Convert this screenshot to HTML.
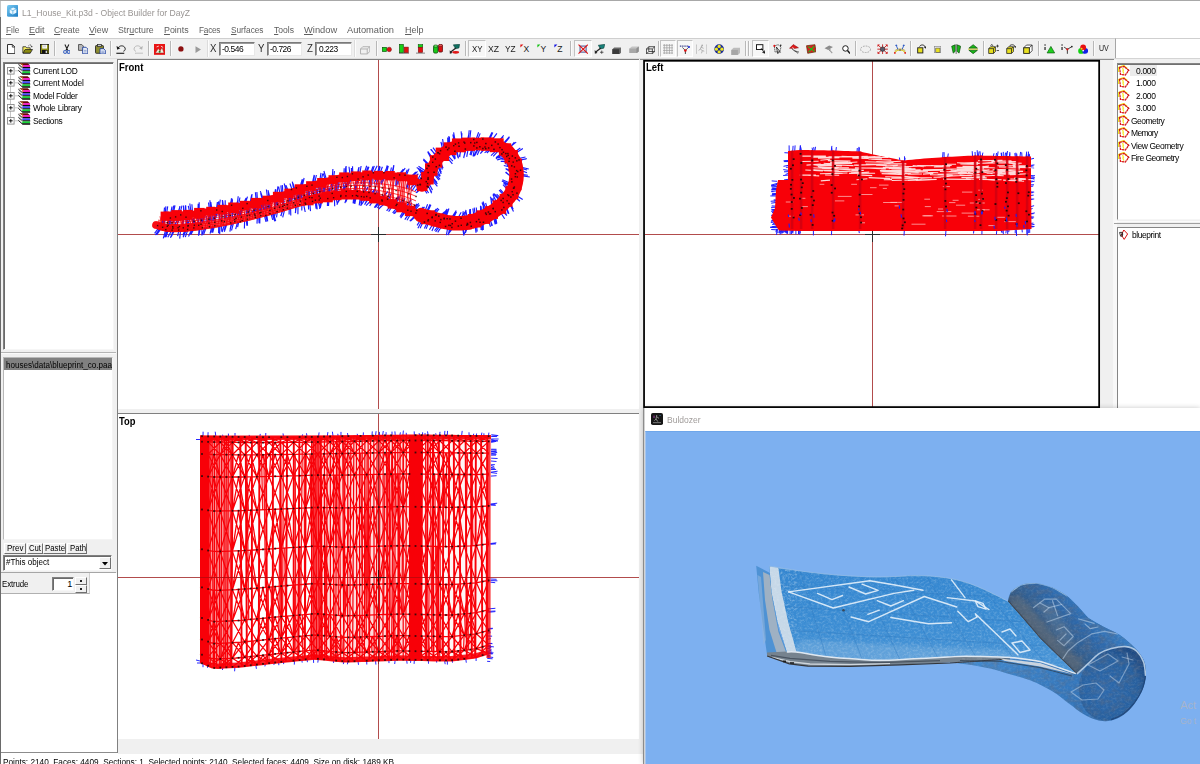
<!DOCTYPE html>
<html><head><meta charset="utf-8"><title>Object Builder</title>
<style>

*{box-sizing:border-box;margin:0;padding:0}
html,body{width:1200px;height:764px;overflow:hidden;background:#fff}
body{font-family:"Liberation Sans",sans-serif;font-size:9px;color:#000;position:relative}
.abs{position:absolute}
.tx{position:absolute;white-space:pre}
.tx u{text-decoration:underline;text-underline-offset:1px;text-decoration-thickness:1px}
#title{left:0;top:0;width:1200px;height:22px;background:#fff;border-top:1px solid #a8a8a8}
#lb{left:0;top:17px;width:1px;height:747px;background:#6a6a6a}
#tb{left:1px;top:38px;width:1115px;height:21px;background:#f0f0f0;border-top:1px solid #cfcfcf;border-bottom:1px solid #dedede;border-right:1px solid #a6a6a6}
#main{left:1px;top:59px;width:1199px;height:695px;background:#f0f0f0}
.vp{background:#fff;overflow:hidden}
.sunk{background:#fff;border:1px solid #808080;border-right-color:#f6f6f6;border-bottom-color:#f6f6f6}
.sunk2{background:#fff;border:1px solid #808080;border-right-color:#f6f6f6;border-bottom-color:#f6f6f6;box-shadow:inset 1px 1px 0 #6a6a6a}
.sunk3{background:#fff;border:1px solid #858585;border-right-color:#f6f6f6;border-bottom-color:#f6f6f6;box-shadow:inset 0 1px 0 #707070}
.rb{position:absolute;background:#f0f0f0;border:1px solid #fff;border-right-color:#707070;border-bottom-color:#707070}
.ax{position:absolute;background:#b24c4c}
.cr{position:absolute;background:#2a2a2a}

</style></head>
<body>

<div id="title" class="abs">
<svg class="abs" style="left:6.8px;top:4.4px" width="11.7" height="11.7" viewBox="0 0 12 12"><defs><linearGradient id="ti" x1="0" y1="0" x2="1" y2="1"><stop offset="0" stop-color="#7accf4"/><stop offset="1" stop-color="#1878c0"/></linearGradient></defs><rect width="12" height="12" rx="1.6" fill="url(#ti)"/><path d="M2.8 4.4 L6.4 2.6 L9.6 4 L9.6 8 L6 9.8 L2.8 8.2Z" fill="#eaf7ff"/><path d="M2.8 4.4 L6 5.8 L9.6 4 M6 5.8 V9.8" stroke="#58aee0" stroke-width="0.8" fill="none"/></svg>
<div class="tx" style="left:22.00px;top:5.67px;font-size:9.6px;line-height:12px;letter-spacing:0.000px;color:#999593;transform:scaleX(0.8976);transform-origin:0 0;">L1_House_Kit.p3d - Object Builder for DayZ</div></div>
<div class="tx" style="left:5.50px;top:24.47px;font-size:9.6px;line-height:12px;letter-spacing:0.000px;color:#5e5e5e;transform:scaleX(0.8663);transform-origin:0 0;"><u>F</u>ile</div><div class="tx" style="left:28.80px;top:24.47px;font-size:9.6px;line-height:12px;letter-spacing:0.000px;color:#5e5e5e;transform:scaleX(0.9428);transform-origin:0 0;"><u>E</u>dit</div><div class="tx" style="left:54.10px;top:24.47px;font-size:9.6px;line-height:12px;letter-spacing:0.000px;color:#5e5e5e;transform:scaleX(0.8925);transform-origin:0 0;"><u>C</u>reate</div><div class="tx" style="left:89.30px;top:24.47px;font-size:9.6px;line-height:12px;letter-spacing:0.000px;color:#5e5e5e;transform:scaleX(0.9309);transform-origin:0 0;"><u>V</u>iew</div><div class="tx" style="left:118.30px;top:24.47px;font-size:9.6px;line-height:12px;letter-spacing:0.000px;color:#5e5e5e;transform:scaleX(0.9169);transform-origin:0 0;">Str<u>u</u>cture</div><div class="tx" style="left:164.20px;top:24.47px;font-size:9.6px;line-height:12px;letter-spacing:0.000px;color:#5e5e5e;transform:scaleX(0.9261);transform-origin:0 0;"><u>P</u>oints</div><div class="tx" style="left:199.30px;top:24.47px;font-size:9.6px;line-height:12px;letter-spacing:-0.285px;color:#5e5e5e;transform:scaleX(0.8600);transform-origin:0 0;">F<u>a</u>ces</div><div class="tx" style="left:230.80px;top:24.47px;font-size:9.6px;line-height:12px;letter-spacing:-0.012px;color:#5e5e5e;transform:scaleX(0.8600);transform-origin:0 0;"><u>S</u>urfaces</div><div class="tx" style="left:273.50px;top:24.47px;font-size:9.6px;line-height:12px;letter-spacing:0.000px;color:#5e5e5e;transform:scaleX(0.8926);transform-origin:0 0;"><u>T</u>ools</div><div class="tx" style="left:303.70px;top:24.47px;font-size:9.6px;line-height:12px;letter-spacing:0.000px;color:#5e5e5e;transform:scaleX(0.9729);transform-origin:0 0;"><u>W</u>indow</div><div class="tx" style="left:346.80px;top:24.47px;font-size:9.6px;line-height:12px;letter-spacing:0.000px;color:#5e5e5e;transform:scaleX(0.9684);transform-origin:0 0;">Automation</div><div class="tx" style="left:404.50px;top:24.47px;font-size:9.6px;line-height:12px;letter-spacing:0.000px;color:#5e5e5e;transform:scaleX(0.9324);transform-origin:0 0;"><u>H</u>elp</div>
<div id="tb" class="abs"></div>
<svg class="abs" style="left:6.70px;top:43.84px" width="8.60" height="10.32" viewBox="0 0 10 12"><path d="M0.6 0.6H6.2L9.2 3.6V11.2H0.6Z" fill="#fff" stroke="#222" stroke-width="1.1"/><path d="M6.2 0.6V3.6H9.2" fill="none" stroke="#222" stroke-width="0.9"/></svg>
<svg class="abs" style="left:21.91px;top:43.84px" width="11.18" height="10.32" viewBox="0 0 13 12"><path d="M1 3.2H4.5L5.5 4.4H9.5V10.6H1Z" fill="#f8f060" stroke="#222" stroke-width="0.9"/><path d="M1.2 10.6L3.6 6.4H12.2L9.6 10.6Z" fill="#8a8a10" stroke="#222" stroke-width="0.9"/><path d="M7.5 2.2C8.6 0.6 10.6 0.8 11.2 2.2" fill="none" stroke="#222" stroke-width="0.9" stroke-dasharray="1.2 0.8"/><path d="M10.2 2.6L12.2 2.2L11.6 4.2Z" fill="#111"/></svg>
<svg class="abs" style="left:39.77px;top:43.84px" width="9.46" height="10.32" viewBox="0 0 11 12"><rect x="0.5" y="0.5" width="10" height="10.6" fill="#8c8c14" stroke="#111" stroke-width="1"/><rect x="2.6" y="0.9" width="5.6" height="4.4" fill="#fff"/><rect x="3.6" y="1.6" width="3.6" height="2.4" fill="#d8d8d8"/><rect x="2.2" y="7" width="6.6" height="4" fill="#111"/><rect x="6.6" y="7.8" width="1.4" height="2.8" fill="#f0f0f0"/></svg>
<div class="abs" style="left:54px;top:41px;width:1px;height:15px;background:#b8b8b8"></div><div class="abs" style="left:55px;top:41px;width:1px;height:15px;background:#fbfbfb"></div>
<svg class="abs" style="left:62.63px;top:43.84px" width="7.74" height="10.32" viewBox="0 0 9 12"><path d="M2.2 0.6L5.6 7.6M6.8 0.6L3.4 7.6" stroke="#1a1a1a" stroke-width="1.2" fill="none"/><circle cx="2.4" cy="9.2" r="1.7" fill="none" stroke="#3a62c0" stroke-width="1.2"/><circle cx="6.6" cy="9.2" r="1.7" fill="none" stroke="#3a62c0" stroke-width="1.2"/></svg>
<svg class="abs" style="left:77.84px;top:43.84px" width="10.32" height="10.32" viewBox="0 0 12 12"><path d="M0.6 0.6H4.4L6.2 2.4V7.4H0.6Z" fill="#b8b8b8" stroke="#3a3a3a" stroke-width="0.9"/><path d="M5.4 3.8H9.4L11.4 5.8V11.4H5.4Z" fill="#e8eef8" stroke="#1c3c9c" stroke-width="1"/><path d="M7 7.4H10M7 9.2H10" stroke="#7088c0" stroke-width="0.8"/></svg>
<svg class="abs" style="left:94.91px;top:43.84px" width="11.18" height="10.32" viewBox="0 0 13 12"><rect x="0.6" y="1.8" width="9.2" height="9" rx="0.8" fill="#8c8c30" stroke="#222" stroke-width="1"/><rect x="3" y="0.4" width="4.4" height="2.6" fill="#c8c8c8" stroke="#222" stroke-width="0.8"/><path d="M5.8 5.4H10L12 7.4V11.6H5.8Z" fill="#e0e8f8" stroke="#1c3c9c" stroke-width="1"/><path d="M7.4 8.4H10.4M7.4 10H10.4" stroke="#7088c0" stroke-width="0.8"/></svg>
<div class="abs" style="left:110px;top:41px;width:1px;height:15px;background:#b8b8b8"></div><div class="abs" style="left:111px;top:41px;width:1px;height:15px;background:#fbfbfb"></div>
<svg class="abs" style="left:115.84px;top:43.84px" width="10.32" height="10.32" viewBox="0 0 12 12"><path d="M2.4 4.6C4 1.4 9.4 1.2 10.6 4.8C11.2 7 9.8 8.2 8.6 8.4" fill="none" stroke="#1a1a1a" stroke-width="1.1"/><path d="M0.6 2.4L1.4 6.6L5 5Z" fill="#1a1a1a"/><path d="M0.4 10.8H9.6" stroke="#1a1a1a" stroke-width="1.3"/></svg>
<svg class="abs" style="left:132.84px;top:43.84px" width="10.32" height="10.32" viewBox="0 0 12 12"><path d="M9.6 4.6C8 1.4 2.6 1.2 1.4 4.8C0.8 7 2.2 8.2 3.4 8.4" fill="none" stroke="#b4b4b4" stroke-width="1.1"/><path d="M11.4 2.4L10.6 6.6L7 5Z" fill="#b4b4b4"/><path d="M2.4 10.8H11.6" stroke="#b8b8b8" stroke-width="1.3"/><path d="M3 11.8H12" stroke="#fff" stroke-width="0.8"/></svg>
<div class="abs" style="left:148px;top:41px;width:1px;height:15px;background:#b8b8b8"></div><div class="abs" style="left:149px;top:41px;width:1px;height:15px;background:#fbfbfb"></div>
<svg class="abs" style="left:153.91px;top:43.91px" width="11.18" height="11.18" viewBox="0 0 13 13"><rect x="0" y="0" width="13" height="12.6" fill="#e81414"/><path d="M1.6 10.4L5 5.2L7 8L9.4 4.2L11.6 10.4Z" fill="#f4f0e0" stroke="#902020" stroke-width="0.5"/><path d="M3 3.4L5.6 2.4M8 2.4L10.6 4" stroke="#fff" stroke-width="0.9"/><circle cx="6.6" cy="9" r="1.2" fill="#208020"/></svg>
<div class="abs" style="left:170px;top:41px;width:1px;height:15px;background:#b8b8b8"></div><div class="abs" style="left:171px;top:41px;width:1px;height:15px;background:#fbfbfb"></div>
<svg class="abs" style="left:178.49px;top:46.49px" width="6.02" height="6.02" viewBox="0 0 7 7"><circle cx="3.4" cy="3.4" r="3.1" fill="#8c1010"/></svg>
<svg class="abs" style="left:194.56px;top:45.63px" width="6.88" height="7.74" viewBox="0 0 8 9"><path d="M0.6 0.4L7 4.2L0.6 8Z" fill="#9a9a9a"/></svg>
<div class="abs" style="left:207px;top:40px;width:1px;height:17px;background:#dcdcdc"></div><div class="abs" style="left:208px;top:40px;width:1px;height:17px;background:#fdfdfd"></div>
<div class="tx" style="left:209.60px;top:40.62px;font-size:11.2px;line-height:15px;letter-spacing:-0.259px;color:#2a2a2a;transform:scaleX(0.8600);transform-origin:0 0;">X</div>
<div class="abs" style="left:219px;top:42px;width:36px;height:14px;background:#fff;border:1px solid #7a7a7a;border-right-color:#e8e8e8;border-bottom-color:#e8e8e8;box-shadow:inset 1px 1px 0 #9a9a9a"></div>
<div class="tx" style="left:222.00px;top:41.90px;font-size:9.8px;line-height:13px;letter-spacing:-0.510px;color:#000;transform:scaleX(0.8600);transform-origin:0 0;">-0.546</div>
<div class="tx" style="left:257.80px;top:40.62px;font-size:11.2px;line-height:15px;letter-spacing:-0.259px;color:#2a2a2a;transform:scaleX(0.8600);transform-origin:0 0;">Y</div>
<div class="abs" style="left:267px;top:42px;width:35px;height:14px;background:#fff;border:1px solid #7a7a7a;border-right-color:#e8e8e8;border-bottom-color:#e8e8e8;box-shadow:inset 1px 1px 0 #9a9a9a"></div>
<div class="tx" style="left:269.60px;top:41.90px;font-size:9.8px;line-height:13px;letter-spacing:-0.556px;color:#000;transform:scaleX(0.8600);transform-origin:0 0;">-0.726</div>
<div class="tx" style="left:307.00px;top:40.62px;font-size:11.2px;line-height:15px;letter-spacing:-0.332px;color:#2a2a2a;transform:scaleX(0.8600);transform-origin:0 0;">Z</div>
<div class="abs" style="left:315px;top:42px;width:37px;height:14px;background:#fff;border:1px solid #7a7a7a;border-right-color:#e8e8e8;border-bottom-color:#e8e8e8;box-shadow:inset 1px 1px 0 #9a9a9a"></div>
<div class="tx" style="left:318.80px;top:41.90px;font-size:9.8px;line-height:13px;letter-spacing:-0.551px;color:#000;transform:scaleX(0.8600);transform-origin:0 0;">0.223</div>
<div class="abs" style="left:354px;top:40px;width:1px;height:17px;background:#dcdcdc"></div><div class="abs" style="left:355px;top:40px;width:1px;height:17px;background:#fdfdfd"></div>
<svg class="abs" style="left:359.84px;top:44.84px" width="10.32" height="10.32" viewBox="0 0 12 12"><path d="M0.6 4.6H8.4V10.4H0.6Z M0.6 4.6L3.2 2H11.4V7.6L8.4 10.4 M8.4 4.6L11.4 2" fill="none" stroke="#b0b0b0" stroke-width="1.1"/></svg>
<div class="abs" style="left:376px;top:41px;width:1px;height:15px;background:#b8b8b8"></div><div class="abs" style="left:377px;top:41px;width:1px;height:15px;background:#fbfbfb"></div>
<svg class="abs" style="left:381.84px;top:45.63px" width="10.32" height="7.74" viewBox="0 0 12 9"><rect x="0.4" y="1.6" width="4.8" height="4.8" fill="#18d018" stroke="#0a5a0a" stroke-width="0.8"/><circle cx="8.4" cy="4" r="2.6" fill="#e01010" stroke="#701010" stroke-width="0.6"/></svg>
<svg class="abs" style="left:398.84px;top:43.84px" width="10.32" height="10.32" viewBox="0 0 12 12"><rect x="0.6" y="0.6" width="4.4" height="9.6" fill="#18d018" stroke="#0a5a0a" stroke-width="0.8"/><rect x="6" y="3.6" width="4.8" height="6.6" fill="#e01010" stroke="#701010" stroke-width="0.6"/><path d="M0 10.8H12" stroke="#444" stroke-width="0.7"/></svg>
<svg class="abs" style="left:415.77px;top:43.84px" width="9.46" height="10.32" viewBox="0 0 11 12"><rect x="2.6" y="0.8" width="5.2" height="3" fill="#18d018" stroke="#0a5a0a" stroke-width="0.7"/><rect x="2.6" y="3.8" width="5.2" height="6.2" fill="#e01010" stroke="#701010" stroke-width="0.6"/><path d="M0 10.6H11" stroke="#555" stroke-width="0.8"/></svg>
<svg class="abs" style="left:432.84px;top:43.84px" width="10.32" height="10.32" viewBox="0 0 12 12"><rect x="0.6" y="2" width="5" height="8.6" rx="1.6" fill="#18c818" stroke="#0a4a0a" stroke-width="0.9"/><ellipse cx="3.1" cy="2.4" rx="2.5" ry="1.3" fill="#70f070" stroke="#0a4a0a" stroke-width="0.7"/><rect x="6.4" y="1" width="4.8" height="8.4" rx="1.6" fill="#d81010" stroke="#501010" stroke-width="0.9"/><ellipse cx="8.8" cy="1.6" rx="2.4" ry="1.2" fill="#f06060" stroke="#501010" stroke-width="0.7"/></svg>
<svg class="abs" style="left:448.91px;top:43.84px" width="11.18" height="10.32" viewBox="0 0 13 12"><path d="M5 1L12.4 0.4L11.6 4.6L7.6 5.6Z" fill="#107060" stroke="#083830" stroke-width="0.6"/><path d="M8 4.6L1.6 9.6" stroke="#222" stroke-width="1.4"/><path d="M0.8 7.2L4 10.6L1 11.4Z" fill="#222"/><ellipse cx="7.8" cy="9.6" rx="4" ry="1.6" fill="#e01818"/></svg>
<div class="abs" style="left:465px;top:41px;width:1px;height:15px;background:#b8b8b8"></div><div class="abs" style="left:466px;top:41px;width:1px;height:15px;background:#fbfbfb"></div>
<div class="abs" style="left:468px;top:40px;width:18px;height:17px;background:#f7f7f7;border:1px solid #c2c2c2;border-right-color:#fff;border-bottom-color:#fff"></div>
<div class="tx" style="left:472.00px;top:44.12px;font-size:8.6px;line-height:11px;letter-spacing:0.000px;color:#222;transform:scaleX(0.9243);transform-origin:0 0;">XY</div>
<div class="tx" style="left:488.00px;top:44.12px;font-size:8.6px;line-height:11px;letter-spacing:0.000px;color:#222;transform:scaleX(1.0014);transform-origin:0 0;">XZ</div>
<div class="tx" style="left:504.60px;top:44.12px;font-size:8.6px;line-height:11px;letter-spacing:0.000px;color:#222;transform:scaleX(0.9650);transform-origin:0 0;">YZ</div>
<div class="tx" style="left:523.60px;top:44.12px;font-size:8.6px;line-height:11px;letter-spacing:0.000px;color:#222;transform:scaleX(1.0000);transform-origin:0 0;">X</div>
<svg class="abs" style="left:520.4px;top:44px" width="4" height="4"><path d="M0.4 0.4H3.4L0.4 3.4Z" fill="#e01010"/></svg>
<div class="tx" style="left:540.60px;top:44.12px;font-size:8.6px;line-height:11px;letter-spacing:0.000px;color:#222;transform:scaleX(1.0000);transform-origin:0 0;">Y</div>
<svg class="abs" style="left:537.4px;top:44px" width="4" height="4"><path d="M0.4 0.4H3.4L0.4 3.4Z" fill="#10c010"/></svg>
<div class="tx" style="left:557.20px;top:44.12px;font-size:8.6px;line-height:11px;letter-spacing:0.000px;color:#222;transform:scaleX(1.0000);transform-origin:0 0;">Z</div>
<svg class="abs" style="left:554.0px;top:44px" width="4" height="4"><path d="M0.4 0.4H3.4L0.4 3.4Z" fill="#1010e0"/></svg>
<div class="abs" style="left:570px;top:41px;width:1px;height:15px;background:#b8b8b8"></div><div class="abs" style="left:571px;top:41px;width:1px;height:15px;background:#fbfbfb"></div>
<div class="abs" style="left:574px;top:40px;width:18px;height:17px;background:#f7f7f7;border:1px solid #c2c2c2;border-right-color:#fff;border-bottom-color:#fff"></div>
<svg class="abs" style="left:577.84px;top:43.84px" width="10.32" height="10.32" viewBox="0 0 12 12"><rect x="2.4" y="2.4" width="7" height="7" fill="none" stroke="#203080" stroke-width="1"/><path d="M0.6 0.8L11.4 11.2M11.4 0.8L0.6 11.2" stroke="#e01010" stroke-width="1.2"/></svg>
<svg class="abs" style="left:593.91px;top:43.84px" width="11.18" height="10.32" viewBox="0 0 13 12"><path d="M5 1.4L12.6 0.4L11.4 4.8L7.4 5.8Z" fill="#18807a" stroke="#083830" stroke-width="0.6"/><path d="M8 4.6L2 9.4" stroke="#222" stroke-width="1.4"/><path d="M0.8 7L4 10.6L1 11.4Z" fill="#222"/><path d="M7 9.6H11M9 7.6V11.4" stroke="#333" stroke-width="0.9"/></svg>
<svg class="abs" style="left:611.77px;top:46.63px" width="9.46" height="7.74" viewBox="0 0 11 9"><path d="M0.4 2.6L2.6 0.6H10.6V6.6L8.4 8.6H0.4Z" fill="#6a6a6a"/><rect x="0.4" y="2.6" width="8" height="6" fill="#3a3a3a"/></svg>
<svg class="abs" style="left:628.84px;top:45.63px" width="10.32" height="7.74" viewBox="0 0 12 9"><path d="M0.4 3L3.4 0.6H11.4V6.4L8.4 8.8H0.4Z" fill="#c4c4c4"/><rect x="0.4" y="3" width="8" height="5.8" fill="#a8a8a8"/><path d="M8.4 3V8.8L11.4 6.4V0.6Z" fill="#8e8e8e"/></svg>
<svg class="abs" style="left:645.77px;top:45.70px" width="9.46" height="8.60" viewBox="0 0 11 10"><path d="M0.6 3.4H7.4V9H0.6Z M0.6 3.4L3.2 0.8H10.2V6.4L7.4 9 M7.4 3.4L10.2 0.8 M3.2 0.8V6.4H10.2 M3.2 6.4L0.6 9" fill="none" stroke="#2a2a2a" stroke-width="0.9"/></svg>
<div class="abs" style="left:658px;top:41px;width:1px;height:15px;background:#b8b8b8"></div><div class="abs" style="left:659px;top:41px;width:1px;height:15px;background:#fbfbfb"></div>
<div class="abs" style="left:660px;top:40px;width:16px;height:17px;background:#f7f7f7;border:1px solid #c2c2c2;border-right-color:#fff;border-bottom-color:#fff"></div>
<svg class="abs" style="left:662.84px;top:43.84px" width="10.32" height="10.32" viewBox="0 0 12 12"><path d="M0 1.5H12M0 4.5H12M0 7.5H12M0 10.5H12M1.5 0V12M4.5 0V12M7.5 0V12M10.5 0V12" stroke="#9a9a9a" stroke-width="0.8"/></svg>
<div class="abs" style="left:677px;top:40px;width:16px;height:17px;background:#f7f7f7;border:1px solid #c2c2c2;border-right-color:#fff;border-bottom-color:#fff"></div>
<svg class="abs" style="left:678.91px;top:43.84px" width="11.18" height="10.32" viewBox="0 0 13 12"><path d="M1 2.4H11" stroke="#404890" stroke-width="1.6" stroke-dasharray="1.4 0.7"/><path d="M4 4L7.4 7.6L12 3" fill="none" stroke="#303030" stroke-width="0.9"/><path d="M7.4 7.6V11.6" stroke="#222" stroke-width="1"/><circle cx="7.4" cy="7.6" r="1.5" fill="#e01010"/><circle cx="11.6" cy="3.4" r="1.2" fill="#2030e0"/></svg>
<svg class="abs" style="left:695.91px;top:43.84px" width="11.18" height="10.32" viewBox="0 0 13 12"><path d="M1 1H0.4V11H1M12 1H12.6V11H12" fill="none" stroke="#aaa" stroke-width="0.8"/><path d="M6.6 2.4L5 6L7.4 7.6L6.4 10.8M5 6L3 7.4M5.6 3.6L8.8 5M7.4 7.6L9.6 8.4" fill="none" stroke="#a8a8a8" stroke-width="1"/><circle cx="7.2" cy="1.6" r="1" fill="#a8a8a8"/></svg>
<svg class="abs" style="left:713.84px;top:43.84px" width="10.32" height="10.32" viewBox="0 0 12 12"><circle cx="6" cy="6" r="5.6" fill="#1a2a9a"/><circle cx="6" cy="2.8" r="1.9" fill="#f0e820"/><circle cx="6" cy="9.2" r="1.9" fill="#f0e820"/><circle cx="2.8" cy="6" r="1.9" fill="#f0e820"/><circle cx="9.2" cy="6" r="1.9" fill="#f0e820"/><circle cx="6" cy="6" r="1.2" fill="#1a2a9a"/></svg>
<svg class="abs" style="left:730.77px;top:46.70px" width="9.46" height="8.60" viewBox="0 0 11 10"><path d="M0.4 3.4L3 1H10.6V6.8L8 9.2H0.4Z" fill="#bcbcbc"/><rect x="0.4" y="3.4" width="7.6" height="5.8" fill="#a6a6a6"/></svg>
<div class="abs" style="left:745px;top:41px;width:1px;height:15px;background:#b8b8b8"></div><div class="abs" style="left:746px;top:41px;width:1px;height:15px;background:#fbfbfb"></div>
<div class="abs" style="left:748px;top:41px;width:1px;height:15px;background:#b8b8b8"></div><div class="abs" style="left:749px;top:41px;width:1px;height:15px;background:#fbfbfb"></div>
<div class="abs" style="left:752px;top:40px;width:17px;height:17px;background:#f7f7f7;border:1px solid #c2c2c2;border-right-color:#fff;border-bottom-color:#fff"></div>
<svg class="abs" style="left:755.77px;top:43.84px" width="9.46" height="10.32" viewBox="0 0 11 12"><rect x="0.6" y="0.8" width="7.4" height="5.6" fill="#fff" stroke="#111" stroke-width="1.1"/><path d="M6 5L10.2 10.4M7.4 9.6L10.4 10.6L10 7.6" fill="none" stroke="#111" stroke-width="1.1"/></svg>
<svg class="abs" style="left:772.77px;top:43.84px" width="9.46" height="10.32" viewBox="0 0 11 12"><path d="M1.6 2.2L6 0.8L9.4 3.4L8 8.4L2.4 9.4Z" fill="none" stroke="#222" stroke-width="0.9" stroke-dasharray="1.6 0.8"/><circle cx="1.6" cy="2.2" r="1.2" fill="#e01010"/><path d="M4 3.6L8.6 9.6L6.4 9L5.6 11.2Z" fill="#fff" stroke="#111" stroke-width="0.9"/><circle cx="9" cy="1.4" r="0.9" fill="#111"/></svg>
<svg class="abs" style="left:788.84px;top:43.84px" width="10.32" height="10.32" viewBox="0 0 12 12"><path d="M0.6 5L5 0.6L11 4.4L6.4 5.2Z" fill="#e01818" stroke="#801010" stroke-width="0.6"/><path d="M3.6 5.6C5 8 8 8.4 10.6 11M5.6 6.4C6.6 8.6 9 8.6 11.6 9.4" fill="none" stroke="#444" stroke-width="1"/><path d="M4 3.6L6.4 6.6" stroke="#fff" stroke-width="0.8"/></svg>
<svg class="abs" style="left:805.84px;top:43.84px" width="10.32" height="10.32" viewBox="0 0 12 12"><path d="M0.6 2L10.4 0.8L11.6 9L2 10.8Z" fill="#d82020" stroke="#6a3010" stroke-width="0.9"/><path d="M2.4 3L10 8.8M9.6 2.4L3 9.4" stroke="#18c018" stroke-width="1.3"/></svg>
<svg class="abs" style="left:823.77px;top:43.84px" width="9.46" height="10.32" viewBox="0 0 11 12"><path d="M0.6 5L6 1.6L10.4 3.4L5 7Z" fill="#8c8c8c"/><path d="M5 5.4L9.6 10.6" stroke="#9a9a9a" stroke-width="1.2"/><path d="M6 7.6L7.6 6.4" stroke="#777" stroke-width="0.8"/></svg>
<svg class="abs" style="left:841.70px;top:44.84px" width="8.60" height="10.32" viewBox="0 0 10 12"><circle cx="4" cy="4" r="3.2" fill="#fff" stroke="#111" stroke-width="1.1"/><path d="M6.4 6.4L9.4 9.8" stroke="#111" stroke-width="1.6"/></svg>
<div class="abs" style="left:855px;top:41px;width:1px;height:15px;background:#b8b8b8"></div><div class="abs" style="left:856px;top:41px;width:1px;height:15px;background:#fbfbfb"></div>
<svg class="abs" style="left:859.91px;top:44.70px" width="11.18" height="8.60" viewBox="0 0 13 10"><ellipse cx="6.5" cy="5" rx="5.8" ry="3.8" fill="none" stroke="#9c9c9c" stroke-width="1" stroke-dasharray="2 1.2"/></svg>
<svg class="abs" style="left:876.91px;top:43.84px" width="11.18" height="10.32" viewBox="0 0 13 12"><path d="M1.4 1.4L11.6 10.6M11.6 1.4L1.4 10.6M6.5 0.4V11.6M0.4 6H12.6" stroke="#c01010" stroke-width="1"/><circle cx="6.5" cy="6" r="2.6" fill="#5a5a6a" stroke="#222" stroke-width="0.6"/><path d="M0.6 0.6H3.4L0.6 3.4ZM12.4 0.6V3.4L9.6 0.6ZM0.6 11.4V8.6L3.4 11.4ZM12.4 11.4H9.6L12.4 8.6Z" fill="#d01010"/></svg>
<svg class="abs" style="left:893.98px;top:43.84px" width="12.04" height="10.32" viewBox="0 0 14 12"><path d="M0.8 10C3.6 6 10.4 6 13.2 10" fill="none" stroke="#d8c820" stroke-width="1.3"/><path d="M0.8 8C4 5 10 5 13.2 8" fill="none" stroke="#b09010" stroke-width="0.8"/><path d="M4.6 6.4L2.6 1.6M9.4 6.4L11.4 1.6" stroke="#2050c0" stroke-width="1"/><path d="M1.4 2.4L2.4 0.2L4.2 2Z M9.8 2L11.6 0.2L12.6 2.4Z" fill="#2050c0"/><circle cx="1" cy="10.4" r="1" fill="#e01010"/><circle cx="13" cy="10.4" r="1" fill="#e01010"/><circle cx="7" cy="7" r="0.8" fill="#222"/></svg>
<div class="abs" style="left:910px;top:41px;width:1px;height:15px;background:#b8b8b8"></div><div class="abs" style="left:911px;top:41px;width:1px;height:15px;background:#fbfbfb"></div>
<svg class="abs" style="left:916.77px;top:43.84px" width="9.46" height="10.32" viewBox="0 0 11 12"><rect x="0.8" y="4.4" width="6" height="6" fill="#e8e020" stroke="#222" stroke-width="1.1"/><path d="M3 3C4 0.4 8.6 0.4 9.6 3.6" fill="none" stroke="#222" stroke-width="1.1"/><path d="M8 3.4L10 5.6L10.8 2.8Z" fill="#222"/></svg>
<svg class="abs" style="left:933.63px;top:45.63px" width="7.74" height="7.74" viewBox="0 0 9 9"><rect x="0.6" y="0.6" width="7.4" height="7.4" fill="#fff" stroke="#888" stroke-width="0.8"/><rect x="2" y="2.4" width="5" height="5" fill="#e8e020" stroke="#555" stroke-width="0.8"/></svg>
<svg class="abs" style="left:950.84px;top:43.84px" width="10.32" height="10.32" viewBox="0 0 12 12"><path d="M4.8 1L0.8 2.6L2.6 10.6L4.8 8.6Z" fill="#18b818" stroke="#0a4a0a" stroke-width="0.8"/><path d="M7.2 1L11.2 2.6L9.4 10.6L7.2 8.6Z" fill="#18b818" stroke="#0a4a0a" stroke-width="0.8"/><path d="M6 0V12" stroke="#222" stroke-width="0.7"/></svg>
<svg class="abs" style="left:967.84px;top:43.84px" width="10.32" height="10.32" viewBox="0 0 12 12"><path d="M1 4.8L6 0.8L11 4.8Z" fill="#18b818" stroke="#0a4a0a" stroke-width="0.8"/><path d="M1 7.2L6 11.2L11 7.2Z" fill="#18b818" stroke="#0a4a0a" stroke-width="0.8"/><path d="M0 6H12" stroke="#e0d020" stroke-width="0.9"/></svg>
<div class="abs" style="left:983px;top:41px;width:1px;height:15px;background:#b8b8b8"></div><div class="abs" style="left:984px;top:41px;width:1px;height:15px;background:#fbfbfb"></div>
<svg class="abs" style="left:987.91px;top:43.84px" width="11.18" height="10.32" viewBox="0 0 13 12"><path d="M0.8 5.4h5.6v5.6h-5.6ZM0.8 5.4l2.2 -2.2h5.6v5.6l-2.2 2.2M6.4 5.4l2.2 -2.2" fill="#e8e020" stroke="#222" stroke-width="0.9"/><path d="M9.6 2.4H12.6M11 0.8V4M10 7.6H12.8" stroke="#222" stroke-width="0.9"/><path d="M3 2.2L4.4 0.4L5.8 2.2" fill="none" stroke="#222" stroke-width="0.9"/></svg>
<svg class="abs" style="left:1005.84px;top:43.84px" width="10.32" height="10.32" viewBox="0 0 12 12"><path d="M0.8 5.4h5.6v5.6h-5.6ZM0.8 5.4l2.2 -2.2h5.6v5.6l-2.2 2.2M6.4 5.4l2.2 -2.2" fill="#e8e020" stroke="#222" stroke-width="0.9"/><path d="M4 2.4C5.6 0.2 9.6 0.4 10.6 3" fill="none" stroke="#222" stroke-width="1"/><path d="M9.2 2.8L11 4.8L11.6 2.2Z" fill="#222"/></svg>
<svg class="abs" style="left:1022.84px;top:43.84px" width="10.32" height="10.32" viewBox="0 0 12 12"><path d="M0.8 4.4h6.6v6.6h-6.6ZM0.8 4.4l3.2 -3.2h6.6v6.6l-3.2 3.2M7.4 4.4l3.2 -3.2" fill="#fff" stroke="#222" stroke-width="0.9"/><path d="M0.8 4.4h6.6v6.6h-6.6Z" fill="#e8e020" stroke="#222" stroke-width="0.9"/></svg>
<div class="abs" style="left:1038px;top:41px;width:1px;height:15px;background:#b8b8b8"></div><div class="abs" style="left:1039px;top:41px;width:1px;height:15px;background:#fbfbfb"></div>
<svg class="abs" style="left:1043.91px;top:43.84px" width="11.18" height="10.32" viewBox="0 0 13 12"><path d="M3.6 10.4L8 2.8L12.4 10.4Z" fill="#20d020" stroke="#0a5a0a" stroke-width="0.8"/><path d="M1.2 3.4V7" stroke="#111" stroke-width="1.3"/><circle cx="1.2" cy="1.2" r="0.8" fill="#111"/></svg>
<svg class="abs" style="left:1060.98px;top:43.84px" width="12.04" height="10.32" viewBox="0 0 14 12"><path d="M1.2 3.4V7" stroke="#111" stroke-width="1.3"/><circle cx="1.2" cy="1.2" r="0.8" fill="#111"/><path d="M3.6 3.6L7.4 6.2L12.4 3.2M7.4 6.2V11.4" fill="none" stroke="#222" stroke-width="1"/><circle cx="7.4" cy="6.2" r="1.3" fill="#e01010"/><circle cx="12.6" cy="3" r="1" fill="#222"/></svg>
<svg class="abs" style="left:1077.84px;top:43.84px" width="10.32" height="10.32" viewBox="0 0 12 12"><circle cx="3.6" cy="8" r="3.4" fill="#10d010"/><circle cx="8.4" cy="8" r="3.4" fill="#1020e8"/><circle cx="6" cy="4" r="3.4" fill="#e81010"/><circle cx="4.2" cy="5.4" r="1.1" fill="#e8e020"/><circle cx="6" cy="7.6" r="1" fill="#fff"/></svg>
<div class="abs" style="left:1093px;top:41px;width:1px;height:15px;background:#b8b8b8"></div><div class="abs" style="left:1094px;top:41px;width:1px;height:15px;background:#fbfbfb"></div>
<div class="tx" style="left:1099.00px;top:43.06px;font-size:8.2px;line-height:11px;letter-spacing:-0.212px;color:#222;transform:scaleX(0.8600);transform-origin:0 0;">UV</div>
<div id="main" class="abs"></div>
<div id="lb" class="abs"></div><div class="abs" style="left:0;top:1px;width:1px;height:16px;background:#c6c6c6"></div>

<!-- left tree panel -->
<div class="abs sunk2" style="left:3px;top:62px;width:111px;height:288px"></div>
<div class="abs" style="left:10px;top:74px;width:1px;height:43px;background:#c4c4c4"></div>
<svg class="abs" style="left:7px;top:67px" width="13" height="8" viewBox="0 0 13 8">
<rect x="0.5" y="0.5" width="6.6" height="6.6" fill="#fff" stroke="#8c8c8c" stroke-width="0.9"/><path d="M1.9 3.8H5.7M3.8 1.9V5.7" stroke="#000" stroke-width="0.9"/>
<path d="M7.6 3.8H12" stroke="#b8b8b8" stroke-width="0.8"/></svg><svg class="abs" style="left:17.8px;top:63px" width="13" height="12" viewBox="0 0 13 12">
<path d="M1.2 0.2 L9.6 0.2 L12 2.2 L4.2 2.2Z" fill="#6e0808"/>
<rect x="4.2" y="2.1" width="7.8" height="2.1" fill="#f214c4"/><path d="M4.2 4.1H12.2V5.5H4.8Z" fill="#080808"/>
<rect x="4.2" y="5.4" width="7.8" height="1.9" fill="#4848ff"/><path d="M4.2 7.2H12.2V8.5H4.8Z" fill="#080808"/>
<rect x="4.2" y="8.4" width="7.8" height="2" fill="#14d434"/><path d="M3.6 10.3H12.2V11.7H4.4Z" fill="#080808"/>
<path d="M0.4 1.2 L4 4.4 M0.4 4.3 L4 7.4 M0.4 7.4 L4 10.6" stroke="#151515" stroke-width="1"/>
<path d="M0.6 2.8 L3.6 5.6 M0.6 5.9 L3.6 8.8" stroke="#bbb" stroke-width="0.6"/>
<path d="M3.2 0.5 L4.8 2.2 L4.8 4" stroke="#d8a020" stroke-width="0.9" fill="none"/>
</svg><div class="tx" style="left:33.00px;top:63.64px;font-size:9.7px;line-height:13px;letter-spacing:-0.295px;color:#000;transform:scaleX(0.8600);transform-origin:0 0;">Current LOD</div><svg class="abs" style="left:7px;top:79px" width="13" height="8" viewBox="0 0 13 8">
<rect x="0.5" y="0.5" width="6.6" height="6.6" fill="#fff" stroke="#8c8c8c" stroke-width="0.9"/><path d="M1.9 3.8H5.7M3.8 1.9V5.7" stroke="#000" stroke-width="0.9"/>
<path d="M7.6 3.8H12" stroke="#b8b8b8" stroke-width="0.8"/></svg><svg class="abs" style="left:17.8px;top:76px" width="13" height="12" viewBox="0 0 13 12">
<path d="M1.2 0.2 L9.6 0.2 L12 2.2 L4.2 2.2Z" fill="#6e0808"/>
<rect x="4.2" y="2.1" width="7.8" height="2.1" fill="#f214c4"/><path d="M4.2 4.1H12.2V5.5H4.8Z" fill="#080808"/>
<rect x="4.2" y="5.4" width="7.8" height="1.9" fill="#4848ff"/><path d="M4.2 7.2H12.2V8.5H4.8Z" fill="#080808"/>
<rect x="4.2" y="8.4" width="7.8" height="2" fill="#14d434"/><path d="M3.6 10.3H12.2V11.7H4.4Z" fill="#080808"/>
<path d="M0.4 1.2 L4 4.4 M0.4 4.3 L4 7.4 M0.4 7.4 L4 10.6" stroke="#151515" stroke-width="1"/>
<path d="M0.6 2.8 L3.6 5.6 M0.6 5.9 L3.6 8.8" stroke="#bbb" stroke-width="0.6"/>
<path d="M3.2 0.5 L4.8 2.2 L4.8 4" stroke="#d8a020" stroke-width="0.9" fill="none"/>
</svg><div class="tx" style="left:33.00px;top:76.14px;font-size:9.7px;line-height:13px;letter-spacing:-0.193px;color:#000;transform:scaleX(0.8600);transform-origin:0 0;">Current Model</div><svg class="abs" style="left:7px;top:92px" width="13" height="8" viewBox="0 0 13 8">
<rect x="0.5" y="0.5" width="6.6" height="6.6" fill="#fff" stroke="#8c8c8c" stroke-width="0.9"/><path d="M1.9 3.8H5.7M3.8 1.9V5.7" stroke="#000" stroke-width="0.9"/>
<path d="M7.6 3.8H12" stroke="#b8b8b8" stroke-width="0.8"/></svg><svg class="abs" style="left:17.8px;top:88px" width="13" height="12" viewBox="0 0 13 12">
<path d="M1.2 0.2 L9.6 0.2 L12 2.2 L4.2 2.2Z" fill="#6e0808"/>
<rect x="4.2" y="2.1" width="7.8" height="2.1" fill="#f214c4"/><path d="M4.2 4.1H12.2V5.5H4.8Z" fill="#080808"/>
<rect x="4.2" y="5.4" width="7.8" height="1.9" fill="#4848ff"/><path d="M4.2 7.2H12.2V8.5H4.8Z" fill="#080808"/>
<rect x="4.2" y="8.4" width="7.8" height="2" fill="#14d434"/><path d="M3.6 10.3H12.2V11.7H4.4Z" fill="#080808"/>
<path d="M0.4 1.2 L4 4.4 M0.4 4.3 L4 7.4 M0.4 7.4 L4 10.6" stroke="#151515" stroke-width="1"/>
<path d="M0.6 2.8 L3.6 5.6 M0.6 5.9 L3.6 8.8" stroke="#bbb" stroke-width="0.6"/>
<path d="M3.2 0.5 L4.8 2.2 L4.8 4" stroke="#d8a020" stroke-width="0.9" fill="none"/>
</svg><div class="tx" style="left:33.00px;top:88.64px;font-size:9.7px;line-height:13px;letter-spacing:-0.394px;color:#000;transform:scaleX(0.8600);transform-origin:0 0;">Model Folder</div><svg class="abs" style="left:7px;top:104px" width="13" height="8" viewBox="0 0 13 8">
<rect x="0.5" y="0.5" width="6.6" height="6.6" fill="#fff" stroke="#8c8c8c" stroke-width="0.9"/><path d="M1.9 3.8H5.7M3.8 1.9V5.7" stroke="#000" stroke-width="0.9"/>
<path d="M7.6 3.8H12" stroke="#b8b8b8" stroke-width="0.8"/></svg><svg class="abs" style="left:17.8px;top:101px" width="13" height="12" viewBox="0 0 13 12">
<path d="M1.2 0.2 L9.6 0.2 L12 2.2 L4.2 2.2Z" fill="#6e0808"/>
<rect x="4.2" y="2.1" width="7.8" height="2.1" fill="#f214c4"/><path d="M4.2 4.1H12.2V5.5H4.8Z" fill="#080808"/>
<rect x="4.2" y="5.4" width="7.8" height="1.9" fill="#4848ff"/><path d="M4.2 7.2H12.2V8.5H4.8Z" fill="#080808"/>
<rect x="4.2" y="8.4" width="7.8" height="2" fill="#14d434"/><path d="M3.6 10.3H12.2V11.7H4.4Z" fill="#080808"/>
<path d="M0.4 1.2 L4 4.4 M0.4 4.3 L4 7.4 M0.4 7.4 L4 10.6" stroke="#151515" stroke-width="1"/>
<path d="M0.6 2.8 L3.6 5.6 M0.6 5.9 L3.6 8.8" stroke="#bbb" stroke-width="0.6"/>
<path d="M3.2 0.5 L4.8 2.2 L4.8 4" stroke="#d8a020" stroke-width="0.9" fill="none"/>
</svg><div class="tx" style="left:33.00px;top:101.14px;font-size:9.7px;line-height:13px;letter-spacing:-0.252px;color:#000;transform:scaleX(0.8600);transform-origin:0 0;">Whole Library</div><svg class="abs" style="left:7px;top:117px" width="13" height="8" viewBox="0 0 13 8">
<rect x="0.5" y="0.5" width="6.6" height="6.6" fill="#fff" stroke="#8c8c8c" stroke-width="0.9"/><path d="M1.9 3.8H5.7M3.8 1.9V5.7" stroke="#000" stroke-width="0.9"/>
<path d="M7.6 3.8H12" stroke="#b8b8b8" stroke-width="0.8"/></svg><svg class="abs" style="left:17.8px;top:113px" width="13" height="12" viewBox="0 0 13 12">
<path d="M1.2 0.2 L9.6 0.2 L12 2.2 L4.2 2.2Z" fill="#6e0808"/>
<rect x="4.2" y="2.1" width="7.8" height="2.1" fill="#f214c4"/><path d="M4.2 4.1H12.2V5.5H4.8Z" fill="#080808"/>
<rect x="4.2" y="5.4" width="7.8" height="1.9" fill="#4848ff"/><path d="M4.2 7.2H12.2V8.5H4.8Z" fill="#080808"/>
<rect x="4.2" y="8.4" width="7.8" height="2" fill="#14d434"/><path d="M3.6 10.3H12.2V11.7H4.4Z" fill="#080808"/>
<path d="M0.4 1.2 L4 4.4 M0.4 4.3 L4 7.4 M0.4 7.4 L4 10.6" stroke="#151515" stroke-width="1"/>
<path d="M0.6 2.8 L3.6 5.6 M0.6 5.9 L3.6 8.8" stroke="#bbb" stroke-width="0.6"/>
<path d="M3.2 0.5 L4.8 2.2 L4.8 4" stroke="#d8a020" stroke-width="0.9" fill="none"/>
</svg><div class="tx" style="left:33.00px;top:113.64px;font-size:9.7px;line-height:13px;letter-spacing:-0.391px;color:#000;transform:scaleX(0.8600);transform-origin:0 0;">Sections</div>
<!-- divider -->
<div class="abs" style="left:1px;top:352px;width:115px;height:1px;background:#b4b4b4"></div>
<div class="abs" style="left:1px;top:353px;width:115px;height:1px;background:#fafafa"></div>
<!-- texture list -->
<div class="abs" style="left:3px;top:357px;width:110px;height:183px;background:#fff;border:1px solid #b8b8b8;border-right-color:#f4f4f4;border-bottom-color:#f4f4f4"></div>
<div class="abs" style="left:4px;top:358px;width:108px;height:12px;background:#808080"></div>
<div class="tx" style="left:5.50px;top:358.61px;font-size:9.2px;line-height:12px;letter-spacing:0.000px;color:#000;transform:scaleX(0.8792);transform-origin:0 0;">houses\data\blueprint_co.paa</div>
<div class="rb" style="left:4px;top:543px;width:22px;height:11px"></div><div class="tx" style="left:6.70px;top:541.88px;font-size:9px;line-height:12px;letter-spacing:0.000px;color:#000;transform:scaleX(0.8911);transform-origin:0 0;">Prev</div>
<div class="rb" style="left:27px;top:543px;width:16px;height:11px"></div><div class="tx" style="left:28.80px;top:541.88px;font-size:9px;line-height:12px;letter-spacing:-0.031px;color:#000;transform:scaleX(0.8600);transform-origin:0 0;">Cut</div>
<div class="rb" style="left:43px;top:543px;width:23px;height:11px"></div><div class="tx" style="left:44.50px;top:541.88px;font-size:9px;line-height:12px;letter-spacing:0.000px;color:#000;transform:scaleX(0.8690);transform-origin:0 0;">Paste</div>
<div class="rb" style="left:67px;top:543px;width:20px;height:11px"></div><div class="tx" style="left:69.50px;top:541.88px;font-size:9px;line-height:12px;letter-spacing:0.000px;color:#000;transform:scaleX(0.8641);transform-origin:0 0;">Path</div>
<!-- combo -->
<div class="abs sunk2" style="left:3px;top:555px;width:109px;height:16px"></div>
<div class="tx" style="left:5.70px;top:556.31px;font-size:9.2px;line-height:12px;letter-spacing:0.000px;color:#000;transform:scaleX(0.8739);transform-origin:0 0;">#This object</div>
<div class="rb" style="left:99px;top:557px;width:12px;height:12px"></div>
<svg class="abs" style="left:102px;top:562px" width="6" height="4"><path d="M0 0H6L3 3.5Z" fill="#000"/></svg>
<div class="abs" style="left:1px;top:572px;width:115px;height:1px;background:#a6a6a6"></div>
<!-- extrude -->
<div class="abs" style="left:1px;top:573px;width:89px;height:21px;background:#f0f0f0;border-bottom:1px solid #b0b0b0;border-right:1px solid #d0d0d0"></div>
<div class="tx" style="left:1.80px;top:577.81px;font-size:9.2px;line-height:12px;letter-spacing:-0.162px;color:#000;transform:scaleX(0.8600);transform-origin:0 0;">Extrude</div>
<div class="abs sunk2" style="left:52px;top:577px;width:22px;height:14px"></div>
<div class="tx" style="left:67.30px;top:577.81px;font-size:9.2px;line-height:12px;letter-spacing:0.000px;color:#000;transform:scaleX(1.0000);transform-origin:0 0;">1</div>
<div class="rb" style="left:75px;top:577px;width:12px;height:8px"></div>
<div class="rb" style="left:75px;top:585px;width:12px;height:8px"></div>
<div class="abs" style="left:80px;top:580px;width:2px;height:2px;background:#222"></div>
<div class="abs" style="left:80px;top:588px;width:2px;height:2px;background:#222"></div>
<div class="abs" style="left:90px;top:573px;width:27px;height:22px;background:#fff"></div>
<div class="abs" style="left:1px;top:594px;width:116px;height:158px;background:#fff"></div>
<div class="abs" style="left:1px;top:752px;width:116px;height:1px;background:#8c8c8c"></div>
<div class="abs" style="left:117px;top:59px;width:1px;height:694px;background:#808080"></div>

<!-- Front viewport -->
<div class="abs vp" style="left:118px;top:59px;width:521px;height:350px;border-top:1px solid #808080"><div class="ax" style="left:260px;top:0;width:1px;height:350px"></div><div class="ax" style="left:0;top:174px;width:522px;height:1px"></div><div class="cr" style="left:253px;top:174px;width:15px;height:1px"></div><div class="cr" style="left:260px;top:167px;width:1px;height:15px"></div><svg class="abs" style="left:-118px;top:-60px" width="760" height="480" viewBox="0 0 760 480"><path d="M165.5 218.8L163.4 226.5M164.1 218.9L162.1 225.5M162.9 219.0L160.8 226.6M166.7 213.0L167.7 206.4M165.3 213.0L165.9 206.4M164.0 213.1L164.5 207.5M171.9 218.4L170.2 223.4M170.5 218.5L168.4 223.7M169.3 218.6L167.6 223.6M173.5 212.7L175.0 205.4M172.2 212.7L173.8 205.5M170.8 212.8L172.0 206.5M178.3 218.0L176.0 223.0M176.4 217.8L173.1 222.5M175.4 218.0L172.0 223.6M180.2 212.3L182.0 205.6M178.7 212.4L179.9 206.0M177.9 212.6L180.0 206.7M186.0 217.8L185.9 225.0M184.2 217.9L182.6 225.5M183.1 218.0L182.3 225.9M186.0 211.8L185.7 205.8M185.0 211.9L185.6 205.3M183.5 212.0L183.6 205.4M191.2 216.9L188.4 222.2M190.4 217.2L188.0 224.6M192.4 211.2L191.9 204.3M190.9 211.4L189.8 203.5M189.5 211.6L188.3 205.8M199.7 216.2L200.5 221.4M198.1 216.4L198.5 222.8M197.2 216.6L198.4 222.1M199.2 210.2L199.2 202.3M198.0 210.4L198.2 203.8M204.8 214.9L203.1 220.2M204.0 215.2L202.9 222.8M202.4 215.4L200.7 222.3M212.5 214.0L213.3 220.8M210.8 214.2L210.7 220.7M209.5 214.4L209.4 219.7M211.7 208.1L210.8 202.0M210.6 208.3L209.9 200.3M209.3 208.5L208.5 202.5M217.6 212.9L214.8 220.4M216.1 213.0L213.3 218.9M219.2 207.1L220.3 199.7M217.8 207.3L218.7 201.4M216.6 207.5L217.4 202.0M225.2 206.1L225.2 200.2M223.5 206.3L222.6 200.5M222.6 206.5L222.4 200.0M231.9 211.0L232.2 218.2M230.1 211.2L229.0 218.8M228.9 211.4L228.5 216.9M232.0 205.0L232.5 199.2M230.8 205.2L231.4 198.5M229.9 205.5L231.9 198.2M238.2 209.8L238.2 215.3M237.1 210.1L237.3 217.0M235.5 210.3L235.0 217.1M238.8 203.9L239.9 197.5M237.3 204.1L238.2 196.2M236.6 204.5L238.1 199.5M243.3 208.2L239.9 214.2M242.6 208.7L240.6 215.8M240.9 208.8L238.0 214.7M245.6 202.7L247.5 196.7M244.6 203.0L246.7 198.0M243.5 203.4L246.1 197.9M250.4 207.0L248.8 213.5M249.0 207.3L246.6 214.7M247.7 207.5L246.0 212.6M251.4 201.1L252.0 194.0M250.4 201.4L251.6 195.1M257.6 205.6L257.8 213.7M256.7 205.9L257.8 213.4M255.4 206.2L256.1 212.0M257.4 199.6L256.9 192.0M256.1 199.9L255.4 192.3M263.8 204.0L263.4 209.3M262.3 204.3L261.5 210.2M261.1 204.6L260.3 211.0M262.9 198.2L260.3 191.1M262.0 198.4L260.6 193.2M270.0 202.2L269.3 208.9M268.7 202.6L268.0 208.7M267.3 202.9L266.1 209.9M269.6 196.3L268.0 190.1M268.8 196.6L268.3 191.4M267.4 197.0L266.4 189.5M276.8 200.4L277.2 207.9M275.4 200.8L275.3 208.4M274.3 201.1L274.7 207.6M277.0 194.4L277.9 186.4M275.6 194.8L275.9 189.5M274.6 195.2L275.5 189.2M283.2 198.3L283.8 206.2M282.0 198.7L282.6 205.0M282.8 192.4L282.4 185.1M281.5 192.8L280.9 185.4M279.9 193.2L278.6 186.6M289.6 196.2L290.2 201.6M288.6 196.5L289.8 201.6M287.5 197.0L289.4 204.2M288.1 190.4L285.9 185.1M286.9 190.8L284.1 183.6M286.0 191.1L284.3 183.6M295.0 194.0L294.2 200.0M293.4 194.3L291.4 202.3M292.4 194.8L291.3 201.5M294.5 188.2L292.8 183.0M293.6 188.5L292.3 181.7M291.9 189.0L289.9 183.5M301.5 191.9L301.0 197.8M300.2 192.3L299.7 200.3M299.1 192.7L299.0 200.8M302.3 186.0L304.1 178.0M301.2 186.4L302.9 179.7M300.0 186.8L302.3 179.2M308.2 189.9L308.5 195.6M306.8 190.3L306.9 196.9M313.8 188.0L312.9 193.9M312.5 188.3L311.3 195.2M314.9 182.1L316.4 175.0M313.5 182.4L314.5 175.5M312.4 182.8L314.2 174.8M320.9 186.1L321.5 191.9M319.7 186.5L320.5 192.3M318.5 186.8L319.6 194.5M321.3 180.2L322.7 173.7M319.8 180.5L321.0 172.9M326.2 184.2L324.3 191.5M324.9 184.6L323.6 189.7M323.9 185.0L322.3 192.7M326.1 178.4L323.9 171.0M324.9 178.8L323.2 173.3M333.0 182.6L332.1 190.5M331.7 182.9L330.7 190.7M333.7 176.6L334.5 171.1M332.3 177.0L332.9 169.0M339.2 181.1L338.2 186.2M337.8 181.3L336.3 187.7M336.5 181.6L335.0 187.2M346.0 180.0L345.3 187.9M344.5 180.2L343.3 186.6M346.2 174.1L346.1 166.0M345.2 174.2L345.8 166.7M343.9 174.4L344.2 168.3M351.4 179.1L348.7 184.0M350.4 179.4L347.9 185.1M349.0 179.5L346.1 185.6M352.8 173.5L352.5 166.3M351.5 173.6L351.4 167.9M349.9 173.8L349.0 166.7M358.5 178.8L356.7 184.1M357.1 178.9L354.4 186.4M359.9 173.0L361.1 166.0M358.4 173.1L359.0 167.0M357.5 173.3L358.7 168.0M365.5 178.4L364.4 184.7M364.2 178.5L363.3 184.5M362.6 178.5L361.2 184.0M366.9 172.6L368.9 166.7M365.8 172.8L368.1 166.8M364.4 172.8L366.7 165.7M372.3 178.3L371.7 185.2M370.9 178.3L369.8 185.1M369.7 178.3L369.2 183.8M373.9 172.6L377.2 165.7M372.2 172.4L374.3 165.8M370.9 172.5L372.9 166.4M378.3 178.2L375.8 185.6M376.6 178.1L374.1 183.6M380.3 172.5L382.4 166.8M378.7 172.4L380.2 166.5M377.5 172.5L379.6 166.0M384.4 178.2L381.1 184.4M383.1 178.1L380.6 182.7M386.6 172.6L388.3 165.8M385.3 172.6L387.2 165.3M384.5 172.7L387.6 165.8M392.8 172.9L393.9 165.1M391.9 172.8L393.8 165.5M390.4 172.7L391.4 167.5M398.6 179.4L397.9 184.6M397.3 179.2L396.5 185.4M396.2 179.1L395.7 186.4M400.8 174.0L405.2 168.1M399.5 173.9L403.3 169.0M406.6 174.8L409.1 168.6M405.3 174.5L407.3 169.6M410.8 182.4L408.5 188.6M409.4 181.9L406.6 189.1M408.3 181.5L406.2 187.8M414.0 177.6L418.4 173.8M412.6 176.9L417.5 171.4M411.4 176.5L415.8 172.0M416.0 184.9L411.7 191.2M414.5 184.0L410.3 188.7M419.3 180.0L422.5 175.2M418.0 179.2L420.7 174.2M420.9 188.5L416.7 192.5M420.1 188.0L416.1 193.0M418.8 187.0L415.1 190.8M425.0 184.2L428.6 180.3M423.5 183.0L426.5 178.0M422.5 182.3L426.0 176.7M424.6 187.4L428.7 193.0M423.7 188.5L427.0 193.5M428.2 182.3L432.5 190.1M427.3 183.5L431.6 193.2M426.9 184.5L431.8 192.3M425.2 177.1L420.0 168.5M424.4 178.2L419.0 169.6M424.1 179.2L419.8 170.5M431.3 175.9L437.0 182.5M430.8 177.0L437.4 184.0M430.2 178.2L437.4 186.4M426.8 171.9L418.5 166.2M426.2 173.2L416.7 167.5M425.8 174.2L418.1 168.7M434.2 170.0L439.8 176.7M433.5 171.2L440.1 179.3M432.9 172.4L438.9 180.2M430.1 165.6L423.4 158.8M429.6 166.7L423.3 159.9M436.9 164.8L441.2 174.1M436.7 165.6L441.5 172.4M435.6 166.9L440.3 176.3M433.9 159.7L428.8 152.8M433.4 160.6L427.8 151.4M432.8 161.6L427.7 152.0M440.3 159.8L442.2 169.7M440.0 160.6L443.1 168.2M438.6 161.7L440.9 172.1M437.9 154.4L433.0 147.6M436.7 155.7L430.5 149.3M436.2 156.4L431.1 149.4M446.7 154.6L452.9 161.1M445.5 155.6L452.4 163.8M444.1 149.4L442.6 139.0M442.9 150.3L440.9 141.8M442.4 151.1L441.7 142.7M451.3 151.4L455.0 159.3M450.4 151.9L454.8 159.2M449.8 145.6L449.4 137.1M448.9 146.3L448.9 136.1M447.8 147.0L447.7 137.6M456.6 149.0L458.5 158.3M455.7 149.3L458.0 157.6M454.0 149.9L455.2 158.9M455.5 143.1L453.6 132.3M454.4 143.5L452.9 134.3M461.7 147.6L459.3 156.6M460.9 147.9L459.7 157.1M462.2 141.8L461.1 131.4M461.4 142.0L461.9 133.1M468.5 147.1L466.7 156.8M466.9 147.1L463.6 157.7M465.9 147.3L463.7 158.1M469.5 141.2L470.8 130.3M468.1 141.3L469.2 130.3M467.2 141.4L469.1 133.2M475.0 146.9L473.0 156.3M473.5 146.9L471.0 155.4M472.3 146.9L469.9 154.9M476.9 141.2L480.2 133.4M475.4 141.2L478.6 132.3M481.0 146.7L477.2 154.9M479.6 146.6L474.5 156.0M478.4 146.7L473.6 156.6M486.9 146.4L480.6 153.3M485.8 146.5L480.3 153.7M490.7 141.8L496.9 133.4M488.8 141.4L492.8 132.5M487.6 141.3L492.0 132.3M493.3 147.0L486.8 153.0M491.9 146.7L484.6 152.9M497.4 142.7L503.7 135.3M496.4 142.8L503.3 136.9M499.6 149.3L493.2 156.3M498.3 148.6L491.0 155.7M503.5 144.7L509.5 137.3M502.5 144.3L509.4 136.7M504.4 152.8L495.9 158.8M503.5 152.0L495.9 157.6M508.8 148.8L514.4 142.1M508.3 148.4L516.2 142.1M508.1 157.0L498.0 159.8M507.4 156.2L496.9 160.0M506.6 155.1L497.8 158.0M513.5 154.6L522.9 148.6M512.7 153.5L520.3 148.0M511.2 161.9L502.2 161.4M510.7 161.0L500.7 161.4M510.1 159.5L501.8 159.2M517.1 161.2L526.8 158.5M516.6 160.4L526.4 158.9M516.0 159.0L525.5 157.0M513.1 167.7L503.8 165.5M512.9 166.1L505.0 163.5M518.8 169.5L527.0 172.7M518.6 167.8L527.1 170.0M518.4 166.5L528.8 169.0M513.9 173.5L505.9 169.0M513.8 172.3L505.6 168.4M514.1 170.5L507.0 165.1M519.5 175.4L529.8 177.0M519.4 174.1L527.9 175.2M513.8 179.4L505.7 171.9M513.7 178.5L505.4 172.4M511.5 186.6L503.9 183.1M511.9 185.4L501.8 181.0M512.3 184.2L502.4 179.7M509.3 191.5L503.0 184.6M510.0 190.4L503.5 182.7M513.6 195.7L519.9 201.2M514.5 194.3L522.7 199.6M505.2 196.8L499.1 190.1M506.0 195.8L500.2 189.4M508.6 201.7L513.5 211.5M509.3 200.7L513.2 209.2M500.7 201.6L493.1 193.6M501.5 200.8L494.1 193.6M502.5 199.9L496.6 194.1M503.7 206.7L506.6 215.6M504.9 205.6L508.5 214.0M505.6 204.8L508.9 213.8M496.2 205.7L490.2 196.8M497.6 204.7L492.9 194.6M498.2 204.0L493.5 196.7M499.5 210.7L504.6 218.7M500.9 209.5L506.9 215.6M492.1 209.1L491.0 198.9M492.9 208.4L490.7 198.1M494.2 207.6L493.0 197.9M493.1 215.0L495.2 224.3M494.2 214.2L496.3 224.1M495.1 213.5L496.8 223.7M485.7 212.5L482.0 202.5M486.9 211.9L483.0 201.5M488.1 211.2L485.6 203.0M487.7 218.2L490.5 226.7M489.0 217.5L492.5 225.8M489.7 217.0L491.9 226.0M480.7 215.3L480.5 205.7M481.8 214.7L481.1 206.3M483.2 214.2L483.3 203.4M480.9 221.3L481.1 230.1M482.1 220.7L482.3 230.4M483.2 220.2L483.3 229.9M474.2 217.7L472.8 208.5M475.5 217.3L474.2 207.6M476.9 216.8L476.3 207.5M475.0 223.7L476.0 232.8M476.3 223.2L477.2 231.6M467.7 219.5L465.8 210.6M469.6 219.1L469.7 209.3M470.8 218.8L470.4 209.1M467.4 225.3L464.3 234.3M468.5 224.9L465.4 232.9M462.1 220.3L463.2 211.3M463.7 220.2L466.0 209.8M464.6 220.0L465.3 211.6M462.3 226.2L463.9 235.7M463.2 226.1L463.7 234.9M456.6 220.6L461.2 212.3M458.3 220.9L465.0 212.0M459.4 220.9L464.1 213.8M453.5 225.8L447.6 234.7M454.7 225.7L448.0 234.3M450.2 220.0L455.2 212.0M451.3 220.0L456.2 210.4M452.5 220.2L456.5 211.7M448.1 225.5L446.4 235.1M449.6 225.7L448.8 234.1M450.5 225.8L448.1 235.1M443.3 218.4L447.3 209.0M444.5 218.6L447.4 210.3M445.6 218.9L448.9 208.5M440.3 223.5L434.5 230.6M441.6 223.8L435.6 231.8M443.1 224.2L437.7 232.4M438.1 217.5L444.7 211.8M439.3 217.8L445.9 212.0M440.2 217.8L447.1 209.2M434.2 222.0L429.4 229.8M435.8 222.5L431.9 230.9M431.3 215.4L436.4 208.8M432.4 215.6L437.8 208.0M433.7 216.0L439.0 208.8M428.2 220.4L424.4 228.4M429.5 220.8L426.1 228.9M424.2 213.0L427.6 204.3M425.7 213.5L430.1 204.2M426.8 213.8L430.9 204.7M421.5 218.3L417.1 225.4M423.0 218.8L417.9 228.3M424.3 219.3L420.1 228.3M419.0 211.4L423.3 206.8M420.1 211.8L424.6 206.9M414.8 215.8L409.7 221.1M415.9 216.1L410.5 221.1M412.7 208.9L417.0 203.9M413.9 209.3L418.8 203.3M415.1 209.9L419.5 204.9M409.0 213.6L404.8 219.6M410.5 214.3L407.0 220.3M406.4 206.2L411.3 199.7M407.3 206.5L410.9 200.0M408.8 207.2L411.7 202.8M403.2 211.3L400.0 216.7M404.4 211.7L401.3 217.0M405.3 212.0L400.6 218.2M399.9 203.6L403.0 197.7M401.3 204.2L404.9 198.6M402.2 204.5L405.1 198.3M396.5 208.5L392.6 212.8M397.9 209.1L394.5 213.7M398.7 209.2L393.6 213.8M394.2 201.5L397.9 196.8M395.3 201.9L399.4 195.9M396.5 202.3L399.8 197.4M390.4 206.2L386.6 210.8M391.9 206.8L388.6 211.6M387.3 198.9L389.5 193.4M388.6 199.4L391.1 193.7M384.0 203.8L378.7 209.1M384.9 203.8L379.5 207.6M381.9 197.5L385.6 193.6M382.9 197.7L388.0 191.3M378.1 202.1L374.3 207.6M379.3 202.5L375.4 207.7M380.7 203.0L377.4 208.0M374.9 195.2L377.3 190.5M376.4 195.6L379.1 191.3M371.4 200.0L366.1 205.7M373.1 200.7L369.6 205.9M368.7 193.9L371.8 189.0M370.3 194.4L375.6 188.2M371.6 194.6L375.9 189.6M365.4 198.9L361.1 205.2M367.1 199.4L364.6 204.8M368.0 199.4L365.0 204.0M362.1 192.7L366.0 186.2M363.7 193.1L367.9 188.1M364.6 193.0L368.0 186.9M360.2 198.2L359.2 205.4M361.5 198.4L360.9 203.6M362.4 198.6L360.7 205.8M354.5 191.6L355.7 185.3M355.7 191.7L356.7 185.2M353.7 197.5L353.1 203.4M354.9 197.6L354.1 203.4M356.0 197.7L354.8 204.0M346.6 197.2L344.9 203.1M347.7 197.2L345.8 202.1M341.9 192.1L344.4 185.4M343.1 191.9L345.2 186.0M344.2 191.7L345.7 186.1M339.7 197.7L336.9 204.7M340.7 197.4L338.2 202.3M334.8 192.9L336.1 186.2M336.1 192.7L337.2 186.0M337.4 192.5L338.6 185.8M334.4 198.8L334.7 206.2M336.2 198.6L337.3 203.7M327.7 193.8L327.5 186.0M328.8 193.6L328.4 188.3M330.0 193.5L329.2 187.4M327.6 199.8L327.4 206.0M328.9 199.6L328.5 206.0M322.1 195.1L323.7 189.8M323.4 194.8L325.4 188.4M320.8 200.9L319.5 208.9M321.9 200.6L320.3 208.2M314.8 196.1L314.9 188.2M316.2 195.9L316.5 188.6M317.4 195.6L317.5 189.3M315.2 202.1L316.1 208.7M316.4 201.9L317.2 209.4M318.1 201.5L319.7 207.1M308.3 197.5L308.3 190.8M309.5 197.2L309.3 191.0M311.1 196.9L311.7 191.0M308.4 203.5L308.6 209.6M309.8 203.2L310.5 211.1M301.9 199.0L301.8 192.8M303.3 198.7L303.7 193.4M304.3 198.4L304.1 190.9M301.9 205.0L301.8 210.6M303.7 204.6L305.2 212.0M296.2 200.9L297.9 193.6M297.5 200.5L298.9 194.3M298.5 200.1L299.5 193.7M295.5 206.8L295.6 212.5M296.3 206.4L295.3 213.2M298.0 206.1L297.9 214.2M288.8 202.7L287.6 194.9M290.6 202.3L291.0 195.3M291.8 201.9L292.0 195.9M289.2 208.7L289.1 214.4M290.6 208.3L290.8 215.4M282.6 204.6L282.0 198.7M284.1 204.2L283.8 196.2M282.2 210.5L281.0 216.2M283.0 210.0L280.7 216.0M284.6 209.8L282.7 217.3M275.7 206.6L273.9 200.8M277.2 206.2L275.8 199.5M278.4 205.9L277.0 199.6M275.7 212.4L273.5 219.5M277.3 212.1L276.5 217.4M270.0 208.3L269.4 200.4M270.7 208.0L268.9 201.4M271.1 214.1L272.7 219.9M272.4 213.8L274.8 221.4M273.5 213.5L275.7 221.1M263.5 210.0L262.6 202.7M264.3 209.7L262.4 202.4M265.8 209.3L264.6 202.0M264.5 215.9L266.0 221.9M265.8 215.5L267.3 221.5M266.8 215.3L267.7 221.3M257.3 211.6L256.9 206.4M258.9 211.3L259.4 204.0M259.5 211.0L258.5 205.4M257.3 217.6L257.0 223.6M258.8 217.3L259.1 223.1M259.9 217.0L259.8 223.6M252.0 213.4L254.1 207.1M253.2 213.0L255.2 206.8M254.3 212.7L256.1 205.5M245.8 215.0L248.7 208.2M246.7 214.6L248.2 208.6M244.6 220.8L244.4 228.6M246.3 220.4L246.9 225.7M247.3 220.2L247.5 225.7M239.0 216.3L241.2 208.4M240.2 216.0L242.0 208.4M237.5 222.1L235.7 229.1M238.8 221.8L237.6 227.2M232.2 217.6L233.4 210.4M234.1 217.5L236.6 211.3M231.2 223.6L229.9 231.6M232.1 223.2L230.1 229.0M233.5 222.9L231.5 230.5M224.8 219.0L223.9 212.5M226.0 218.7L224.8 212.6M227.2 218.5L226.0 212.2M224.4 224.8L222.1 232.2M225.8 224.6L224.2 230.3M226.8 224.2L224.3 231.7M219.0 220.2L219.5 213.4M220.6 220.0L221.8 213.9M221.6 219.7L222.2 214.0M218.7 226.2L218.6 233.2M220.0 225.9L219.7 234.0M221.5 225.7L221.8 231.5M212.6 221.3L213.1 214.8M214.2 221.2L215.6 214.2M215.3 220.9L216.3 213.3M211.6 227.2L210.1 233.7M212.9 227.0L211.6 232.7M214.2 226.8L212.7 232.7M206.0 222.3L206.4 216.0M207.6 222.2L209.2 214.6M209.1 222.0L211.0 214.2M204.6 228.1L202.0 234.7M206.0 228.0L203.5 234.7M198.8 223.2L197.9 216.1M200.5 223.0L200.4 216.5M202.0 222.9L202.3 217.6M199.0 229.2L198.6 235.8M200.0 229.0L199.0 235.0M201.9 228.9L201.9 235.5M192.6 224.0L192.6 218.6M193.7 223.8L193.1 218.1M194.8 223.7L193.7 217.6M191.5 229.7L188.5 236.4M192.7 229.5L190.4 234.4M193.8 229.3L191.0 234.5M186.6 224.7L187.5 218.5M187.6 224.5L187.9 218.3M184.9 230.4L182.8 235.3M186.2 230.3L183.1 237.3M187.7 230.2L185.3 237.1M178.8 231.0L177.6 236.1M180.5 231.0L179.7 238.6M174.3 225.6L177.7 218.9M175.2 225.4L177.5 218.1M176.7 225.5L179.0 220.0M171.5 230.9L167.8 237.3M173.1 231.1L170.4 237.8M174.2 231.0L171.1 237.0M167.2 224.8L168.8 219.0M168.9 225.1L171.4 219.4M169.8 225.2L171.4 219.5M165.5 230.6L163.3 238.4M166.8 230.8L164.8 237.3M168.0 230.9L166.0 237.1M161.4 223.6L165.5 216.5M162.3 223.7L164.7 217.8M163.6 224.0L166.3 217.4M158.1 228.6L154.6 233.4M159.5 229.0L155.4 235.0M160.7 229.2L156.6 235.0" stroke="#1c1cff" stroke-width="1.15" fill="none"/><path d="M160.0 216.3L162.6 230.4M162.6 216.1L160.0 229.6M162.7 216.1L165.0 230.9M165.0 216.0L162.7 230.4M166.3 215.9L169.6 231.6M169.6 215.8L166.3 231.2M169.3 215.8L174.5 231.8M174.5 215.5L169.3 231.6M172.5 215.6L175.3 231.8M175.3 215.5L172.5 231.8M175.7 215.4L179.3 231.6M179.3 215.3L175.7 231.8M179.0 215.3L183.6 231.3M183.6 215.0L179.0 231.6M181.5 215.1L184.5 231.3M184.5 214.9L181.5 231.5M185.0 214.9L188.0 231.0M188.0 214.7L185.0 231.2M187.5 214.7L193.1 230.4M193.1 214.2L187.5 231.0M189.9 214.5L194.9 230.2M194.9 213.9L189.9 230.8M192.8 214.2L198.6 229.8M198.6 213.3L192.8 230.5M195.0 213.9L200.5 229.5M200.5 212.9L195.0 230.2M197.8 213.4L203.2 229.2M203.2 212.5L197.8 229.9M201.3 212.8L206.6 228.7M206.6 211.9L201.3 229.4M204.3 212.3L210.1 228.2M210.1 211.4L204.3 229.0M206.9 211.9L210.4 228.1M210.4 211.3L206.9 228.7M210.2 211.4L212.7 227.8M212.7 211.0L210.2 228.2M213.7 210.8L216.3 227.1M216.3 210.4L213.7 227.6M217.2 210.3L222.3 226.0M222.3 209.5L217.2 227.0M220.4 209.8L223.4 225.8M223.4 209.4L220.4 226.4M222.9 209.4L227.6 224.9M227.6 208.7L222.9 225.9M225.9 209.0L231.1 224.2M231.1 208.1L225.9 225.3M228.8 208.5L231.6 224.1M231.6 208.0L228.8 224.7M231.5 208.1L237.5 222.9M237.5 207.0L231.5 224.1M234.7 207.5L240.1 222.3M240.1 206.5L234.7 223.5M237.6 207.0L241.4 222.0M241.4 206.2L237.6 222.8M240.0 206.5L243.6 221.5M243.6 205.8L240.0 222.3M242.8 205.9L246.0 220.9M246.0 205.3L242.8 221.7M245.9 205.3L250.2 219.9M250.2 204.3L245.9 221.0M249.3 204.5L253.1 219.2M253.1 203.7L249.3 220.2M251.7 204.0L256.5 218.4M256.5 202.9L251.7 219.5M254.5 203.3L259.5 217.6M259.5 202.1L254.5 218.8M257.1 202.7L259.4 217.6M259.4 202.1L257.1 218.2M259.6 202.1L263.8 216.5M263.8 201.0L259.6 217.5M262.2 201.4L266.8 215.7M266.8 200.2L262.2 216.9M264.8 200.8L269.5 214.9M269.5 199.5L264.8 216.2M268.3 199.8L273.7 213.8M273.7 198.3L268.3 215.3M270.5 199.2L272.8 214.0M272.8 198.5L270.5 214.7M273.5 198.3L276.1 213.1M276.1 197.6L273.5 213.9M276.6 197.4L281.2 211.6M281.2 195.9L276.6 213.0M279.0 196.7L282.4 211.3M282.4 195.5L279.0 212.3M281.9 195.7L284.2 210.7M284.2 194.9L281.9 211.4M284.7 194.8L288.7 209.4M288.7 193.4L284.7 210.6M286.9 194.0L289.3 209.2M289.3 193.2L286.9 209.9M289.5 193.1L293.1 208.0M293.1 191.8L289.5 209.1M293.0 191.9L298.1 206.6M298.1 190.1L293.0 208.0M295.4 191.0L297.7 206.7M297.7 190.2L295.4 207.4M297.6 190.2L302.5 205.4M302.5 188.6L297.6 206.7M300.8 189.2L306.2 204.5M306.2 187.4L300.8 205.8M303.2 188.4L306.0 204.5M306.0 187.5L303.2 205.2M306.4 187.4L308.7 203.9M308.7 186.7L306.4 204.4M309.3 186.5L313.9 202.8M313.9 185.1L309.3 203.8M311.7 185.8L314.6 202.7M314.6 184.9L311.7 203.3M314.6 184.9L318.2 202.0M318.2 183.8L314.6 202.7M317.7 184.0L323.2 201.1M323.2 182.4L317.7 202.1M320.2 183.2L323.4 201.1M323.4 182.3L320.2 201.6M323.4 182.3L328.9 200.2M328.9 180.8L323.4 201.1M326.5 181.5L329.1 200.1M329.1 180.7L326.5 200.5M329.5 180.6L333.3 199.5M333.3 179.6L329.5 200.1M332.8 179.8L335.8 199.1M335.8 179.0L332.8 199.5M335.2 179.2L337.9 198.8M337.9 178.5L335.2 199.2M337.6 178.6L343.4 198.1M343.4 177.5L337.6 198.9M340.2 178.0L343.1 198.2M343.1 177.5L340.2 198.5M343.5 177.5L349.2 197.9M349.2 176.8L343.5 198.1M346.1 177.1L349.9 197.9M349.9 176.7L346.1 197.9M349.0 176.8L352.0 197.9M352.0 176.6L349.0 197.8M351.8 176.6L357.2 198.3M357.2 176.2L351.8 197.9M354.8 176.4L359.3 198.6M359.3 176.0L354.8 198.1M357.3 176.2L361.9 199.0M361.9 175.8L357.3 198.4M360.7 175.9L364.8 199.5M364.8 175.6L360.7 198.8M363.0 175.7L366.9 199.9M366.9 175.4L363.0 199.2M366.5 175.5L372.0 201.0M372.0 175.3L366.5 199.8M370.0 175.3L372.1 201.0M372.1 175.3L370.0 200.5M372.8 175.3L378.1 202.6M378.1 175.3L372.8 201.2M375.7 175.3L381.2 203.6M381.2 175.4L375.7 202.0M378.2 175.3L380.5 203.4M380.5 175.4L378.2 202.7M381.0 175.4L386.3 205.3M386.3 175.5L381.0 203.5M383.5 175.4L386.8 205.4M386.8 175.5L383.5 204.3M386.5 175.5L392.2 207.3M392.2 175.8L386.5 205.3M389.2 175.7L394.8 208.3M394.8 176.0L389.2 206.3M392.0 175.8L394.3 208.1M394.3 176.0L392.0 207.3M395.5 176.1L400.7 210.6M400.7 176.7L395.5 208.6M398.2 176.3L402.5 211.3M402.5 177.0L398.2 209.6M400.4 176.6L403.9 211.8M403.9 177.2L400.4 210.5M402.7 177.0L405.4 212.5M405.4 177.6L402.7 211.4M405.0 177.5L410.5 214.6M410.5 179.1L405.0 212.3M408.2 178.3L412.7 215.5M412.7 179.9L408.2 213.6M158.0 220.2 L164.0 220.5 L170.0 220.5 L176.0 220.3 L182.0 220.0 L188.0 219.6 L194.0 218.9 L200.0 218.0 L206.0 217.0 L212.0 216.1 L218.0 215.2 L224.0 214.2 L230.0 213.2 L236.0 212.0 L242.0 210.8 L248.0 209.5 L254.0 208.1 L260.0 206.6 L266.0 205.1 L272.0 203.4 L278.0 201.7 L284.0 199.7 L290.0 197.7 L296.0 195.7 L302.0 193.8 L308.0 192.0 L314.0 190.4 L320.0 188.8 L326.0 187.3 L332.0 185.9 L338.0 184.6 L344.0 183.6 L350.0 183.1 L356.0 182.9 L362.0 182.7 L368.0 182.8 L374.0 183.2 L380.0 183.7 L386.0 184.4 L392.0 185.2 L398.0 186.3 L404.0 187.7 L410.0 189.5 L416.0 192.1M158.0 221.7 L164.0 222.2 L170.0 222.4 L176.0 222.3 L182.0 222.0 L188.0 221.5 L194.0 220.9 L200.0 220.0 L206.0 219.1 L212.0 218.1 L218.0 217.2 L224.0 216.2 L230.0 215.1 L236.0 213.9 L242.0 212.7 L248.0 211.4 L254.0 210.0 L260.0 208.5 L266.0 206.9 L272.0 205.3 L278.0 203.5 L284.0 201.6 L290.0 199.6 L296.0 197.7 L302.0 195.8 L308.0 194.1 L314.0 192.5 L320.0 191.0 L326.0 189.6 L332.0 188.2 L338.0 187.0 L344.0 186.1 L350.0 185.6 L356.0 185.5 L362.0 185.5 L368.0 185.8 L374.0 186.3 L380.0 187.1 L386.0 188.0 L392.0 189.0 L398.0 190.3 L404.0 191.8 L410.0 193.8 L416.0 196.3M158.0 223.3 L164.0 224.1 L170.0 224.5 L176.0 224.4 L182.0 224.1 L188.0 223.6 L194.0 223.0 L200.0 222.1 L206.0 221.2 L212.0 220.3 L218.0 219.3 L224.0 218.3 L230.0 217.2 L236.0 216.0 L242.0 214.8 L248.0 213.4 L254.0 212.0 L260.0 210.5 L266.0 208.9 L272.0 207.3 L278.0 205.6 L284.0 203.7 L290.0 201.7 L296.0 199.8 L302.0 198.0 L308.0 196.3 L314.0 194.8 L320.0 193.4 L326.0 192.1 L332.0 190.8 L338.0 189.7 L344.0 188.8 L350.0 188.4 L356.0 188.4 L362.0 188.5 L368.0 189.0 L374.0 189.7 L380.0 190.7 L386.0 191.8 L392.0 193.1 L398.0 194.6 L404.0 196.3 L410.0 198.4 L416.0 200.9M158.0 225.0 L164.0 226.0 L170.0 226.6 L176.0 226.5 L182.0 226.2 L188.0 225.7 L194.0 225.1 L200.0 224.3 L206.0 223.4 L212.0 222.5 L218.0 221.5 L224.0 220.4 L230.0 219.3 L236.0 218.1 L242.0 216.8 L248.0 215.4 L254.0 214.0 L260.0 212.5 L266.0 210.9 L272.0 209.3 L278.0 207.6 L284.0 205.7 L290.0 203.8 L296.0 201.9 L302.0 200.1 L308.0 198.6 L314.0 197.1 L320.0 195.8 L326.0 194.5 L332.0 193.4 L338.0 192.3 L344.0 191.4 L350.0 191.1 L356.0 191.2 L362.0 191.6 L368.0 192.2 L374.0 193.1 L380.0 194.3 L386.0 195.7 L392.0 197.2 L398.0 198.9 L404.0 200.8 L410.0 203.0 L416.0 205.5M158.0 226.5 L164.0 227.8 L170.0 228.5 L176.0 228.5 L182.0 228.2 L188.0 227.7 L194.0 227.1 L200.0 226.3 L206.0 225.4 L212.0 224.5 L218.0 223.5 L224.0 222.4 L230.0 221.2 L236.0 220.0 L242.0 218.7 L248.0 217.3 L254.0 215.9 L260.0 214.4 L266.0 212.8 L272.0 211.2 L278.0 209.5 L284.0 207.6 L290.0 205.7 L296.0 203.9 L302.0 202.2 L308.0 200.6 L314.0 199.2 L320.0 198.0 L326.0 196.8 L332.0 195.7 L338.0 194.7 L344.0 193.9 L350.0 193.6 L356.0 193.8 L362.0 194.3 L368.0 195.1 L374.0 196.2 L380.0 197.7 L386.0 199.2 L392.0 201.0 L398.0 202.9 L404.0 205.0 L410.0 207.3 L416.0 209.7M158.0 228.0 L164.0 229.5 L170.0 230.4 L176.0 230.5 L182.0 230.1 L188.0 229.6 L194.0 229.0 L200.0 228.3 L206.0 227.5 L212.0 226.5 L218.0 225.5 L224.0 224.4 L230.0 223.2 L236.0 221.9 L242.0 220.6 L248.0 219.2 L254.0 217.7 L260.0 216.2 L266.0 214.6 L272.0 213.0 L278.0 211.3 L284.0 209.5 L290.0 207.7 L296.0 205.9 L302.0 204.2 L308.0 202.7 L314.0 201.4 L320.0 200.2 L326.0 199.1 L332.0 198.1 L338.0 197.2 L344.0 196.4 L350.0 196.2 L356.0 196.5 L362.0 197.1 L368.0 198.1 L374.0 199.4 L380.0 201.0 L386.0 202.8 L392.0 204.7 L398.0 206.9 L404.0 209.1 L410.0 211.5 L416.0 213.9M158.0 229.0 L164.0 230.7 L170.0 231.7 L176.0 231.8 L182.0 231.4 L188.0 231.0 L194.0 230.3 L200.0 229.6 L206.0 228.8 L212.0 227.9 L218.0 226.8 L224.0 225.7 L230.0 224.5 L236.0 223.2 L242.0 221.8 L248.0 220.5 L254.0 219.0 L260.0 217.5 L266.0 215.9 L272.0 214.3 L278.0 212.6 L284.0 210.8 L290.0 209.0 L296.0 207.2 L302.0 205.5 L308.0 204.1 L314.0 202.8 L320.0 201.7 L326.0 200.6 L332.0 199.7 L338.0 198.8 L344.0 198.1 L350.0 197.9 L356.0 198.2 L362.0 199.0 L368.0 200.1 L374.0 201.5 L380.0 203.2 L386.0 205.2 L392.0 207.3 L398.0 209.5 L404.0 211.9 L410.0 214.4 L416.0 216.8" stroke="#f80008" stroke-width="0.85" fill="none" opacity="0.9"/><path d="M165.0 216.0 L166.5 215.9 L168.5 215.8 L170.9 215.7 L173.6 215.6 L176.5 215.4 L179.4 215.2 L182.4 215.1 L185.2 214.9 L187.8 214.7 L190.0 214.5 L191.9 214.3 L193.5 214.1 L194.9 213.9 L196.2 213.7 L197.4 213.5 L198.7 213.3 L200.2 213.0 L201.8 212.7 L203.7 212.4 L206.0 212.0 L208.7 211.6 L211.7 211.1 L214.9 210.6 L218.4 210.1 L221.9 209.6 L225.6 209.0 L229.3 208.4 L233.0 207.8 L236.6 207.2 L240.0 206.5 L243.3 205.8 L246.7 205.1 L250.0 204.4 L253.3 203.6 L256.6 202.8 L259.8 202.0 L263.1 201.2 L266.4 200.3 L269.7 199.4 L273.0 198.5 L276.3 197.5 L279.6 196.5 L282.9 195.4 L286.2 194.2 L289.6 193.1 L292.9 191.9 L296.2 190.7 L299.5 189.6 L302.7 188.5 L306.0 187.5 L309.3 186.5 L312.7 185.5 L316.1 184.4 L319.5 183.4 L322.9 182.5 L326.3 181.5 L329.5 180.6 L332.5 179.8 L335.4 179.1 L338.0 178.5 L340.4 178.0 L342.5 177.6 L344.5 177.3 L346.3 177.1 L347.9 176.9 L349.5 176.8 L351.1 176.7 L352.7 176.6 L354.3 176.4 L356.0 176.3 L357.7 176.1 L359.3 176.0 L360.9 175.8 L362.5 175.7 L364.1 175.6 L365.7 175.5 L367.3 175.4 L369.1 175.4 L371.0 175.3 L373.0 175.3 L375.2 175.3 L377.6 175.3 L380.2 175.4 L382.9 175.4 L385.6 175.5 L388.3 175.6 L391.0 175.7 L393.5 175.9 L395.9 176.1 L398.0 176.3 L399.9 176.6 L401.7 176.8 L403.4 177.1 L405.0 177.5 L406.5 177.8 L407.9 178.2 L409.2 178.6 L410.5 179.1 L411.8 179.5 L413.0 180.0 L414.2 180.5 L415.4 181.1 L416.6 181.8 L417.7 182.5 L418.7 183.2 L419.6 183.9 L420.5 184.6 L421.3 185.1 L422.0 185.6 L422.5 186.0" stroke="#f80008" stroke-width="7" fill="none" stroke-linecap="butt" stroke-linejoin="round"/><path d="M422.0 186.0 L422.3 185.7 L422.6 185.2 L423.0 184.8 L423.5 184.2 L424.0 183.6 L424.5 183.0 L425.0 182.3 L425.5 181.6 L426.0 180.8 L426.5 180.0 L426.9 179.2 L427.3 178.3 L427.7 177.4 L428.1 176.5 L428.5 175.5 L428.9 174.4 L429.3 173.4 L429.8 172.3 L430.4 171.2 L431.0 170.0 L431.7 168.8 L432.4 167.5 L433.2 166.1 L434.0 164.7 L434.8 163.3 L435.8 161.9 L436.7 160.5 L437.7 159.1 L438.8 157.8 L440.0 156.6 L441.2 155.4 L442.5 154.2 L443.8 153.1 L445.2 151.9 L446.6 150.8 L448.2 149.8 L449.7 148.8 L451.4 147.9 L453.2 147.1 L455.0 146.4 L457.0 145.8 L459.0 145.3 L461.2 145.0 L463.5 144.6 L465.9 144.4 L468.3 144.2 L470.7 144.1 L473.0 144.0 L475.4 144.0 L477.7 144.0 L480.0 144.0 L482.4 144.0 L484.8 144.0 L487.2 144.1 L489.6 144.2 L492.0 144.4 L494.3 144.7 L496.4 145.2 L498.4 145.7 L500.3 146.4 L502.0 147.3 L503.6 148.3 L505.1 149.5 L506.5 150.8 L507.8 152.2 L509.1 153.7 L510.2 155.2 L511.2 156.7 L512.1 158.2 L513.0 159.6 L513.8 161.0 L514.4 162.5 L514.9 164.0 L515.4 165.5 L515.7 167.0 L516.0 168.6 L516.2 170.1 L516.4 171.7 L516.5 173.2 L516.5 174.7 L516.5 176.2 L516.4 177.8 L516.3 179.3 L516.0 180.9 L515.8 182.4 L515.4 183.9 L515.0 185.4 L514.6 186.9 L514.1 188.3 L513.5 189.7 L512.9 191.0 L512.2 192.3 L511.4 193.6 L510.5 194.9 L509.6 196.1 L508.7 197.3 L507.7 198.4 L506.7 199.5 L505.8 200.6 L504.8 201.7 L503.8 202.7 L502.9 203.7 L501.9 204.7 L500.9 205.6 L499.9 206.5 L498.8 207.4 L497.7 208.3 L496.6 209.1 L495.5 210.0 L494.3 210.8 L493.1 211.6 L491.8 212.5 L490.4 213.3 L489.1 214.1 L487.7 214.9 L486.3 215.6 L484.9 216.3 L483.5 217.0 L482.1 217.7 L480.7 218.3 L479.4 218.9 L478.0 219.4 L476.7 219.9 L475.4 220.4 L474.0 220.9 L472.7 221.3 L471.4 221.7 L470.0 222.0 L468.6 222.3 L467.2 222.6 L465.8 222.8 L464.3 223.0 L462.9 223.1 L461.4 223.3 L459.9 223.3 L458.4 223.3 L456.8 223.3 L455.2 223.3 L453.6 223.2 L452.0 223.0 L450.3 222.8 L448.5 222.5 L446.7 222.2 L444.9 221.8 L443.1 221.3 L441.2 220.9 L439.3 220.4 L437.5 219.9 L435.7 219.5 L434.0 219.0 L432.3 218.5 L430.7 218.1 L429.0 217.6 L427.4 217.1 L425.8 216.6 L424.2 216.1 L422.7 215.6 L421.1 215.1 L419.6 214.5 L418.0 214.0 L416.5 213.4 L415.0 212.9 L413.5 212.3 L412.0 211.7 L410.5 211.1 L409.0 210.4 L407.5 209.8 L406.0 209.2 L404.5 208.6 L403.0 208.0 L401.4 207.4 L399.9 206.8 L398.3 206.2 L396.7 205.6 L395.1 204.9 L393.5 204.3 L391.9 203.7 L390.3 203.1 L388.6 202.6 L387.0 202.0 L385.3 201.4 L383.7 200.9 L382.0 200.3 L380.3 199.8 L378.6 199.3 L376.8 198.8 L375.1 198.3 L373.4 197.8 L371.7 197.4 L370.0 197.0 L368.3 196.6 L366.6 196.3 L364.8 196.0 L363.1 195.7 L361.4 195.4 L359.7 195.1 L358.0 194.9 L356.3 194.7 L354.6 194.6 L353.0 194.5 L351.5 194.4 L350.1 194.4 L348.9 194.3 L347.7 194.3 L346.4 194.4 L345.1 194.5 L343.7 194.6 L342.1 194.8 L340.2 195.0 L338.0 195.3 L335.5 195.7 L332.7 196.1 L329.7 196.5 L326.5 197.0 L323.1 197.6 L319.7 198.2 L316.2 198.9 L312.7 199.5 L309.3 200.3 L306.0 201.0 L302.7 201.8" stroke="#f80008" stroke-width="8.2" fill="none" stroke-linecap="butt" stroke-linejoin="round"/><path d="M422.0 186.0 L422.3 185.7 L422.6 185.2 L423.0 184.8 L423.5 184.2 L424.0 183.6 L424.5 183.0 L425.0 182.3 L425.5 181.6 L426.0 180.8 L426.5 180.0 L426.9 179.2 L427.3 178.3 L427.7 177.4 L428.1 176.5 L428.5 175.5 L428.9 174.4 L429.3 173.4 L429.8 172.3 L430.4 171.2 L431.0 170.0 L431.7 168.8 L432.4 167.5 L433.2 166.1 L434.0 164.7 L434.8 163.3 L435.8 161.9 L436.7 160.5 L437.7 159.1 L438.8 157.8 L440.0 156.6 L441.2 155.4 L442.5 154.2 L443.8 153.1 L445.2 151.9 L446.6 150.8 L448.2 149.8 L449.7 148.8 L451.4 147.9 L453.2 147.1 L455.0 146.4 L457.0 145.8 L459.0 145.3 L461.2 145.0 L463.5 144.6 L465.9 144.4 L468.3 144.2 L470.7 144.1 L473.0 144.0 L475.4 144.0 L477.7 144.0 L480.0 144.0 L482.4 144.0 L484.8 144.0 L487.2 144.1 L489.6 144.2 L492.0 144.4 L494.3 144.7 L496.4 145.2 L498.4 145.7 L500.3 146.4 L502.0 147.3 L503.6 148.3 L505.1 149.5 L506.5 150.8 L507.8 152.2 L509.1 153.7 L510.2 155.2 L511.2 156.7 L512.1 158.2 L513.0 159.6 L513.8 161.0 L514.4 162.5 L514.9 164.0 L515.4 165.5 L515.7 167.0 L516.0 168.6 L516.2 170.1 L516.4 171.7 L516.5 173.2 L516.5 174.7 L516.5 176.2 L516.4 177.8 L516.3 179.3 L516.0 180.9 L515.8 182.4 L515.4 183.9 L515.0 185.4 L514.6 186.9 L514.1 188.3 L513.5 189.7 L512.9 191.0 L512.2 192.3 L511.4 193.6 L510.5 194.9 L509.6 196.1 L508.7 197.3 L507.7 198.4 L506.7 199.5 L505.8 200.6 L504.8 201.7 L503.8 202.7 L502.9 203.7 L501.9 204.7 L500.9 205.6 L499.9 206.5 L498.8 207.4 L497.7 208.3 L496.6 209.1 L495.5 210.0 L494.3 210.8 L493.1 211.6 L491.8 212.5 L490.4 213.3 L489.1 214.1 L487.7 214.9 L486.3 215.6 L484.9 216.3 L483.5 217.0 L482.1 217.7 L480.7 218.3 L479.4 218.9 L478.0 219.4 L476.7 219.9 L475.4 220.4 L474.0 220.9 L472.7 221.3 L471.4 221.7 L470.0 222.0 L468.6 222.3 L467.2 222.6 L465.8 222.8 L464.3 223.0 L462.9 223.1 L461.4 223.3 L459.9 223.3 L458.4 223.3 L456.8 223.3 L455.2 223.3 L453.6 223.2 L452.0 223.0 L450.3 222.8 L448.5 222.5 L446.7 222.2 L444.9 221.8 L443.1 221.3 L441.2 220.9 L439.3 220.4 L437.5 219.9 L435.7 219.5 L434.0 219.0 L432.3 218.5 L430.7 218.1 L429.0 217.6 L427.4 217.1 L425.8 216.6 L424.2 216.1 L422.7 215.6 L421.1 215.1" stroke="#f80008" stroke-width="11.6" fill="none" stroke-linecap="round" stroke-linejoin="round"/><path d="M506.5 150.8 L507.8 152.2 L509.1 153.7 L510.2 155.2 L511.2 156.7 L512.1 158.2 L513.0 159.6 L513.8 161.0 L514.4 162.5 L514.9 164.0 L515.4 165.5 L515.7 167.0 L516.0 168.6 L516.2 170.1 L516.4 171.7 L516.5 173.2 L516.5 174.7 L516.5 176.2 L516.4 177.8 L516.3 179.3 L516.0 180.9 L515.8 182.4 L515.4 183.9 L515.0 185.4 L514.6 186.9 L514.1 188.3 L513.5 189.7 L512.9 191.0 L512.2 192.3 L511.4 193.6 L510.5 194.9 L509.6 196.1 L508.7 197.3 L507.7 198.4 L506.7 199.5 L505.8 200.6 L504.8 201.7 L503.8 202.7 L502.9 203.7 L501.9 204.7 L500.9 205.6 L499.9 206.5 L498.8 207.4 L497.7 208.3 L496.6 209.1 L495.5 210.0 L494.3 210.8 L493.1 211.6 L491.8 212.5 L490.4 213.3 L489.1 214.1 L487.7 214.9 L486.3 215.6 L484.9 216.3 L483.5 217.0 L482.1 217.7 L480.7 218.3 L479.4 218.9 L478.0 219.4 L476.7 219.9 L475.4 220.4 L474.0 220.9 L472.7 221.3 L471.4 221.7 L470.0 222.0 L468.6 222.3 L467.2 222.6 L465.8 222.8 L464.3 223.0 L462.9 223.1 L461.4 223.3 L459.9 223.3 L458.4 223.3 L456.8 223.3 L455.2 223.3 L453.6 223.2 L452.0 223.0 L450.3 222.8 L448.5 222.5 L446.7 222.2 L444.9 221.8 L443.1 221.3 L441.2 220.9 L439.3 220.4 L437.5 219.9 L435.7 219.5 L434.0 219.0 L432.3 218.5 L430.7 218.1 L429.0 217.6 L427.4 217.1 L425.8 216.6 L424.2 216.1 L422.7 215.6 L421.1 215.1" stroke="#f80008" stroke-width="14.5" fill="none" stroke-linecap="round" stroke-linejoin="round"/><path d="M302.7 201.8 L299.5 202.7 L296.2 203.6 L292.9 204.6 L289.6 205.6 L286.2 206.6 L282.9 207.6 L279.6 208.6 L276.3 209.6 L273.0 210.5 L269.7 211.4 L266.4 212.3 L263.1 213.1 L259.8 214.0 L256.6 214.8 L253.3 215.7 L250.0 216.5 L246.7 217.3 L243.3 218.0 L240.0 218.8 L236.6 219.5 L233.2 220.3 L229.8 221.0 L226.4 221.7 L223.0 222.4 L219.6 223.0 L216.2 223.7 L212.8 224.3 L209.4 224.8 L206.0 225.3 L202.6 225.8 L199.1 226.2 L195.5 226.7 L192.0 227.1 L188.4 227.4 L185.0 227.7 L181.7 228.0 L178.6 228.2 L175.6 228.3 L173.0 228.3 L170.6 228.2 L168.3 228.0 L166.2 227.7 L164.2 227.3 L162.4 226.8 L160.8 226.4 L159.3 225.9 L158.1 225.5 L156.9 225.2 L156.0 225.0" stroke="#f80008" stroke-width="7.5" fill="none" stroke-linecap="round" opacity="0.72"/><path d="M199.1 226.2 L195.5 226.7 L192.0 227.1 L188.4 227.4 L185.0 227.7 L181.7 228.0 L178.6 228.2 L175.6 228.3 L173.0 228.3 L170.6 228.2 L168.3 228.0 L166.2 227.7 L164.2 227.3 L162.4 226.8 L160.8 226.4 L159.3 225.9 L158.1 225.5 L156.9 225.2 L156.0 225.0" stroke="#f80008" stroke-width="7.5" fill="none" stroke-linecap="round" opacity="0.8"/><g fill="#f80008"><rect x="160.6" y="211.6" width="8.8" height="8.8"/><rect x="171.2" y="210.1" width="10.7" height="10.7"/><rect x="183.1" y="209.9" width="9.6" height="9.6"/><rect x="194.1" y="207.9" width="10.6" height="10.6"/><rect x="206.2" y="206.8" width="8.9" height="8.9"/><rect x="217.3" y="204.8" width="9.5" height="9.5"/><rect x="228.2" y="202.5" width="10.5" height="10.5"/><rect x="240.0" y="200.8" width="9.5" height="9.5"/><rect x="250.9" y="197.9" width="10.1" height="10.1"/><rect x="262.6" y="195.7" width="8.9" height="8.9"/><rect x="272.9" y="191.8" width="10.4" height="10.4"/><rect x="284.3" y="188.6" width="9.4" height="9.4"/><rect x="294.7" y="184.3" width="10.3" height="10.3"/><rect x="306.1" y="181.2" width="9.6" height="9.6"/><rect x="317.1" y="178.0" width="9.6" height="9.6"/><rect x="328.5" y="175.2" width="9.0" height="9.0"/><rect x="339.2" y="172.4" width="10.0" height="10.0"/><rect x="350.8" y="171.4" width="9.8" height="9.8"/><rect x="362.2" y="170.5" width="9.8" height="9.8"/><rect x="374.1" y="170.9" width="9.0" height="9.0"/><rect x="385.4" y="171.0" width="9.4" height="9.4"/><rect x="397.1" y="172.3" width="8.9" height="8.9"/><rect x="407.3" y="174.6" width="10.5" height="10.5"/><rect x="417.2" y="180.8" width="10.3" height="10.3"/><rect x="417.1" y="181.1" width="9.9" height="9.9"/><rect x="421.1" y="171.9" width="12.6" height="12.6"/><rect x="425.0" y="163.3" width="12.5" height="12.5"/><rect x="429.9" y="155.2" width="12.4" height="12.4"/><rect x="435.7" y="147.6" width="13.4" height="13.4"/><rect x="443.6" y="142.3" width="12.8" height="12.8"/><rect x="451.9" y="138.4" width="13.9" height="13.9"/><rect x="461.7" y="137.6" width="13.3" height="13.3"/><rect x="471.5" y="137.7" width="12.6" height="12.6"/><rect x="480.6" y="137.4" width="13.4" height="13.4"/><rect x="489.8" y="138.3" width="13.9" height="13.9"/><rect x="498.9" y="143.3" width="12.3" height="12.3"/><rect x="504.5" y="150.0" width="13.4" height="13.4"/><rect x="508.6" y="158.6" width="13.3" height="13.3"/><rect x="509.9" y="168.1" width="13.1" height="13.1"/><rect x="509.1" y="177.8" width="12.5" height="12.5"/><rect x="505.3" y="186.3" width="13.0" height="13.0"/><rect x="499.6" y="193.9" width="12.9" height="12.9"/><rect x="492.6" y="200.3" width="13.5" height="13.5"/><rect x="485.2" y="206.1" width="12.8" height="12.8"/><rect x="476.5" y="210.3" width="13.6" height="13.6"/><rect x="467.8" y="214.0" width="13.5" height="13.5"/><rect x="458.8" y="216.4" width="13.0" height="13.0"/><rect x="449.5" y="217.0" width="12.6" height="12.6"/><rect x="440.0" y="215.7" width="12.8" height="12.8"/><rect x="430.8" y="213.5" width="12.8" height="12.8"/><rect x="421.0" y="210.3" width="13.9" height="13.9"/><rect x="414.5" y="209.9" width="9.0" height="9.0"/><rect x="404.9" y="205.7" width="10.4" height="10.4"/><rect x="396.3" y="202.3" width="10.0" height="10.0"/><rect x="387.7" y="199.2" width="9.4" height="9.4"/><rect x="379.0" y="196.3" width="9.0" height="9.0"/><rect x="369.1" y="192.8" width="10.6" height="10.6"/><rect x="360.3" y="191.2" width="9.6" height="9.6"/><rect x="350.9" y="189.9" width="9.6" height="9.6"/><rect x="341.1" y="189.3" width="10.2" height="10.2"/><rect x="332.1" y="190.8" width="9.4" height="9.4"/><rect x="322.0" y="191.5" width="10.8" height="10.8"/><rect x="313.2" y="193.7" width="9.7" height="9.7"/><rect x="303.7" y="195.4" width="9.9" height="9.9"/></g><rect x="164" y="211.6" width="26" height="8.6" fill="#f80008"/><g fill="#2a0808" opacity="0.9"><rect x="169.7" y="217.3" width="1.4" height="1.4"/><rect x="174.9" y="216.2" width="1.4" height="1.4"/><rect x="180.0" y="214.2" width="1.4" height="1.4"/><rect x="185.3" y="216.5" width="1.4" height="1.4"/><rect x="200.2" y="210.1" width="1.4" height="1.4"/><rect x="216.0" y="209.3" width="1.4" height="1.4"/><rect x="221.5" y="210.8" width="1.4" height="1.4"/><rect x="230.9" y="204.5" width="1.4" height="1.4"/><rect x="242.1" y="207.6" width="1.4" height="1.4"/><rect x="246.4" y="202.9" width="1.4" height="1.4"/><rect x="267.1" y="199.8" width="1.4" height="1.4"/><rect x="290.8" y="188.8" width="1.4" height="1.4"/><rect x="295.7" y="187.2" width="1.4" height="1.4"/><rect x="306.2" y="185.6" width="1.4" height="1.4"/><rect x="311.3" y="184.4" width="1.4" height="1.4"/><rect x="336.2" y="176.6" width="1.4" height="1.4"/><rect x="341.6" y="176.9" width="1.4" height="1.4"/><rect x="346.7" y="175.8" width="1.4" height="1.4"/><rect x="351.7" y="173.1" width="1.4" height="1.4"/><rect x="357.4" y="178.3" width="1.4" height="1.4"/><rect x="362.4" y="176.1" width="1.4" height="1.4"/><rect x="367.5" y="174.4" width="1.4" height="1.4"/><rect x="372.7" y="172.1" width="1.4" height="1.4"/><rect x="383.2" y="172.0" width="1.4" height="1.4"/><rect x="393.4" y="177.1" width="1.4" height="1.4"/><rect x="398.9" y="174.2" width="1.4" height="1.4"/><rect x="404.3" y="174.5" width="1.4" height="1.4"/><rect x="417.1" y="184.4" width="1.4" height="1.4"/><rect x="426.9" y="182.8" width="1.4" height="1.4"/><rect x="427.4" y="176.9" width="1.4" height="1.4"/><rect x="432.0" y="161.6" width="1.4" height="1.4"/><rect x="438.9" y="153.1" width="1.4" height="1.4"/><rect x="448.2" y="147.4" width="1.4" height="1.4"/><rect x="453.0" y="145.0" width="1.4" height="1.4"/><rect x="457.9" y="142.2" width="1.4" height="1.4"/><rect x="463.3" y="141.4" width="1.4" height="1.4"/><rect x="474.0" y="142.3" width="1.4" height="1.4"/><rect x="484.3" y="146.3" width="1.4" height="1.4"/><rect x="499.2" y="146.9" width="1.4" height="1.4"/><rect x="507.2" y="152.8" width="1.4" height="1.4"/><rect x="508.7" y="157.8" width="1.4" height="1.4"/><rect x="512.5" y="161.4" width="1.4" height="1.4"/><rect x="513.7" y="166.2" width="1.4" height="1.4"/><rect x="517.1" y="170.9" width="1.4" height="1.4"/><rect x="516.6" y="176.3" width="1.4" height="1.4"/><rect x="513.7" y="186.3" width="1.4" height="1.4"/><rect x="511.5" y="191.0" width="1.4" height="1.4"/><rect x="507.1" y="194.1" width="1.4" height="1.4"/><rect x="506.4" y="200.1" width="1.4" height="1.4"/><rect x="492.6" y="207.8" width="1.4" height="1.4"/><rect x="489.9" y="213.0" width="1.4" height="1.4"/><rect x="466.0" y="224.4" width="1.4" height="1.4"/><rect x="460.6" y="224.6" width="1.4" height="1.4"/><rect x="449.8" y="224.8" width="1.4" height="1.4"/><rect x="439.5" y="221.7" width="1.4" height="1.4"/><rect x="434.5" y="220.2" width="1.4" height="1.4"/><rect x="416.1" y="209.8" width="1.4" height="1.4"/><rect x="410.3" y="210.5" width="1.4" height="1.4"/><rect x="396.2" y="203.6" width="1.4" height="1.4"/><rect x="386.9" y="198.5" width="1.4" height="1.4"/><rect x="381.2" y="199.3" width="1.4" height="1.4"/><rect x="366.0" y="195.8" width="1.4" height="1.4"/><rect x="360.7" y="195.9" width="1.4" height="1.4"/><rect x="355.6" y="194.8" width="1.4" height="1.4"/><rect x="340.2" y="194.8" width="1.4" height="1.4"/><rect x="319.6" y="197.5" width="1.4" height="1.4"/><rect x="314.7" y="199.5" width="1.4" height="1.4"/><rect x="308.8" y="196.8" width="1.4" height="1.4"/><rect x="305.0" y="203.5" width="1.4" height="1.4"/><rect x="294.6" y="204.6" width="1.4" height="1.4"/><rect x="283.7" y="204.5" width="1.4" height="1.4"/><rect x="278.9" y="206.5" width="1.4" height="1.4"/><rect x="273.9" y="207.7" width="1.4" height="1.4"/><rect x="265.1" y="214.9" width="1.4" height="1.4"/><rect x="259.0" y="212.3" width="1.4" height="1.4"/><rect x="254.3" y="214.8" width="1.4" height="1.4"/><rect x="248.8" y="214.4" width="1.4" height="1.4"/><rect x="239.7" y="221.1" width="1.4" height="1.4"/><rect x="233.9" y="219.0" width="1.4" height="1.4"/><rect x="223.7" y="220.9" width="1.4" height="1.4"/><rect x="198.0" y="224.6" width="1.4" height="1.4"/><rect x="193.1" y="227.2" width="1.4" height="1.4"/><rect x="187.6" y="224.9" width="1.4" height="1.4"/><rect x="182.6" y="227.1" width="1.4" height="1.4"/><rect x="177.4" y="227.0" width="1.4" height="1.4"/><rect x="172.2" y="227.4" width="1.4" height="1.4"/><rect x="167.4" y="224.6" width="1.4" height="1.4"/><rect x="161.9" y="226.6" width="1.4" height="1.4"/><rect x="156.9" y="224.9" width="1.4" height="1.4"/><rect x="419.6" y="183.9" width="1.5" height="1.5"/><rect x="419.4" y="183.7" width="1.5" height="1.5"/><rect x="427.5" y="186.3" width="1.5" height="1.5"/><rect x="426.5" y="185.6" width="1.5" height="1.5"/><rect x="425.5" y="180.9" width="1.5" height="1.5"/><rect x="420.5" y="177.7" width="1.5" height="1.5"/><rect x="427.4" y="178.4" width="1.5" height="1.5"/><rect x="427.3" y="178.4" width="1.5" height="1.5"/><rect x="427.4" y="171.8" width="1.5" height="1.5"/><rect x="433.3" y="171.5" width="1.5" height="1.5"/><rect x="426.2" y="167.7" width="1.5" height="1.5"/><rect x="428.2" y="165.2" width="1.5" height="1.5"/><rect x="427.4" y="164.8" width="1.5" height="1.5"/><rect x="435.5" y="166.0" width="1.5" height="1.5"/><rect x="438.7" y="164.6" width="1.5" height="1.5"/><rect x="432.0" y="156.3" width="1.5" height="1.5"/><rect x="434.6" y="158.3" width="1.5" height="1.5"/><rect x="437.3" y="151.9" width="1.5" height="1.5"/><rect x="437.4" y="152.0" width="1.5" height="1.5"/><rect x="439.8" y="149.9" width="1.5" height="1.5"/><rect x="445.3" y="146.4" width="1.5" height="1.5"/><rect x="446.9" y="148.9" width="1.5" height="1.5"/><rect x="454.1" y="150.5" width="1.5" height="1.5"/><rect x="454.7" y="143.4" width="1.5" height="1.5"/><rect x="458.3" y="145.5" width="1.5" height="1.5"/><rect x="464.0" y="142.3" width="1.5" height="1.5"/><rect x="464.6" y="148.3" width="1.5" height="1.5"/><rect x="470.0" y="141.9" width="1.5" height="1.5"/><rect x="473.0" y="138.7" width="1.5" height="1.5"/><rect x="473.1" y="145.2" width="1.5" height="1.5"/><rect x="476.1" y="147.2" width="1.5" height="1.5"/><rect x="476.1" y="141.7" width="1.5" height="1.5"/><rect x="479.1" y="146.0" width="1.5" height="1.5"/><rect x="482.1" y="147.8" width="1.5" height="1.5"/><rect x="482.1" y="138.3" width="1.5" height="1.5"/><rect x="485.1" y="142.8" width="1.5" height="1.5"/><rect x="485.0" y="147.9" width="1.5" height="1.5"/><rect x="487.9" y="147.2" width="1.5" height="1.5"/><rect x="491.0" y="144.6" width="1.5" height="1.5"/><rect x="493.2" y="148.6" width="1.5" height="1.5"/><rect x="494.6" y="141.2" width="1.5" height="1.5"/><rect x="497.4" y="143.3" width="1.5" height="1.5"/><rect x="501.3" y="148.9" width="1.5" height="1.5"/><rect x="502.7" y="151.5" width="1.5" height="1.5"/><rect x="501.1" y="153.2" width="1.5" height="1.5"/><rect x="505.1" y="152.8" width="1.5" height="1.5"/><rect x="507.4" y="154.6" width="1.5" height="1.5"/><rect x="506.0" y="155.7" width="1.5" height="1.5"/><rect x="511.6" y="155.3" width="1.5" height="1.5"/><rect x="514.6" y="157.1" width="1.5" height="1.5"/><rect x="508.3" y="160.6" width="1.5" height="1.5"/><rect x="516.1" y="160.1" width="1.5" height="1.5"/><rect x="518.3" y="159.2" width="1.5" height="1.5"/><rect x="511.0" y="165.1" width="1.5" height="1.5"/><rect x="519.8" y="169.5" width="1.5" height="1.5"/><rect x="515.9" y="169.9" width="1.5" height="1.5"/><rect x="514.7" y="173.0" width="1.5" height="1.5"/><rect x="514.6" y="175.9" width="1.5" height="1.5"/><rect x="510.8" y="178.3" width="1.5" height="1.5"/><rect x="511.1" y="181.1" width="1.5" height="1.5"/><rect x="512.8" y="187.4" width="1.5" height="1.5"/><rect x="513.0" y="187.5" width="1.5" height="1.5"/><rect x="516.2" y="192.4" width="1.5" height="1.5"/><rect x="512.3" y="194.0" width="1.5" height="1.5"/><rect x="508.0" y="194.8" width="1.5" height="1.5"/><rect x="510.1" y="196.3" width="1.5" height="1.5"/><rect x="508.2" y="202.8" width="1.5" height="1.5"/><rect x="502.4" y="197.7" width="1.5" height="1.5"/><rect x="500.4" y="199.7" width="1.5" height="1.5"/><rect x="502.4" y="201.7" width="1.5" height="1.5"/><rect x="503.1" y="206.7" width="1.5" height="1.5"/><rect x="501.1" y="209.2" width="1.5" height="1.5"/><rect x="492.4" y="207.8" width="1.5" height="1.5"/><rect x="494.5" y="210.9" width="1.5" height="1.5"/><rect x="487.7" y="211.3" width="1.5" height="1.5"/><rect x="488.8" y="213.2" width="1.5" height="1.5"/><rect x="485.6" y="213.6" width="1.5" height="1.5"/><rect x="484.9" y="212.3" width="1.5" height="1.5"/><rect x="482.7" y="221.5" width="1.5" height="1.5"/><rect x="479.3" y="221.5" width="1.5" height="1.5"/><rect x="478.1" y="218.7" width="1.5" height="1.5"/><rect x="475.7" y="220.9" width="1.5" height="1.5"/><rect x="470.5" y="225.5" width="1.5" height="1.5"/><rect x="469.6" y="221.7" width="1.5" height="1.5"/><rect x="466.9" y="223.8" width="1.5" height="1.5"/><rect x="466.7" y="222.7" width="1.5" height="1.5"/><rect x="460.3" y="217.5" width="1.5" height="1.5"/><rect x="457.6" y="225.3" width="1.5" height="1.5"/><rect x="454.7" y="220.4" width="1.5" height="1.5"/><rect x="451.5" y="223.0" width="1.5" height="1.5"/><rect x="451.1" y="226.7" width="1.5" height="1.5"/><rect x="449.2" y="218.2" width="1.5" height="1.5"/><rect x="448.2" y="224.6" width="1.5" height="1.5"/><rect x="446.4" y="218.0" width="1.5" height="1.5"/><rect x="444.8" y="225.7" width="1.5" height="1.5"/><rect x="443.5" y="217.5" width="1.5" height="1.5"/><rect x="443.4" y="218.1" width="1.5" height="1.5"/><rect x="440.1" y="218.8" width="1.5" height="1.5"/><rect x="438.0" y="215.4" width="1.5" height="1.5"/><rect x="435.1" y="214.4" width="1.5" height="1.5"/><rect x="435.3" y="213.8" width="1.5" height="1.5"/><rect x="431.5" y="216.4" width="1.5" height="1.5"/><rect x="431.4" y="216.9" width="1.5" height="1.5"/><rect x="427.6" y="219.1" width="1.5" height="1.5"/><rect x="427.3" y="220.1" width="1.5" height="1.5"/><rect x="423.7" y="221.3" width="1.5" height="1.5"/><rect x="426.4" y="212.7" width="1.5" height="1.5"/><rect x="166.6" y="222.0" width="1.4" height="1.4"/><rect x="166.6" y="225.6" width="1.4" height="1.4"/><rect x="165.1" y="228.9" width="1.4" height="1.4"/><rect x="171.3" y="222.1" width="1.4" height="1.4"/><rect x="172.0" y="226.0" width="1.4" height="1.4"/><rect x="171.4" y="229.4" width="1.4" height="1.4"/><rect x="178.7" y="225.8" width="1.4" height="1.4"/><rect x="177.9" y="229.3" width="1.4" height="1.4"/><rect x="187.2" y="225.3" width="1.4" height="1.4"/><rect x="186.9" y="228.7" width="1.4" height="1.4"/><rect x="193.4" y="220.6" width="1.4" height="1.4"/><rect x="193.7" y="224.5" width="1.4" height="1.4"/><rect x="200.7" y="219.5" width="1.4" height="1.4"/><rect x="200.3" y="223.6" width="1.4" height="1.4"/><rect x="201.7" y="227.1" width="1.4" height="1.4"/><rect x="208.2" y="218.5" width="1.4" height="1.4"/><rect x="208.3" y="222.5" width="1.4" height="1.4"/><rect x="208.6" y="226.1" width="1.4" height="1.4"/><rect x="213.7" y="217.5" width="1.4" height="1.4"/><rect x="214.1" y="221.6" width="1.4" height="1.4"/><rect x="214.1" y="225.1" width="1.4" height="1.4"/><rect x="222.4" y="216.2" width="1.4" height="1.4"/><rect x="221.0" y="220.2" width="1.4" height="1.4"/><rect x="229.7" y="214.8" width="1.4" height="1.4"/><rect x="229.9" y="222.2" width="1.4" height="1.4"/><rect x="234.4" y="213.8" width="1.4" height="1.4"/><rect x="235.3" y="217.6" width="1.4" height="1.4"/><rect x="234.1" y="221.0" width="1.4" height="1.4"/><rect x="240.7" y="216.4" width="1.4" height="1.4"/><rect x="241.5" y="219.8" width="1.4" height="1.4"/><rect x="247.7" y="211.3" width="1.4" height="1.4"/><rect x="246.4" y="215.1" width="1.4" height="1.4"/><rect x="246.8" y="218.4" width="1.4" height="1.4"/><rect x="253.4" y="209.6" width="1.4" height="1.4"/><rect x="253.9" y="213.4" width="1.4" height="1.4"/><rect x="254.7" y="216.7" width="1.4" height="1.4"/><rect x="260.2" y="211.7" width="1.4" height="1.4"/><rect x="260.1" y="215.0" width="1.4" height="1.4"/><rect x="267.4" y="205.9" width="1.4" height="1.4"/><rect x="269.2" y="209.7" width="1.4" height="1.4"/><rect x="269.2" y="213.0" width="1.4" height="1.4"/><rect x="276.7" y="203.7" width="1.4" height="1.4"/><rect x="276.4" y="210.8" width="1.4" height="1.4"/><rect x="282.0" y="205.7" width="1.4" height="1.4"/><rect x="282.6" y="209.0" width="1.4" height="1.4"/><rect x="287.1" y="200.2" width="1.4" height="1.4"/><rect x="286.5" y="204.0" width="1.4" height="1.4"/><rect x="286.6" y="207.4" width="1.4" height="1.4"/><rect x="294.3" y="198.2" width="1.4" height="1.4"/><rect x="292.9" y="202.1" width="1.4" height="1.4"/><rect x="297.8" y="196.5" width="1.4" height="1.4"/><rect x="299.7" y="200.5" width="1.4" height="1.4"/><rect x="299.1" y="204.0" width="1.4" height="1.4"/><rect x="303.7" y="194.7" width="1.4" height="1.4"/><rect x="304.9" y="198.8" width="1.4" height="1.4"/><rect x="304.5" y="202.4" width="1.4" height="1.4"/><rect x="312.6" y="192.8" width="1.4" height="1.4"/><rect x="311.3" y="197.0" width="1.4" height="1.4"/><rect x="311.8" y="200.7" width="1.4" height="1.4"/><rect x="319.1" y="191.0" width="1.4" height="1.4"/><rect x="318.4" y="195.4" width="1.4" height="1.4"/><rect x="318.5" y="199.3" width="1.4" height="1.4"/><rect x="327.1" y="197.9" width="1.4" height="1.4"/><rect x="332.1" y="187.9" width="1.4" height="1.4"/><rect x="331.5" y="192.7" width="1.4" height="1.4"/><rect x="332.9" y="197.0" width="1.4" height="1.4"/><rect x="340.0" y="186.5" width="1.4" height="1.4"/><rect x="340.0" y="195.8" width="1.4" height="1.4"/><rect x="345.8" y="185.7" width="1.4" height="1.4"/><rect x="345.6" y="190.7" width="1.4" height="1.4"/><rect x="345.2" y="195.2" width="1.4" height="1.4"/><rect x="350.5" y="185.4" width="1.4" height="1.4"/><rect x="351.8" y="195.1" width="1.4" height="1.4"/><rect x="356.6" y="190.7" width="1.4" height="1.4"/><rect x="357.0" y="195.4" width="1.4" height="1.4"/><rect x="363.1" y="185.4" width="1.4" height="1.4"/><rect x="362.9" y="191.2" width="1.4" height="1.4"/><rect x="363.3" y="196.3" width="1.4" height="1.4"/><rect x="369.3" y="185.7" width="1.4" height="1.4"/><rect x="368.3" y="191.8" width="1.4" height="1.4"/><rect x="369.5" y="197.2" width="1.4" height="1.4"/><rect x="374.6" y="186.4" width="1.4" height="1.4"/><rect x="374.4" y="192.9" width="1.4" height="1.4"/><rect x="381.6" y="187.3" width="1.4" height="1.4"/><rect x="381.6" y="194.2" width="1.4" height="1.4"/><rect x="381.5" y="200.3" width="1.4" height="1.4"/><rect x="388.2" y="188.3" width="1.4" height="1.4"/><rect x="387.3" y="195.7" width="1.4" height="1.4"/><rect x="395.4" y="189.8" width="1.4" height="1.4"/><rect x="395.9" y="197.7" width="1.4" height="1.4"/><rect x="395.4" y="204.8" width="1.4" height="1.4"/><rect x="402.2" y="199.8" width="1.4" height="1.4"/><rect x="408.1" y="193.2" width="1.4" height="1.4"/><rect x="406.9" y="201.8" width="1.4" height="1.4"/><rect x="407.1" y="209.5" width="1.4" height="1.4"/><rect x="415.4" y="195.8" width="1.4" height="1.4"/><rect x="413.8" y="204.6" width="1.4" height="1.4"/><rect x="415.2" y="212.3" width="1.4" height="1.4"/></g></svg></div>
<div class="tx" style="left:119.00px;top:61.03px;font-size:10px;line-height:13px;letter-spacing:0.000px;color:#000;font-weight:bold;transform:scaleX(0.9512);transform-origin:0 0;">Front</div>
<!-- Top viewport -->
<div class="abs vp" style="left:118px;top:413px;width:521px;height:326px;border-top:1px solid #808080"><div class="ax" style="left:260px;top:0;width:1px;height:326px"></div><div class="ax" style="left:0;top:163px;width:522px;height:1px"></div><div class="cr" style="left:253px;top:163px;width:15px;height:1px"></div><div class="cr" style="left:260px;top:156px;width:1px;height:15px"></div><svg class="abs" style="left:-118px;top:-414px" width="760" height="760" viewBox="0 0 760 760"><path d="M203.0 437.3l0.1 -5.6M203.0 662.7l0.0 4.5M207.9 437.4l0.2 -5.2M207.9 664.6l-0.4 3.2M216.0 437.5l-0.8 -5.8M223.2 437.7l-0.6 -3.0M223.2 666.5l-0.8 3.5M228.5 437.8l-0.1 -4.2M235.0 437.9l-0.0 -4.9M235.0 665.8l-0.4 5.5M249.6 438.1l-0.4 -3.2M255.6 663.7l0.8 5.1M259.6 438.2l0.7 -4.3M265.6 438.2l0.2 -5.2M265.6 662.6l-0.7 3.8M274.4 661.6l-0.5 3.3M278.7 661.1l0.1 4.1M283.7 438.2l-0.7 -4.8M283.7 660.6l-0.1 3.5M294.5 659.5l-0.2 5.1M301.7 438.0l0.9 -3.6M301.7 658.8l0.5 3.8M307.2 437.9l-0.7 -4.6M307.2 658.3l0.2 3.9M313.5 657.7l0.1 5.2M318.4 437.7l0.7 -5.3M318.4 657.8l-0.6 4.8M327.1 437.6l0.8 -5.5M333.2 437.4l-0.8 -5.7M333.2 659.3l0.4 3.6M338.2 437.3l-0.4 -3.5M340.9 437.3l0.1 -5.4M344.2 660.4l-0.9 3.7M348.1 437.1l-0.6 -4.0M348.1 660.4l-0.7 3.9M357.8 436.9l-0.6 -3.1M357.8 660.0l0.7 4.8M363.2 436.8l0.2 -4.4M366.7 659.7l0.1 4.8M371.9 436.6l0.4 -5.2M375.4 436.6l0.7 -5.4M375.4 659.4l0.5 5.2M379.6 436.5l-0.2 -4.6M382.4 436.5l0.9 -5.5M386.0 436.4l0.1 -4.2M388.8 658.9l0.2 4.2M392.0 436.3l-0.0 -4.7M395.3 436.3l-0.4 -4.9M395.3 658.7l-0.6 5.3M399.7 436.3l0.7 -3.9M402.8 436.2l0.6 -5.6M406.5 436.2l-0.3 -3.4M406.5 658.6l0.6 5.1M411.1 658.7l-0.6 4.1M414.4 436.2l-0.2 -4.8M414.4 658.8l-0.3 5.1M419.9 436.2l-0.8 -3.1M422.5 436.2l0.1 -3.9M425.1 436.2l-0.1 -3.1M428.3 436.2l-0.8 -4.8M428.3 659.1l0.2 4.6M436.3 436.3l-0.6 -3.0M436.3 659.2l0.4 3.4M439.6 436.3l0.4 -4.5M444.4 436.4l0.5 -5.5M444.4 659.4l0.8 4.8M447.3 436.4l0.2 -5.5M447.3 659.4l0.1 5.2M452.2 659.2l0.3 3.5M461.5 436.6l0.7 -5.7M465.6 657.6l0.7 5.1M469.1 436.8l-0.1 -4.5M473.1 436.9l0.6 -3.2M476.1 436.9l0.5 -3.4M476.1 656.2l0.0 4.8M481.1 437.0l0.8 -4.4M483.9 437.1l0.0 -3.8M488.3 437.2l0.6 -4.6M488.3 652.5l-0.2 5.1M491.3 434.7l7.0 0.9M491.3 436.3l6.0 -0.6M491.3 436.4l5.8 0.2M491.2 439.0l7.4 0.0M491.2 440.9l6.8 0.1M491.2 441.4l6.4 -0.9M491.1 453.3l5.4 0.9M491.1 455.2l4.9 -0.1M491.1 451.2l5.5 0.6M490.9 476.1l5.7 -0.4M490.9 472.5l6.2 0.9M490.9 472.2l6.7 -1.0M490.6 504.4l4.8 0.4M490.6 505.1l5.2 0.2M490.6 504.0l6.6 -0.8M490.5 544.0l4.9 -0.6M490.5 544.1l5.5 -0.2M490.5 543.5l5.9 -0.7M490.4 579.0l6.2 0.3M490.4 580.6l7.0 0.2M490.4 582.2l4.8 0.5M488.2 611.4l7.2 -0.4M488.2 608.9l7.2 -0.6M488.2 612.3l7.1 -0.7M486.0 629.2l6.5 -0.5M486.0 628.5l6.9 -0.2M486.0 632.0l4.4 -0.2M486.7 646.0l4.1 -0.6M486.7 646.0l7.2 0.9M486.7 643.2l5.8 0.5M487.1 653.4l6.4 -0.6M487.1 651.2l4.4 -0.9M487.1 653.6l5.8 0.1M196 439.5h5M197 663h4M196 660l4 1M491.2 441.7l3.6 -0.6M487.2 656.6l6.0 0.9M491.3 439.7l3.2 0.9M486.7 643.7l5.3 -0.3M491.1 454.2l4.8 -0.1M486.9 648.4l3.0 0.4M490.9 468.9l3.6 -0.1M487.1 653.1l4.2 -0.6M491.2 442.4l4.8 -1.0M487.2 658.4l5.4 0.4M490.9 469.6l5.2 -0.2M486.9 648.4l4.5 1.0M491.0 467.4l3.9 0.8M487.1 653.3l5.3 0.6M491.1 451.8l6.1 0.8M487.0 651.6l5.3 0.5M491.1 451.8l5.5 -0.9M486.5 639.6l4.4 -1.0M491.1 449.9l5.2 0.2M486.3 635.9l5.8 0.3M491.2 449.2l5.3 0.1M486.8 646.1l4.2 1.0M491.0 461.0l5.5 0.5M487.1 661.3l3.1 0.2M491.0 464.8l3.9 -0.2M486.0 629.7l3.6 -0.2M491.3 439.8l3.9 0.8M486.8 646.7l4.5 0.9M491.1 458.2l6.5 0.3M487.2 655.5l3.2 0.2M491.0 465.6l3.2 0.9M486.2 633.4l4.4 -0.7" stroke="#1c1cff" stroke-width="0.95" fill="none"/><path d="M200.0 436.2 L201.2 436.2 L202.4 436.3 L203.6 436.3 L204.8 436.3 L205.9 436.3 L207.1 436.4 L208.3 436.4 L209.5 436.4 L209.5 666.2 L208.3 665.8 L207.1 665.3 L205.9 664.8 L204.8 664.4 L203.6 663.9 L202.4 663.4 L201.2 663.0 L200.0 662.5Z" fill="#f80008" opacity="1.0"/><path d="M209.5 436.4 L212.3 436.5 L215.1 436.5 L217.9 436.6 L220.8 436.6 L223.6 436.7 L226.4 436.7 L229.2 436.8 L232.0 436.8 L232.0 667.0 L229.2 667.1 L226.4 667.3 L223.6 667.4 L220.8 667.6 L217.9 667.8 L215.1 667.9 L212.3 667.3 L209.5 666.2Z" fill="#f80008" opacity="0.42"/><path d="M232.0 436.8 L241.9 437.0 L251.8 437.1 L261.6 437.2 L271.5 437.2 L281.4 437.2 L291.2 437.1 L301.1 437.0 L311.0 436.9 L311.0 658.9 L301.1 659.9 L291.2 660.9 L281.4 661.9 L271.5 663.0 L261.6 664.1 L251.8 665.2 L241.9 666.3 L232.0 667.0Z" fill="#f80008" opacity="0.0"/><path d="M311.0 436.9 L312.2 436.8 L313.5 436.8 L314.8 436.8 L316.0 436.8 L317.2 436.8 L318.5 436.7 L319.8 436.7 L321.0 436.7 L321.0 659.1 L319.8 659.0 L318.5 658.9 L317.2 658.7 L316.0 658.6 L314.8 658.5 L313.5 658.6 L312.2 658.8 L311.0 658.9Z" fill="#f80008" opacity="0.66"/><path d="M321.0 436.7 L332.0 436.5 L343.0 436.2 L354.0 436.0 L365.0 435.8 L376.0 435.6 L387.0 435.4 L398.0 435.3 L409.0 435.2 L409.0 659.7 L398.0 659.6 L387.0 660.0 L376.0 660.4 L365.0 660.8 L354.0 661.2 L343.0 661.3 L332.0 660.2 L321.0 659.1Z" fill="#f80008" opacity="0.14"/><path d="M409.0 435.2 L410.6 435.2 L412.2 435.2 L413.9 435.2 L415.5 435.2 L417.1 435.2 L418.8 435.2 L420.4 435.2 L422.0 435.2 L422.0 659.9 L420.4 659.9 L418.8 659.9 L417.1 659.8 L415.5 659.8 L413.9 659.8 L412.2 659.7 L410.6 659.7 L409.0 659.7Z" fill="#f80008" opacity="1.0"/><path d="M422.0 435.2 L430.8 435.2 L439.5 435.3 L448.2 435.4 L457.0 435.6 L465.8 435.7 L474.5 435.9 L483.2 436.1 L492.0 436.3 L488.1 653.0 L483.2 655.0 L474.5 657.6 L465.8 658.6 L457.0 659.7 L448.2 660.5 L439.5 660.3 L430.8 660.1 L422.0 659.9Z" fill="#f80008" opacity="0.04"/><path d="M210.0 436.4L210.3 666.4M212.0 436.5L213.4 667.2M214.4 436.5L214.5 668.0M217.0 436.6L216.6 667.8M219.2 436.6L219.7 667.7M221.7 436.7L221.1 667.6M224.4 436.7L223.8 667.4M226.4 436.7L225.6 667.3M228.4 436.8L227.4 667.2M231.1 436.8L230.8 667.0M311.7 436.9L311.5 658.8M313.7 436.8L313.9 658.6M315.7 436.8L316.6 658.6M317.9 436.7L319.4 658.8M320.4 436.7L321.1 659.0M321.1 436.7L322.3 659.1M324.4 436.6L324.8 659.4M327.2 436.6L326.5 659.7M330.3 436.5L330.5 660.0M333.4 436.4L333.8 660.3M336.6 436.4L335.7 660.7M339.3 436.3L340.7 660.9M342.7 436.2L343.8 661.3M345.1 436.2L343.8 661.5M347.8 436.1L347.6 661.4M350.9 436.1L349.7 661.3M353.9 436.0L352.6 661.2M356.4 435.9L356.9 661.1M359.4 435.9L359.8 661.0M362.2 435.8L362.2 660.9M364.9 435.8L364.4 660.8M368.1 435.7L369.1 660.7M370.6 435.7L369.4 660.6M373.8 435.6L374.2 660.5M377.1 435.5L376.2 660.3M380.0 435.5L379.2 660.2M383.2 435.5L382.9 660.1M386.4 435.4L387.8 660.0M389.1 435.4L389.3 659.9M392.3 435.3L393.6 659.8M395.2 435.3L394.8 659.7M397.7 435.3L398.8 659.6M400.2 435.3L399.0 659.5M403.2 435.2L403.2 659.6M406.4 435.2L405.8 659.6" stroke="#f80008" stroke-width="1.2" fill="none"/><path d="M232.7 436.9L231.4 666.9M240.3 437.0L241.7 666.5M245.7 437.0L246.9 665.9M251.9 437.1L251.9 665.2M259.5 437.2L258.7 664.3M265.9 437.2L267.2 663.6M272.9 437.2L272.8 662.8M280.4 437.2L281.4 662.0M287.1 437.1L285.9 661.3M293.8 437.1L293.6 660.6M299.4 437.0L298.1 660.1M305.9 436.9L304.8 659.4M422.1 435.2L421.2 659.9M427.8 435.2L426.5 660.1M432.8 435.3L433.5 660.2M438.6 435.3L437.9 660.3M443.3 435.4L442.9 660.4M449.1 435.4L448.7 660.5M453.8 435.5L454.4 660.0M459.3 435.6L460.6 659.4M465.6 435.7L466.8 658.6M470.9 435.8L471.8 658.0M475.9 435.9L475.3 657.2M481.1 436.0L482.4 655.6M487.3 436.2L486.5 653.7" stroke="#f80008" stroke-width="1.9" fill="none"/><path d="M326.0 546.5L326.3 651.0M436.6 546.4L436.8 651.6M446.9 452.8L445.3 546.6M348.8 507.8L347.7 547.1M246.8 454.8L248.7 619.8M399.4 583.6L399.7 614.1M310.5 635.4L309.8 650.4M302.3 442.3L300.7 614.8M395.0 452.6L396.0 506.8M398.8 474.0L397.7 650.9M428.7 636.2L429.8 660.1M333.4 546.8L334.0 636.5M358.9 637.0L359.7 652.3M467.1 583.5L468.6 649.9M439.1 440.7L440.9 651.7M396.6 635.8L397.4 659.6M438.2 584.3L439.8 660.3M295.2 454.3L295.9 651.9M332.1 636.4L331.2 660.2M459.7 614.3L460.6 650.8M310.0 454.0L311.6 546.4M425.6 435.2L425.5 660.0M437.7 546.4L436.5 584.3M324.3 475.1L325.2 635.7M384.9 474.2L383.6 614.6M304.2 454.1L304.7 614.6M474.1 634.2L475.5 657.6M356.6 584.8L357.2 652.4M430.3 440.6L431.8 651.5M334.7 475.1L335.9 546.8M330.9 636.3L332.1 660.1M246.9 476.9L248.4 510.4M464.6 613.9L465.5 635.2M387.8 452.7L386.4 651.3M298.7 636.5L299.2 651.6M487.2 506.0L487.4 645.4M270.7 454.7L269.5 476.4M467.5 453.0L465.8 546.0M301.4 636.2L302.9 651.3M253.3 641.0L251.4 665.0M280.3 476.2L278.6 653.4M444.4 474.4L444.5 507.3M367.1 453.0L366.4 615.1M336.2 636.8L338.2 660.6M403.5 440.6L401.8 614.2M268.1 587.1L269.1 663.3M433.6 440.6L431.6 651.5M328.9 614.7L328.1 636.1M261.1 437.2L262.7 509.9M271.1 586.9L272.9 654.4M426.0 636.2L425.0 651.4M283.4 442.5L282.6 616.4M302.4 614.7L302.9 659.8M346.8 585.1L345.2 615.8M391.8 452.6L390.5 545.9M335.4 615.2L336.2 660.5M257.8 437.2L259.8 476.7M343.5 441.6L345.2 615.8M341.7 637.2L342.3 652.5M429.1 584.1L428.4 660.1M337.9 436.3L338.4 615.3M434.7 474.3L436.7 651.6M368.2 507.3L366.9 615.1M310.8 614.0L311.1 635.3M284.7 548.0L286.0 637.8M389.1 452.7L390.2 614.4M464.1 635.2L463.5 650.3M360.6 453.2L362.6 584.7M364.6 474.6L366.4 636.8M393.2 474.1L391.5 659.7M294.9 585.0L294.2 651.9M470.8 545.8L470.6 634.5M263.9 454.7L265.5 587.5M371.7 636.6L371.9 651.9M299.9 547.1L298.5 660.0M472.0 435.8L472.8 545.8" stroke="#f80008" stroke-width="1.3" fill="none" opacity="0.9"/><path d="M208.0 436.4L220.2 442.2M208.0 441.9L220.2 436.6M214.1 436.5L220.2 442.2M214.1 436.5L208.0 441.9M208.0 441.9L220.2 454.6M208.0 454.3L220.2 442.2M208.0 454.3L220.2 477.0M208.0 476.6L220.2 454.6M214.1 454.6L220.2 477.0M214.1 454.6L208.0 476.6M208.0 476.6L220.2 511.0M208.0 510.3L220.2 477.0M214.1 477.0L220.2 511.0M214.1 477.0L208.0 510.3M208.0 510.3L220.2 551.4M208.0 550.4L220.2 511.0M208.0 550.4L220.2 590.2M208.0 588.9L220.2 551.4M208.0 588.9L220.2 621.4M208.0 619.9L220.2 590.2M214.1 590.5L220.2 621.4M214.1 590.5L208.0 619.9M208.0 619.9L220.2 643.4M208.0 641.6L220.2 621.4M214.1 621.7L220.2 643.4M214.1 621.7L208.0 641.6M208.0 641.6L220.2 658.9M208.0 656.9L220.2 643.4M208.0 656.9L220.2 667.6M208.0 665.6L220.2 658.9M220.2 436.6L232.4 442.4M220.2 442.2L232.4 436.8M220.2 442.2L232.4 454.8M220.2 454.6L232.4 442.4M226.3 442.3L232.4 454.8M226.3 442.3L220.2 454.6M220.2 454.6L232.4 477.0M220.2 477.0L232.4 454.8M220.2 477.0L232.4 510.8M220.2 511.0L232.4 477.0M220.2 511.0L232.4 551.1M220.2 551.4L232.4 510.8M220.2 551.4L232.4 589.7M220.2 590.2L232.4 551.1M220.2 590.2L232.4 620.8M220.2 621.4L232.4 589.7M220.2 621.4L232.4 642.7M220.2 643.4L232.4 620.8M220.2 643.4L232.4 658.2M220.2 658.9L232.4 642.7M226.3 643.1L232.4 658.2M226.3 643.1L220.2 658.9M220.2 658.9L232.4 666.9M220.2 667.6L232.4 658.2M226.3 658.5L232.4 666.9M226.3 658.5L220.2 667.6M232.4 436.8L244.6 442.5M232.4 442.4L244.6 437.0M238.5 436.9L244.6 442.5M238.5 436.9L232.4 442.4M232.4 442.4L244.6 454.8M232.4 454.8L244.6 442.5M232.4 454.8L244.6 476.9M232.4 477.0L244.6 454.8M238.5 454.8L244.6 476.9M238.5 454.8L232.4 477.0M232.4 477.0L244.6 510.5M232.4 510.8L244.6 476.9M238.5 477.0L244.6 510.5M238.5 477.0L232.4 510.8M232.4 510.8L244.6 550.5M232.4 551.1L244.6 510.5M238.5 510.7L244.6 550.5M238.5 510.7L232.4 551.1M232.4 551.1L244.6 589.0M232.4 589.7L244.6 550.5M238.5 550.9L244.6 589.0M238.5 550.9L232.4 589.7M232.4 589.7L244.6 620.0M232.4 620.8L244.6 589.0M238.5 589.5L244.6 620.0M238.5 589.5L232.4 620.8M232.4 620.8L244.6 641.9M232.4 642.7L244.6 620.0M232.4 642.7L244.6 657.2M232.4 658.2L244.6 641.9M238.5 642.4L244.6 657.2M238.5 642.4L232.4 658.2M232.4 658.2L244.6 666.0M232.4 666.9L244.6 657.2M244.6 437.0L256.8 442.6M244.6 442.5L256.8 437.1M244.6 442.5L256.8 454.8M244.6 454.8L256.8 442.6M244.6 454.8L256.8 476.7M244.6 476.9L256.8 454.8M250.7 454.8L256.8 476.7M250.7 454.8L244.6 476.9M244.6 476.9L256.8 510.0M244.6 510.5L256.8 476.7M250.7 476.9L256.8 510.0M250.7 476.9L244.6 510.5M244.6 510.5L256.8 549.8M244.6 550.5L256.8 510.0M250.7 510.3L256.8 549.8M250.7 510.3L244.6 550.5M244.6 550.5L256.8 588.1M244.6 589.0L256.8 549.8M250.7 550.2L256.8 588.1M250.7 550.2L244.6 589.0M244.6 589.0L256.8 618.9M244.6 620.0L256.8 588.1M244.6 620.0L256.8 640.6M244.6 641.9L256.8 618.9M244.6 641.9L256.8 655.9M244.6 657.2L256.8 640.6M244.6 657.2L256.8 664.6M244.6 666.0L256.8 655.9M250.7 656.6L256.8 664.6M250.7 656.6L244.6 666.0M256.8 437.1L269.0 442.6M256.8 442.6L269.0 437.2M262.9 437.2L269.0 442.6M262.9 437.2L256.8 442.6M256.8 442.6L269.0 454.7M256.8 454.8L269.0 442.6M256.8 454.8L269.0 476.5M256.8 476.7L269.0 454.7M262.9 454.8L269.0 476.5M262.9 454.8L256.8 476.7M256.8 476.7L269.0 509.5M256.8 510.0L269.0 476.5M256.8 510.0L269.0 549.0M256.8 549.8L269.0 509.5M256.8 549.8L269.0 587.1M256.8 588.1L269.0 549.0M256.8 588.1L269.0 617.7M256.8 618.9L269.0 587.1M262.9 587.6L269.0 617.7M262.9 587.6L256.8 618.9M256.8 618.9L269.0 639.3M256.8 640.6L269.0 617.7M262.9 618.3L269.0 639.3M262.9 618.3L256.8 640.6M256.8 640.6L269.0 654.6M256.8 655.9L269.0 639.3M256.8 655.9L269.0 663.2M256.8 664.6L269.0 654.6M262.9 655.3L269.0 663.2M262.9 655.3L256.8 664.6M269.0 437.2L281.2 442.5M269.0 442.6L281.2 437.2M269.0 442.6L281.2 454.6M269.0 454.7L281.2 442.5M275.1 442.6L281.2 454.6M275.1 442.6L269.0 454.7M269.0 454.7L281.2 476.2M269.0 476.5L281.2 454.6M275.1 454.6L281.2 476.2M275.1 454.6L269.0 476.5M269.0 476.5L281.2 509.0M269.0 509.5L281.2 476.2M269.0 509.5L281.2 548.2M269.0 549.0L281.2 509.0M275.1 509.3L281.2 548.2M275.1 509.3L269.0 549.0M269.0 549.0L281.2 586.1M269.0 587.1L281.2 548.2M269.0 587.1L281.2 616.6M269.0 617.7L281.2 586.1M275.1 586.6L281.2 616.6M275.1 586.6L269.0 617.7M269.0 617.7L281.2 638.1M269.0 639.3L281.2 616.6M275.1 617.1L281.2 638.1M275.1 617.1L269.0 639.3M269.0 639.3L281.2 653.3M269.0 654.6L281.2 638.1M275.1 638.7L281.2 653.3M275.1 638.7L269.0 654.6M269.0 654.6L281.2 661.9M269.0 663.2L281.2 653.3M281.2 437.2L293.4 442.4M281.2 442.5L293.4 437.1M281.2 442.5L293.4 454.4M281.2 454.6L293.4 442.4M281.2 454.6L293.4 475.8M281.2 476.2L293.4 454.4M287.3 454.5L293.4 475.8M287.3 454.5L281.2 476.2M281.2 476.2L293.4 508.5M281.2 509.0L293.4 475.8M281.2 509.0L293.4 547.5M281.2 548.2L293.4 508.5M287.3 508.7L293.4 547.5M287.3 508.7L281.2 548.2M281.2 548.2L293.4 585.1M281.2 586.1L293.4 547.5M281.2 586.1L293.4 615.5M281.2 616.6L293.4 585.1M281.2 616.6L293.4 637.0M281.2 638.1L293.4 615.5M287.3 616.0L293.4 637.0M287.3 616.0L281.2 638.1M281.2 638.1L293.4 652.1M281.2 653.3L293.4 637.0M287.3 637.5L293.4 652.1M287.3 637.5L281.2 653.3M281.2 653.3L293.4 660.7M281.2 661.9L293.4 652.1M293.4 437.1L305.6 442.2M293.4 442.4L305.6 436.9M293.4 442.4L305.6 454.1M293.4 454.4L305.6 442.2M293.4 454.4L305.6 475.5M293.4 475.8L305.6 454.1M293.4 475.8L305.6 507.9M293.4 508.5L305.6 475.5M293.4 508.5L305.6 546.7M293.4 547.5L305.6 507.9M293.4 547.5L305.6 584.2M293.4 585.1L305.6 546.7M293.4 585.1L305.6 614.5M293.4 615.5L305.6 584.2M293.4 615.5L305.6 635.8M293.4 637.0L305.6 614.5M299.5 615.0L305.6 635.8M299.5 615.0L293.4 637.0M293.4 637.0L305.6 650.9M293.4 652.1L305.6 635.8M293.4 652.1L305.6 659.4M293.4 660.7L305.6 650.9M305.6 436.9L317.8 442.0M305.6 442.2L317.8 436.7M311.7 436.9L317.8 442.0M311.7 436.9L305.6 442.2M305.6 442.2L317.8 453.9M305.6 454.1L317.8 442.0M305.6 454.1L317.8 475.1M305.6 475.5L317.8 453.9M311.7 454.0L317.8 475.1M311.7 454.0L305.6 475.5M305.6 475.5L317.8 507.5M305.6 507.9L317.8 475.1M311.7 475.3L317.8 507.5M311.7 475.3L305.6 507.9M305.6 507.9L317.8 546.2M305.6 546.7L317.8 507.5M311.7 507.6L317.8 546.2M311.7 507.6L305.6 546.7M305.6 546.7L317.8 583.6M305.6 584.2L317.8 546.2M305.6 584.2L317.8 613.9M305.6 614.5L317.8 583.6M311.7 583.7L317.8 613.9M311.7 583.7L305.6 614.5M305.6 614.5L317.8 635.2M305.6 635.8L317.8 613.9M305.6 635.8L317.8 650.2M305.6 650.9L317.8 635.2M305.6 650.9L317.8 658.8M305.6 659.4L317.8 650.2M311.7 650.3L317.8 658.8M311.7 650.3L305.6 659.4M317.8 436.7L330.0 441.8M317.8 442.0L330.0 436.5M323.9 436.6L330.0 441.8M323.9 436.6L317.8 442.0M317.8 442.0L330.0 453.7M317.8 453.9L330.0 441.8M317.8 453.9L330.0 475.1M317.8 475.1L330.0 453.7M323.9 453.8L330.0 475.1M323.9 453.8L317.8 475.1M317.8 475.1L330.0 507.7M317.8 507.5L330.0 475.1M323.9 475.1L330.0 507.7M323.9 475.1L317.8 507.5M317.8 507.5L330.0 546.7M317.8 546.2L330.0 507.7M323.9 507.6L330.0 546.7M323.9 507.6L317.8 546.2M317.8 546.2L330.0 584.3M317.8 583.6L330.0 546.7M323.9 546.4L330.0 584.3M323.9 546.4L317.8 583.6M317.8 583.6L330.0 614.8M317.8 613.9L330.0 584.3M317.8 613.9L330.0 636.2M317.8 635.2L330.0 614.8M323.9 614.3L330.0 636.2M323.9 614.3L317.8 635.2M317.8 635.2L330.0 651.4M317.8 650.2L330.0 636.2M317.8 650.2L330.0 660.0M317.8 658.8L330.0 651.4M323.9 650.8L330.0 660.0M323.9 650.8L317.8 658.8M330.0 436.5L342.2 441.6M330.0 441.8L342.2 436.3M336.1 436.4L342.2 441.6M336.1 436.4L330.0 441.8M330.0 441.8L342.2 453.6M330.0 453.7L342.2 441.6M336.1 441.7L342.2 453.6M336.1 441.7L330.0 453.7M330.0 453.7L342.2 475.1M330.0 475.1L342.2 453.6M336.1 453.6L342.2 475.1M336.1 453.6L330.0 475.1M330.0 475.1L342.2 507.9M330.0 507.7L342.2 475.1M336.1 475.1L342.2 507.9M336.1 475.1L330.0 507.7M330.0 507.7L342.2 547.1M330.0 546.7L342.2 507.9M336.1 507.8L342.2 547.1M336.1 507.8L330.0 546.7M330.0 546.7L342.2 585.0M330.0 584.3L342.2 547.1M330.0 584.3L342.2 615.7M330.0 614.8L342.2 585.0M330.0 614.8L342.2 637.3M330.0 636.2L342.2 615.7M330.0 636.2L342.2 652.6M330.0 651.4L342.2 637.3M336.1 636.8L342.2 652.6M336.1 636.8L330.0 651.4M330.0 651.4L342.2 661.2M330.0 660.0L342.2 652.6M342.2 436.3L354.4 441.3M342.2 441.6L354.4 436.0M342.2 441.6L354.4 453.3M342.2 453.6L354.4 441.3M348.3 441.4L354.4 453.3M348.3 441.4L342.2 453.6M342.2 453.6L354.4 474.9M342.2 475.1L354.4 453.3M348.3 453.4L354.4 474.9M348.3 453.4L342.2 475.1M342.2 475.1L354.4 507.6M342.2 507.9L354.4 474.9M342.2 507.9L354.4 546.9M342.2 547.1L354.4 507.6M342.2 547.1L354.4 584.9M342.2 585.0L354.4 546.9M348.3 547.1L354.4 584.9M348.3 547.1L342.2 585.0M342.2 585.0L354.4 615.5M342.2 615.7L354.4 584.9M342.2 615.7L354.4 637.2M342.2 637.3L354.4 615.5M342.2 637.3L354.4 652.5M342.2 652.6L354.4 637.2M342.2 652.6L354.4 661.2M342.2 661.2L354.4 652.5M354.4 436.0L366.6 441.1M354.4 441.3L366.6 435.7M360.5 435.9L366.6 441.1M360.5 435.9L354.4 441.3M354.4 441.3L366.6 453.0M354.4 453.3L366.6 441.1M354.4 453.3L366.6 474.6M354.4 474.9L366.6 453.0M354.4 474.9L366.6 507.3M354.4 507.6L366.6 474.6M354.4 507.6L366.6 546.6M354.4 546.9L366.6 507.3M360.5 507.5L366.6 546.6M360.5 507.5L354.4 546.9M354.4 546.9L366.6 584.5M354.4 584.9L366.6 546.6M354.4 584.9L366.6 615.1M354.4 615.5L366.6 584.5M354.4 615.5L366.6 636.8M354.4 637.2L366.6 615.1M360.5 615.3L366.6 636.8M360.5 615.3L354.4 637.2M354.4 637.2L366.6 652.0M354.4 652.5L366.6 636.8M360.5 637.0L366.6 652.0M360.5 637.0L354.4 652.5M354.4 652.5L366.6 660.7M354.4 661.2L366.6 652.0M366.6 435.7L378.8 440.8M366.6 441.1L378.8 435.5M372.7 435.6L378.8 440.8M372.7 435.6L366.6 441.1M366.6 441.1L378.8 452.8M366.6 453.0L378.8 440.8M366.6 453.0L378.8 474.3M366.6 474.6L378.8 452.8M366.6 474.6L378.8 507.1M366.6 507.3L378.8 474.3M372.7 474.5L378.8 507.1M372.7 474.5L366.6 507.3M366.6 507.3L378.8 546.2M366.6 546.6L378.8 507.1M372.7 507.2L378.8 546.2M372.7 507.2L366.6 546.6M366.6 546.6L378.8 584.1M366.6 584.5L378.8 546.2M366.6 584.5L378.8 614.7M366.6 615.1L378.8 584.1M372.7 584.3L378.8 614.7M372.7 584.3L366.6 615.1M366.6 615.1L378.8 636.4M366.6 636.8L378.8 614.7M366.6 636.8L378.8 651.6M366.6 652.0L378.8 636.4M372.7 636.6L378.8 651.6M372.7 636.6L366.6 652.0M366.6 652.0L378.8 660.3M366.6 660.7L378.8 651.6M378.8 435.5L391.0 440.7M378.8 440.8L391.0 435.4M378.8 440.8L391.0 452.6M378.8 452.8L391.0 440.7M384.9 440.7L391.0 452.6M384.9 440.7L378.8 452.8M378.8 452.8L391.0 474.1M378.8 474.3L391.0 452.6M384.9 452.7L391.0 474.1M384.9 452.7L378.8 474.3M378.8 474.3L391.0 506.8M378.8 507.1L391.0 474.1M378.8 507.1L391.0 546.0M378.8 546.2L391.0 506.8M378.8 546.2L391.0 583.8M378.8 584.1L391.0 546.0M384.9 546.1L391.0 583.8M384.9 546.1L378.8 584.1M378.8 584.1L391.0 614.4M378.8 614.7L391.0 583.8M378.8 614.7L391.0 635.9M378.8 636.4L391.0 614.4M378.8 636.4L391.0 651.2M378.8 651.6L391.0 635.9M378.8 651.6L391.0 659.8M378.8 660.3L391.0 651.2M384.9 651.4L391.0 659.8M384.9 651.4L378.8 660.3M391.0 435.4L403.2 440.6M391.0 440.7L403.2 435.2M397.1 435.3L403.2 440.6M397.1 435.3L391.0 440.7M391.0 440.7L403.2 452.5M391.0 452.6L403.2 440.6M397.1 440.6L403.2 452.5M397.1 440.6L391.0 452.6M391.0 452.6L403.2 474.0M391.0 474.1L403.2 452.5M391.0 474.1L403.2 506.7M391.0 506.8L403.2 474.0M397.1 474.1L403.2 506.7M397.1 474.1L391.0 506.8M391.0 506.8L403.2 545.8M391.0 546.0L403.2 506.7M397.1 506.7L403.2 545.8M397.1 506.7L391.0 546.0M391.0 546.0L403.2 583.6M391.0 583.8L403.2 545.8M391.0 583.8L403.2 614.2M391.0 614.4L403.2 583.6M397.1 583.6L403.2 614.2M397.1 583.6L391.0 614.4M391.0 614.4L403.2 635.7M391.0 635.9L403.2 614.2M391.0 635.9L403.2 650.9M391.0 651.2L403.2 635.7M397.1 635.7L403.2 650.9M397.1 635.7L391.0 651.2M391.0 651.2L403.2 659.6M391.0 659.8L403.2 650.9M403.2 435.2L415.4 440.5M403.2 440.6L415.4 435.2M403.2 440.6L415.4 452.5M403.2 452.5L415.4 440.5M409.3 440.5L415.4 452.5M409.3 440.5L403.2 452.5M403.2 452.5L415.4 474.1M403.2 474.0L415.4 452.5M403.2 474.0L415.4 506.8M403.2 506.7L415.4 474.1M409.3 474.0L415.4 506.8M409.3 474.0L403.2 506.7M403.2 506.7L415.4 546.0M403.2 545.8L415.4 506.8M403.2 545.8L415.4 583.8M403.2 583.6L415.4 546.0M409.3 545.9L415.4 583.8M409.3 545.9L403.2 583.6M403.2 583.6L415.4 614.4M403.2 614.2L415.4 583.8M409.3 583.7L415.4 614.4M409.3 583.7L403.2 614.2M403.2 614.2L415.4 635.9M403.2 635.7L415.4 614.4M403.2 635.7L415.4 651.2M403.2 650.9L415.4 635.9M409.3 635.8L415.4 651.2M409.3 635.8L403.2 650.9M403.2 650.9L415.4 659.8M403.2 659.6L415.4 651.2M415.4 435.2L427.6 440.6M415.4 440.5L427.6 435.2M421.5 435.2L427.6 440.6M421.5 435.2L415.4 440.5M415.4 440.5L427.6 452.6M415.4 452.5L427.6 440.6M415.4 452.5L427.6 474.2M415.4 474.1L427.6 452.6M415.4 474.1L427.6 507.0M415.4 506.8L427.6 474.2M415.4 506.8L427.6 546.2M415.4 546.0L427.6 507.0M415.4 546.0L427.6 584.1M415.4 583.8L427.6 546.2M421.5 546.1L427.6 584.1M421.5 546.1L415.4 583.8M415.4 583.8L427.6 614.6M415.4 614.4L427.6 584.1M415.4 614.4L427.6 636.2M415.4 635.9L427.6 614.6M421.5 614.5L427.6 636.2M421.5 614.5L415.4 635.9M415.4 635.9L427.6 651.4M415.4 651.2L427.6 636.2M421.5 636.1L427.6 651.4M421.5 636.1L415.4 651.2M415.4 651.2L427.6 660.1M415.4 659.8L427.6 651.4M427.6 435.2L439.8 440.7M427.6 440.6L439.8 435.3M427.6 440.6L439.8 452.7M427.6 452.6L439.8 440.7M433.7 440.6L439.8 452.7M433.7 440.6L427.6 452.6M427.6 452.6L439.8 474.3M427.6 474.2L439.8 452.7M433.7 452.6L439.8 474.3M433.7 452.6L427.6 474.2M427.6 474.2L439.8 507.2M427.6 507.0L439.8 474.3M433.7 474.2L439.8 507.2M433.7 474.2L427.6 507.0M427.6 507.0L439.8 546.5M427.6 546.2L439.8 507.2M433.7 507.1L439.8 546.5M433.7 507.1L427.6 546.2M427.6 546.2L439.8 584.3M427.6 584.1L439.8 546.5M427.6 584.1L439.8 614.9M427.6 614.6L439.8 584.3M427.6 614.6L439.8 636.5M427.6 636.2L439.8 614.9M427.6 636.2L439.8 651.7M427.6 651.4L439.8 636.5M427.6 651.4L439.8 660.3M427.6 660.1L439.8 651.7M439.8 435.3L452.0 440.8M439.8 440.7L452.0 435.5M439.8 440.7L452.0 452.9M439.8 452.7L452.0 440.8M439.8 452.7L452.0 474.5M439.8 474.3L452.0 452.9M445.9 452.8L452.0 474.5M445.9 452.8L439.8 474.3M439.8 474.3L452.0 507.4M439.8 507.2L452.0 474.5M445.9 474.4L452.0 507.4M445.9 474.4L439.8 507.2M439.8 507.2L452.0 546.6M439.8 546.5L452.0 507.4M439.8 546.5L452.0 584.5M439.8 584.3L452.0 546.6M439.8 584.3L452.0 615.0M439.8 614.9L452.0 584.5M445.9 584.5L452.0 615.0M445.9 584.5L439.8 614.9M439.8 614.9L452.0 636.5M439.8 636.5L452.0 615.0M439.8 636.5L452.0 651.6M439.8 651.7L452.0 636.5M439.8 651.7L452.0 660.3M439.8 660.3L452.0 651.6M445.9 651.8L452.0 660.3M445.9 651.8L439.8 660.3M452.0 435.5L464.2 441.0M452.0 440.8L464.2 435.7M452.0 440.8L464.2 453.0M452.0 452.9L464.2 441.0M452.0 452.9L464.2 474.5M452.0 474.5L464.2 453.0M452.0 474.5L464.2 507.1M452.0 507.4L464.2 474.5M458.1 474.5L464.2 507.1M458.1 474.5L452.0 507.4M452.0 507.4L464.2 546.1M452.0 546.6L464.2 507.1M458.1 507.2L464.2 546.1M458.1 507.2L452.0 546.6M452.0 546.6L464.2 583.6M452.0 584.5L464.2 546.1M452.0 584.5L464.2 613.9M452.0 615.0L464.2 583.6M458.1 584.0L464.2 613.9M458.1 584.0L452.0 615.0M452.0 615.0L464.2 635.2M452.0 636.5L464.2 613.9M458.1 614.4L464.2 635.2M458.1 614.4L452.0 636.5M452.0 636.5L464.2 650.3M452.0 651.6L464.2 635.2M452.0 651.6L464.2 658.8M452.0 660.3L464.2 650.3M458.1 651.0L464.2 658.8M458.1 651.0L452.0 660.3M464.2 435.7L476.4 441.2M464.2 441.0L476.4 435.9M464.2 441.0L476.4 453.1M464.2 453.0L476.4 441.2M464.2 453.0L476.4 474.4M464.2 474.5L476.4 453.1M464.2 474.5L476.4 506.8M464.2 507.1L476.4 474.4M464.2 507.1L476.4 545.5M464.2 546.1L476.4 506.8M464.2 546.1L476.4 582.7M464.2 583.6L476.4 545.5M464.2 583.6L476.4 612.6M464.2 613.9L476.4 582.7M470.3 583.2L476.4 612.6M470.3 583.2L464.2 613.9M464.2 613.9L476.4 633.7M464.2 635.2L476.4 612.6M470.3 613.4L476.4 633.7M470.3 613.4L464.2 635.2M464.2 635.2L476.4 648.6M464.2 650.3L476.4 633.7M470.3 634.6L476.4 648.6M470.3 634.6L464.2 650.3M464.2 650.3L476.4 657.1M464.2 658.8L476.4 648.6M476.4 435.9L488.6 441.4M476.4 441.2L488.6 436.2M476.4 441.2L488.6 453.1M476.4 453.1L488.6 441.4M476.4 453.1L488.6 474.1M476.4 474.4L488.6 453.1M476.4 474.4L488.6 506.0M476.4 506.8L488.6 474.1M482.5 474.3L488.6 506.0M482.5 474.3L476.4 506.8M476.4 506.8L488.6 543.9M476.4 545.5L488.6 506.0M482.5 506.4L488.6 543.9M482.5 506.4L476.4 545.5M476.4 545.5L488.6 580.5M476.4 582.7L488.6 543.9M476.4 582.7L488.6 609.8M476.4 612.6L488.6 580.5M476.4 612.6L488.6 630.5M476.4 633.7L488.6 609.8M476.4 633.7L488.6 645.1M476.4 648.6L488.6 630.5M476.4 648.6L488.6 653.4M476.4 657.1L488.6 645.1" stroke="#f80008" stroke-width="1.25" fill="none"/><path d="M200.0 436.2 L206.0 436.3 L212.0 436.5 L218.0 436.6 L224.0 436.7 L230.0 436.8 L236.0 436.9 L242.0 437.0 L248.0 437.1 L254.0 437.1 L260.0 437.2 L266.0 437.2 L272.0 437.2 L278.0 437.2 L284.0 437.2 L290.0 437.1 L296.0 437.1 L302.0 437.0 L308.0 436.9 L314.0 436.8 L320.0 436.7 L326.0 436.6 L332.0 436.5 L338.0 436.3 L344.0 436.2 L350.0 436.1 L356.0 436.0 L362.0 435.8 L368.0 435.7 L374.0 435.6 L380.0 435.5 L386.0 435.4 L392.0 435.3 L398.0 435.3 L404.0 435.2 L410.0 435.2 L416.0 435.2 L422.0 435.2 L428.0 435.2 L434.0 435.3 L440.0 435.3 L446.0 435.4 L452.0 435.5 L458.0 435.6 L464.0 435.7 L470.0 435.8 L476.0 435.9 L482.0 436.0 L488.0 436.2M200.0 441.6 L206.0 441.8 L212.0 442.0 L218.0 442.1 L224.0 442.2 L230.0 442.3 L236.0 442.4 L242.0 442.5 L248.0 442.5 L254.0 442.6 L260.0 442.6 L266.0 442.6 L272.0 442.6 L278.0 442.5 L284.0 442.5 L290.0 442.4 L296.0 442.4 L302.0 442.3 L308.0 442.2 L314.0 442.1 L320.0 442.0 L326.0 441.9 L332.0 441.8 L338.0 441.7 L344.0 441.5 L350.0 441.4 L356.0 441.3 L362.0 441.2 L368.0 441.0 L374.0 440.9 L380.0 440.8 L386.0 440.7 L392.0 440.7 L398.0 440.6 L404.0 440.6 L410.0 440.5 L416.0 440.5 L422.0 440.5 L428.0 440.6 L434.0 440.6 L440.0 440.7 L446.0 440.7 L452.0 440.8 L458.0 440.9 L464.0 441.0 L470.0 441.1 L476.0 441.2 L482.0 441.3 L488.0 441.4M200.0 453.9 L206.0 454.2 L212.0 454.5 L218.0 454.6 L224.0 454.7 L230.0 454.7 L236.0 454.8 L242.0 454.8 L248.0 454.8 L254.0 454.8 L260.0 454.8 L266.0 454.7 L272.0 454.7 L278.0 454.6 L284.0 454.5 L290.0 454.4 L296.0 454.3 L302.0 454.2 L308.0 454.1 L314.0 453.9 L320.0 453.8 L326.0 453.8 L332.0 453.7 L338.0 453.6 L344.0 453.5 L350.0 453.4 L356.0 453.3 L362.0 453.1 L368.0 453.0 L374.0 452.9 L380.0 452.8 L386.0 452.7 L392.0 452.6 L398.0 452.6 L404.0 452.5 L410.0 452.5 L416.0 452.5 L422.0 452.5 L428.0 452.6 L434.0 452.6 L440.0 452.7 L446.0 452.8 L452.0 452.9 L458.0 452.9 L464.0 453.0 L470.0 453.0 L476.0 453.1 L482.0 453.1 L488.0 453.1M200.0 475.9 L206.0 476.4 L212.0 476.9 L218.0 477.0 L224.0 477.0 L230.0 477.0 L236.0 477.0 L242.0 477.0 L248.0 476.9 L254.0 476.8 L260.0 476.7 L266.0 476.6 L272.0 476.4 L278.0 476.3 L284.0 476.1 L290.0 475.9 L296.0 475.8 L302.0 475.6 L308.0 475.4 L314.0 475.2 L320.0 475.1 L326.0 475.1 L332.0 475.1 L338.0 475.1 L344.0 475.1 L350.0 475.0 L356.0 474.8 L362.0 474.7 L368.0 474.6 L374.0 474.4 L380.0 474.3 L386.0 474.2 L392.0 474.1 L398.0 474.0 L404.0 474.0 L410.0 474.0 L416.0 474.1 L422.0 474.1 L428.0 474.2 L434.0 474.2 L440.0 474.3 L446.0 474.4 L452.0 474.5 L458.0 474.5 L464.0 474.5 L470.0 474.5 L476.0 474.5 L482.0 474.3 L488.0 474.1M200.0 509.2 L206.0 510.0 L212.0 510.8 L218.0 511.0 L224.0 510.9 L230.0 510.8 L236.0 510.8 L242.0 510.6 L248.0 510.4 L254.0 510.2 L260.0 509.9 L266.0 509.7 L272.0 509.4 L278.0 509.1 L284.0 508.9 L290.0 508.6 L296.0 508.4 L302.0 508.1 L308.0 507.8 L314.0 507.5 L320.0 507.5 L326.0 507.6 L332.0 507.7 L338.0 507.8 L344.0 507.9 L350.0 507.8 L356.0 507.6 L362.0 507.4 L368.0 507.3 L374.0 507.2 L380.0 507.0 L386.0 506.9 L392.0 506.8 L398.0 506.7 L404.0 506.7 L410.0 506.8 L416.0 506.8 L422.0 506.9 L428.0 507.0 L434.0 507.1 L440.0 507.2 L446.0 507.3 L452.0 507.4 L458.0 507.2 L464.0 507.1 L470.0 507.0 L476.0 506.9 L482.0 506.4 L488.0 506.0M200.0 548.9 L206.0 550.0 L212.0 551.2 L218.0 551.5 L224.0 551.3 L230.0 551.1 L236.0 550.9 L242.0 550.7 L248.0 550.3 L254.0 550.0 L260.0 549.6 L266.0 549.2 L272.0 548.8 L278.0 548.4 L284.0 548.1 L290.0 547.7 L296.0 547.3 L302.0 546.9 L308.0 546.6 L314.0 546.2 L320.0 546.3 L326.0 546.5 L332.0 546.7 L338.0 546.9 L344.0 547.2 L350.0 547.0 L356.0 546.9 L362.0 546.7 L368.0 546.5 L374.0 546.4 L380.0 546.2 L386.0 546.1 L392.0 545.9 L398.0 545.8 L404.0 545.8 L410.0 545.9 L416.0 546.0 L422.0 546.1 L428.0 546.2 L434.0 546.3 L440.0 546.5 L446.0 546.6 L452.0 546.6 L458.0 546.4 L464.0 546.1 L470.0 545.9 L476.0 545.5 L482.0 544.7 L488.0 544.0M200.0 586.9 L206.0 588.4 L212.0 590.0 L218.0 590.3 L224.0 590.1 L230.0 589.8 L236.0 589.6 L242.0 589.2 L248.0 588.8 L254.0 588.3 L260.0 587.8 L266.0 587.3 L272.0 586.8 L278.0 586.3 L284.0 585.9 L290.0 585.4 L296.0 584.9 L302.0 584.5 L308.0 584.0 L314.0 583.6 L320.0 583.8 L326.0 584.1 L332.0 584.4 L338.0 584.8 L344.0 585.1 L350.0 585.0 L356.0 584.8 L362.0 584.6 L368.0 584.4 L374.0 584.3 L380.0 584.1 L386.0 583.9 L392.0 583.8 L398.0 583.6 L404.0 583.6 L410.0 583.7 L416.0 583.8 L422.0 584.0 L428.0 584.1 L434.0 584.2 L440.0 584.3 L446.0 584.5 L452.0 584.5 L458.0 584.1 L464.0 583.7 L470.0 583.3 L476.0 582.8 L482.0 581.6 L488.0 580.5M200.0 617.4 L206.0 619.2 L212.0 621.1 L218.0 621.5 L224.0 621.2 L230.0 621.0 L236.0 620.7 L242.0 620.3 L248.0 619.7 L254.0 619.1 L260.0 618.6 L266.0 618.0 L272.0 617.4 L278.0 616.9 L284.0 616.3 L290.0 615.8 L296.0 615.3 L302.0 614.8 L308.0 614.3 L314.0 613.7 L320.0 614.0 L326.0 614.5 L332.0 614.9 L338.0 615.3 L344.0 615.8 L350.0 615.7 L356.0 615.5 L362.0 615.3 L368.0 615.1 L374.0 614.9 L380.0 614.7 L386.0 614.5 L392.0 614.3 L398.0 614.2 L404.0 614.2 L410.0 614.3 L416.0 614.4 L422.0 614.5 L428.0 614.6 L434.0 614.8 L440.0 614.9 L446.0 615.0 L452.0 615.0 L458.0 614.4 L464.0 613.9 L470.0 613.4 L476.0 612.7 L482.0 611.3 L488.0 609.9M200.0 638.8 L206.0 640.9 L212.0 643.0 L218.0 643.5 L224.0 643.2 L230.0 642.9 L236.0 642.5 L242.0 642.1 L248.0 641.5 L254.0 640.9 L260.0 640.3 L266.0 639.6 L272.0 639.0 L278.0 638.4 L284.0 637.8 L290.0 637.3 L296.0 636.7 L302.0 636.2 L308.0 635.6 L314.0 635.0 L320.0 635.4 L326.0 635.9 L332.0 636.4 L338.0 636.9 L344.0 637.4 L350.0 637.3 L356.0 637.1 L362.0 636.9 L368.0 636.7 L374.0 636.5 L380.0 636.3 L386.0 636.1 L392.0 635.9 L398.0 635.7 L404.0 635.7 L410.0 635.8 L416.0 636.0 L422.0 636.1 L428.0 636.2 L434.0 636.3 L440.0 636.5 L446.0 636.6 L452.0 636.5 L458.0 635.9 L464.0 635.2 L470.0 634.6 L476.0 633.8 L482.0 632.2 L488.0 630.6M200.0 653.9 L206.0 656.2 L212.0 658.5 L218.0 659.0 L224.0 658.6 L230.0 658.3 L236.0 658.0 L242.0 657.5 L248.0 656.9 L254.0 656.2 L260.0 655.6 L266.0 654.9 L272.0 654.3 L278.0 653.6 L284.0 653.0 L290.0 652.4 L296.0 651.8 L302.0 651.2 L308.0 650.7 L314.0 650.1 L320.0 650.4 L326.0 651.0 L332.0 651.6 L338.0 652.2 L344.0 652.7 L350.0 652.6 L356.0 652.4 L362.0 652.2 L368.0 652.0 L374.0 651.8 L380.0 651.6 L386.0 651.4 L392.0 651.1 L398.0 650.9 L404.0 650.9 L410.0 651.1 L416.0 651.2 L422.0 651.3 L428.0 651.4 L434.0 651.5 L440.0 651.7 L446.0 651.8 L452.0 651.6 L458.0 651.0 L464.0 650.3 L470.0 649.6 L476.0 648.7 L482.0 647.0 L488.0 645.2M200.0 662.5 L206.0 664.9 L212.0 667.2 L218.0 667.8 L224.0 667.4 L230.0 667.1 L236.0 666.7 L242.0 666.3 L248.0 665.6 L254.0 664.9 L260.0 664.2 L266.0 663.6 L272.0 662.9 L278.0 662.2 L284.0 661.6 L290.0 661.0 L296.0 660.4 L302.0 659.8 L308.0 659.2 L314.0 658.6 L320.0 659.0 L326.0 659.6 L332.0 660.2 L338.0 660.8 L344.0 661.4 L350.0 661.3 L356.0 661.1 L362.0 660.9 L368.0 660.7 L374.0 660.4 L380.0 660.2 L386.0 660.0 L392.0 659.8 L398.0 659.6 L404.0 659.6 L410.0 659.7 L416.0 659.8 L422.0 659.9 L428.0 660.1 L434.0 660.2 L440.0 660.3 L446.0 660.4 L452.0 660.3 L458.0 659.5 L464.0 658.8 L470.0 658.1 L476.0 657.2 L482.0 655.3 L488.0 653.5" stroke="#f80008" stroke-width="1.3" fill="none"/><path d="M200 435.6L491 435L491 439.6L200 440.2Z" fill="#f80008" opacity="0.92"/><path d="M202.0 659.1 L208.0 661.4 L214.0 663.8 L220.0 663.5 L226.0 663.1 L232.0 662.8 L238.0 662.4 L244.0 661.8 L250.0 661.2 L256.0 660.5 L262.0 659.8 L268.0 659.1 L274.0 658.5 L280.0 657.8 L286.0 657.2 L292.0 656.6 L298.0 656.0 L304.0 655.4 L310.0 654.8 L316.0 654.4 L322.0 655.0 L328.0 655.6 L334.0 656.2 L340.0 656.8 L346.0 657.3 L352.0 657.0 L358.0 656.8 L364.0 656.6 L370.0 656.4 L376.0 656.2 L382.0 656.0 L388.0 655.7 L394.0 655.5 L400.0 655.3 L406.0 655.4 L412.0 655.5 L418.0 655.7 L424.0 655.8 L430.0 655.9 L436.0 656.0 L442.0 656.1 L448.0 656.3 L454.0 655.8 L460.0 655.1 L466.0 654.4 L472.0 653.7 L478.0 652.4 L484.0 650.5 L488.0 654.7 L482.0 656.5 L476.0 658.4 L470.0 659.3 L464.0 660.0 L458.0 660.7 L452.0 661.5 L446.0 661.6 L440.0 661.5 L434.0 661.4 L428.0 661.3 L422.0 661.1 L416.0 661.0 L410.0 660.9 L404.0 660.8 L398.0 660.8 L392.0 661.0 L386.0 661.2 L380.0 661.4 L374.0 661.6 L368.0 661.9 L362.0 662.1 L356.0 662.3 L350.0 662.5 L344.0 662.6 L338.0 662.0 L332.0 661.4 L326.0 660.8 L320.0 660.2 L314.0 659.8 L308.0 660.4 L302.0 661.0 L296.0 661.6 L290.0 662.2 L284.0 662.8 L278.0 663.4 L272.0 664.1 L266.0 664.8 L260.0 665.5 L254.0 666.1 L248.0 666.8 L242.0 667.5 L236.0 667.9 L230.0 668.3 L224.0 668.6 L218.0 669.0 L212.0 668.4 L206.0 666.1Z" fill="#f80008" opacity="0.88"/><rect x="486.4" y="440" width="4.2" height="218" fill="#f80008" opacity="0.75"/><path d="M378.5 436V664" stroke="#7a1010" stroke-width="1" opacity="0.55"/><path d="M200 577.5H490" stroke="#7a1010" stroke-width="1" opacity="0.4"/><path d="M371 577.5h15M378.5 570v15" stroke="#201010" stroke-width="1" opacity="0.8"/><g fill="#240c0c" opacity="0.88"><rect x="201.1" y="435.3" width="1.8" height="1.8"/><rect x="201.1" y="440.8" width="1.8" height="1.8"/><rect x="201.1" y="453.1" width="1.8" height="1.8"/><rect x="201.1" y="475.2" width="1.8" height="1.8"/><rect x="201.1" y="508.6" width="1.8" height="1.8"/><rect x="201.1" y="548.4" width="1.8" height="1.8"/><rect x="201.1" y="586.5" width="1.8" height="1.8"/><rect x="201.1" y="617.1" width="1.8" height="1.8"/><rect x="201.1" y="638.6" width="1.8" height="1.8"/><rect x="201.1" y="653.8" width="1.8" height="1.8"/><rect x="201.1" y="662.4" width="1.8" height="1.8"/><rect x="207.2" y="435.5" width="1.8" height="1.8"/><rect x="207.2" y="441.0" width="1.8" height="1.8"/><rect x="207.2" y="475.7" width="1.8" height="1.8"/><rect x="207.2" y="509.4" width="1.8" height="1.8"/><rect x="207.2" y="549.6" width="1.8" height="1.8"/><rect x="207.2" y="588.1" width="1.8" height="1.8"/><rect x="207.2" y="619.0" width="1.8" height="1.8"/><rect x="207.2" y="640.7" width="1.8" height="1.8"/><rect x="207.2" y="664.8" width="1.8" height="1.8"/><rect x="213.3" y="435.6" width="1.8" height="1.8"/><rect x="213.3" y="441.2" width="1.8" height="1.8"/><rect x="213.3" y="453.7" width="1.8" height="1.8"/><rect x="213.3" y="476.1" width="1.8" height="1.8"/><rect x="213.3" y="510.2" width="1.8" height="1.8"/><rect x="213.3" y="620.8" width="1.8" height="1.8"/><rect x="213.3" y="642.8" width="1.8" height="1.8"/><rect x="213.3" y="667.1" width="1.8" height="1.8"/><rect x="219.4" y="435.7" width="1.8" height="1.8"/><rect x="219.4" y="441.3" width="1.8" height="1.8"/><rect x="219.4" y="476.1" width="1.8" height="1.8"/><rect x="219.4" y="510.1" width="1.8" height="1.8"/><rect x="219.4" y="550.5" width="1.8" height="1.8"/><rect x="219.4" y="589.3" width="1.8" height="1.8"/><rect x="219.4" y="658.0" width="1.8" height="1.8"/><rect x="219.4" y="666.7" width="1.8" height="1.8"/><rect x="225.5" y="435.8" width="1.8" height="1.8"/><rect x="225.5" y="453.8" width="1.8" height="1.8"/><rect x="225.5" y="476.1" width="1.8" height="1.8"/><rect x="225.5" y="620.2" width="1.8" height="1.8"/><rect x="225.5" y="666.4" width="1.8" height="1.8"/><rect x="231.6" y="435.9" width="1.8" height="1.8"/><rect x="231.6" y="441.5" width="1.8" height="1.8"/><rect x="231.6" y="453.9" width="1.8" height="1.8"/><rect x="231.6" y="476.1" width="1.8" height="1.8"/><rect x="231.6" y="509.9" width="1.8" height="1.8"/><rect x="231.6" y="588.8" width="1.8" height="1.8"/><rect x="231.6" y="619.9" width="1.8" height="1.8"/><rect x="231.6" y="641.8" width="1.8" height="1.8"/><rect x="231.6" y="657.3" width="1.8" height="1.8"/><rect x="231.6" y="666.0" width="1.8" height="1.8"/><rect x="237.7" y="436.0" width="1.8" height="1.8"/><rect x="237.7" y="441.5" width="1.8" height="1.8"/><rect x="237.7" y="453.9" width="1.8" height="1.8"/><rect x="237.7" y="476.1" width="1.8" height="1.8"/><rect x="237.7" y="509.8" width="1.8" height="1.8"/><rect x="237.7" y="550.0" width="1.8" height="1.8"/><rect x="237.7" y="588.6" width="1.8" height="1.8"/><rect x="237.7" y="619.6" width="1.8" height="1.8"/><rect x="237.7" y="656.9" width="1.8" height="1.8"/><rect x="237.7" y="665.7" width="1.8" height="1.8"/><rect x="243.8" y="436.1" width="1.8" height="1.8"/><rect x="243.8" y="441.6" width="1.8" height="1.8"/><rect x="243.8" y="453.9" width="1.8" height="1.8"/><rect x="243.8" y="476.0" width="1.8" height="1.8"/><rect x="243.8" y="509.6" width="1.8" height="1.8"/><rect x="243.8" y="549.6" width="1.8" height="1.8"/><rect x="243.8" y="588.1" width="1.8" height="1.8"/><rect x="243.8" y="619.1" width="1.8" height="1.8"/><rect x="243.8" y="640.9" width="1.8" height="1.8"/><rect x="243.8" y="656.3" width="1.8" height="1.8"/><rect x="243.8" y="665.1" width="1.8" height="1.8"/><rect x="249.9" y="441.6" width="1.8" height="1.8"/><rect x="249.9" y="509.4" width="1.8" height="1.8"/><rect x="249.9" y="587.6" width="1.8" height="1.8"/><rect x="249.9" y="618.5" width="1.8" height="1.8"/><rect x="249.9" y="655.7" width="1.8" height="1.8"/><rect x="249.9" y="664.4" width="1.8" height="1.8"/><rect x="256.0" y="436.2" width="1.8" height="1.8"/><rect x="256.0" y="441.7" width="1.8" height="1.8"/><rect x="256.0" y="453.9" width="1.8" height="1.8"/><rect x="256.0" y="475.8" width="1.8" height="1.8"/><rect x="256.0" y="509.1" width="1.8" height="1.8"/><rect x="256.0" y="548.9" width="1.8" height="1.8"/><rect x="256.0" y="587.2" width="1.8" height="1.8"/><rect x="256.0" y="618.0" width="1.8" height="1.8"/><rect x="256.0" y="639.7" width="1.8" height="1.8"/><rect x="256.0" y="655.0" width="1.8" height="1.8"/><rect x="256.0" y="663.7" width="1.8" height="1.8"/><rect x="262.1" y="436.3" width="1.8" height="1.8"/><rect x="262.1" y="441.7" width="1.8" height="1.8"/><rect x="262.1" y="453.9" width="1.8" height="1.8"/><rect x="262.1" y="548.5" width="1.8" height="1.8"/><rect x="262.1" y="586.7" width="1.8" height="1.8"/><rect x="262.1" y="617.4" width="1.8" height="1.8"/><rect x="262.1" y="639.1" width="1.8" height="1.8"/><rect x="262.1" y="654.3" width="1.8" height="1.8"/><rect x="262.1" y="663.0" width="1.8" height="1.8"/><rect x="268.2" y="436.3" width="1.8" height="1.8"/><rect x="268.2" y="441.7" width="1.8" height="1.8"/><rect x="268.2" y="453.8" width="1.8" height="1.8"/><rect x="268.2" y="508.6" width="1.8" height="1.8"/><rect x="268.2" y="548.1" width="1.8" height="1.8"/><rect x="268.2" y="586.2" width="1.8" height="1.8"/><rect x="268.2" y="616.8" width="1.8" height="1.8"/><rect x="268.2" y="638.4" width="1.8" height="1.8"/><rect x="268.2" y="653.7" width="1.8" height="1.8"/><rect x="268.2" y="662.3" width="1.8" height="1.8"/><rect x="274.3" y="441.7" width="1.8" height="1.8"/><rect x="274.3" y="453.7" width="1.8" height="1.8"/><rect x="274.3" y="475.4" width="1.8" height="1.8"/><rect x="274.3" y="508.4" width="1.8" height="1.8"/><rect x="274.3" y="547.7" width="1.8" height="1.8"/><rect x="274.3" y="585.7" width="1.8" height="1.8"/><rect x="274.3" y="616.2" width="1.8" height="1.8"/><rect x="274.3" y="637.8" width="1.8" height="1.8"/><rect x="274.3" y="653.0" width="1.8" height="1.8"/><rect x="274.3" y="661.6" width="1.8" height="1.8"/><rect x="280.4" y="436.3" width="1.8" height="1.8"/><rect x="280.4" y="453.7" width="1.8" height="1.8"/><rect x="280.4" y="475.3" width="1.8" height="1.8"/><rect x="280.4" y="508.1" width="1.8" height="1.8"/><rect x="280.4" y="585.2" width="1.8" height="1.8"/><rect x="280.4" y="615.7" width="1.8" height="1.8"/><rect x="280.4" y="637.2" width="1.8" height="1.8"/><rect x="280.4" y="652.4" width="1.8" height="1.8"/><rect x="280.4" y="661.0" width="1.8" height="1.8"/><rect x="286.5" y="436.2" width="1.8" height="1.8"/><rect x="286.5" y="475.1" width="1.8" height="1.8"/><rect x="286.5" y="507.8" width="1.8" height="1.8"/><rect x="286.5" y="584.7" width="1.8" height="1.8"/><rect x="286.5" y="651.8" width="1.8" height="1.8"/><rect x="292.6" y="441.5" width="1.8" height="1.8"/><rect x="292.6" y="453.5" width="1.8" height="1.8"/><rect x="292.6" y="507.6" width="1.8" height="1.8"/><rect x="292.6" y="546.6" width="1.8" height="1.8"/><rect x="292.6" y="614.6" width="1.8" height="1.8"/><rect x="292.6" y="636.0" width="1.8" height="1.8"/><rect x="292.6" y="651.2" width="1.8" height="1.8"/><rect x="292.6" y="659.8" width="1.8" height="1.8"/><rect x="298.7" y="436.1" width="1.8" height="1.8"/><rect x="298.7" y="474.8" width="1.8" height="1.8"/><rect x="298.7" y="507.3" width="1.8" height="1.8"/><rect x="298.7" y="546.2" width="1.8" height="1.8"/><rect x="298.7" y="614.1" width="1.8" height="1.8"/><rect x="298.7" y="635.5" width="1.8" height="1.8"/><rect x="298.7" y="650.6" width="1.8" height="1.8"/><rect x="298.7" y="659.1" width="1.8" height="1.8"/><rect x="304.8" y="436.0" width="1.8" height="1.8"/><rect x="304.8" y="441.3" width="1.8" height="1.8"/><rect x="304.8" y="453.2" width="1.8" height="1.8"/><rect x="304.8" y="474.6" width="1.8" height="1.8"/><rect x="304.8" y="507.0" width="1.8" height="1.8"/><rect x="304.8" y="545.8" width="1.8" height="1.8"/><rect x="304.8" y="583.3" width="1.8" height="1.8"/><rect x="304.8" y="634.9" width="1.8" height="1.8"/><rect x="304.8" y="658.5" width="1.8" height="1.8"/><rect x="310.9" y="436.0" width="1.8" height="1.8"/><rect x="310.9" y="441.2" width="1.8" height="1.8"/><rect x="310.9" y="453.1" width="1.8" height="1.8"/><rect x="310.9" y="474.4" width="1.8" height="1.8"/><rect x="310.9" y="506.7" width="1.8" height="1.8"/><rect x="310.9" y="545.4" width="1.8" height="1.8"/><rect x="310.9" y="582.8" width="1.8" height="1.8"/><rect x="310.9" y="613.0" width="1.8" height="1.8"/><rect x="310.9" y="634.3" width="1.8" height="1.8"/><rect x="317.0" y="435.8" width="1.8" height="1.8"/><rect x="317.0" y="441.1" width="1.8" height="1.8"/><rect x="317.0" y="474.2" width="1.8" height="1.8"/><rect x="317.0" y="506.6" width="1.8" height="1.8"/><rect x="317.0" y="613.0" width="1.8" height="1.8"/><rect x="317.0" y="634.3" width="1.8" height="1.8"/><rect x="317.0" y="649.3" width="1.8" height="1.8"/><rect x="317.0" y="657.9" width="1.8" height="1.8"/><rect x="323.1" y="435.7" width="1.8" height="1.8"/><rect x="323.1" y="452.9" width="1.8" height="1.8"/><rect x="323.1" y="474.2" width="1.8" height="1.8"/><rect x="323.1" y="506.7" width="1.8" height="1.8"/><rect x="323.1" y="545.5" width="1.8" height="1.8"/><rect x="323.1" y="583.1" width="1.8" height="1.8"/><rect x="323.1" y="613.4" width="1.8" height="1.8"/><rect x="323.1" y="634.8" width="1.8" height="1.8"/><rect x="323.1" y="658.5" width="1.8" height="1.8"/><rect x="329.2" y="435.6" width="1.8" height="1.8"/><rect x="329.2" y="440.9" width="1.8" height="1.8"/><rect x="329.2" y="452.8" width="1.8" height="1.8"/><rect x="329.2" y="474.2" width="1.8" height="1.8"/><rect x="329.2" y="506.8" width="1.8" height="1.8"/><rect x="329.2" y="545.8" width="1.8" height="1.8"/><rect x="329.2" y="583.4" width="1.8" height="1.8"/><rect x="329.2" y="635.3" width="1.8" height="1.8"/><rect x="335.3" y="452.7" width="1.8" height="1.8"/><rect x="335.3" y="506.9" width="1.8" height="1.8"/><rect x="335.3" y="546.0" width="1.8" height="1.8"/><rect x="335.3" y="583.8" width="1.8" height="1.8"/><rect x="335.3" y="614.3" width="1.8" height="1.8"/><rect x="335.3" y="635.9" width="1.8" height="1.8"/><rect x="335.3" y="651.1" width="1.8" height="1.8"/><rect x="335.3" y="659.7" width="1.8" height="1.8"/><rect x="341.4" y="435.3" width="1.8" height="1.8"/><rect x="341.4" y="440.7" width="1.8" height="1.8"/><rect x="341.4" y="452.7" width="1.8" height="1.8"/><rect x="341.4" y="474.2" width="1.8" height="1.8"/><rect x="341.4" y="507.0" width="1.8" height="1.8"/><rect x="341.4" y="546.2" width="1.8" height="1.8"/><rect x="341.4" y="584.1" width="1.8" height="1.8"/><rect x="341.4" y="614.8" width="1.8" height="1.8"/><rect x="341.4" y="651.7" width="1.8" height="1.8"/><rect x="341.4" y="660.3" width="1.8" height="1.8"/><rect x="347.5" y="435.2" width="1.8" height="1.8"/><rect x="347.5" y="452.5" width="1.8" height="1.8"/><rect x="347.5" y="474.1" width="1.8" height="1.8"/><rect x="347.5" y="506.9" width="1.8" height="1.8"/><rect x="347.5" y="546.2" width="1.8" height="1.8"/><rect x="347.5" y="584.2" width="1.8" height="1.8"/><rect x="347.5" y="614.8" width="1.8" height="1.8"/><rect x="347.5" y="636.5" width="1.8" height="1.8"/><rect x="347.5" y="651.8" width="1.8" height="1.8"/><rect x="347.5" y="660.5" width="1.8" height="1.8"/><rect x="353.6" y="440.4" width="1.8" height="1.8"/><rect x="353.6" y="452.4" width="1.8" height="1.8"/><rect x="353.6" y="474.0" width="1.8" height="1.8"/><rect x="353.6" y="546.0" width="1.8" height="1.8"/><rect x="353.6" y="584.0" width="1.8" height="1.8"/><rect x="353.6" y="614.6" width="1.8" height="1.8"/><rect x="353.6" y="636.3" width="1.8" height="1.8"/><rect x="353.6" y="651.6" width="1.8" height="1.8"/><rect x="353.6" y="660.3" width="1.8" height="1.8"/><rect x="359.7" y="435.0" width="1.8" height="1.8"/><rect x="359.7" y="440.3" width="1.8" height="1.8"/><rect x="359.7" y="506.6" width="1.8" height="1.8"/><rect x="359.7" y="545.8" width="1.8" height="1.8"/><rect x="359.7" y="583.8" width="1.8" height="1.8"/><rect x="359.7" y="636.1" width="1.8" height="1.8"/><rect x="365.8" y="440.2" width="1.8" height="1.8"/><rect x="365.8" y="452.1" width="1.8" height="1.8"/><rect x="365.8" y="473.7" width="1.8" height="1.8"/><rect x="365.8" y="545.6" width="1.8" height="1.8"/><rect x="365.8" y="583.6" width="1.8" height="1.8"/><rect x="365.8" y="614.2" width="1.8" height="1.8"/><rect x="365.8" y="635.9" width="1.8" height="1.8"/><rect x="365.8" y="651.1" width="1.8" height="1.8"/><rect x="365.8" y="659.8" width="1.8" height="1.8"/><rect x="371.9" y="434.7" width="1.8" height="1.8"/><rect x="371.9" y="440.0" width="1.8" height="1.8"/><rect x="371.9" y="452.0" width="1.8" height="1.8"/><rect x="371.9" y="506.3" width="1.8" height="1.8"/><rect x="371.9" y="583.4" width="1.8" height="1.8"/><rect x="371.9" y="650.9" width="1.8" height="1.8"/><rect x="371.9" y="659.6" width="1.8" height="1.8"/><rect x="378.0" y="439.9" width="1.8" height="1.8"/><rect x="378.0" y="451.9" width="1.8" height="1.8"/><rect x="378.0" y="473.4" width="1.8" height="1.8"/><rect x="378.0" y="506.2" width="1.8" height="1.8"/><rect x="378.0" y="545.3" width="1.8" height="1.8"/><rect x="378.0" y="583.2" width="1.8" height="1.8"/><rect x="378.0" y="613.8" width="1.8" height="1.8"/><rect x="378.0" y="635.4" width="1.8" height="1.8"/><rect x="378.0" y="650.7" width="1.8" height="1.8"/><rect x="378.0" y="659.4" width="1.8" height="1.8"/><rect x="384.1" y="434.5" width="1.8" height="1.8"/><rect x="384.1" y="439.8" width="1.8" height="1.8"/><rect x="384.1" y="451.8" width="1.8" height="1.8"/><rect x="384.1" y="473.3" width="1.8" height="1.8"/><rect x="384.1" y="506.0" width="1.8" height="1.8"/><rect x="384.1" y="545.2" width="1.8" height="1.8"/><rect x="384.1" y="583.1" width="1.8" height="1.8"/><rect x="384.1" y="635.2" width="1.8" height="1.8"/><rect x="384.1" y="650.5" width="1.8" height="1.8"/><rect x="384.1" y="659.1" width="1.8" height="1.8"/><rect x="390.2" y="434.5" width="1.8" height="1.8"/><rect x="390.2" y="439.8" width="1.8" height="1.8"/><rect x="390.2" y="451.7" width="1.8" height="1.8"/><rect x="390.2" y="473.2" width="1.8" height="1.8"/><rect x="390.2" y="545.1" width="1.8" height="1.8"/><rect x="390.2" y="582.9" width="1.8" height="1.8"/><rect x="390.2" y="613.5" width="1.8" height="1.8"/><rect x="390.2" y="635.0" width="1.8" height="1.8"/><rect x="390.2" y="658.9" width="1.8" height="1.8"/><rect x="396.3" y="439.7" width="1.8" height="1.8"/><rect x="396.3" y="505.8" width="1.8" height="1.8"/><rect x="396.3" y="544.9" width="1.8" height="1.8"/><rect x="396.3" y="582.7" width="1.8" height="1.8"/><rect x="396.3" y="613.3" width="1.8" height="1.8"/><rect x="396.3" y="634.8" width="1.8" height="1.8"/><rect x="396.3" y="650.1" width="1.8" height="1.8"/><rect x="396.3" y="658.7" width="1.8" height="1.8"/><rect x="402.4" y="439.7" width="1.8" height="1.8"/><rect x="402.4" y="451.6" width="1.8" height="1.8"/><rect x="402.4" y="473.1" width="1.8" height="1.8"/><rect x="402.4" y="505.8" width="1.8" height="1.8"/><rect x="402.4" y="544.9" width="1.8" height="1.8"/><rect x="402.4" y="613.3" width="1.8" height="1.8"/><rect x="402.4" y="634.8" width="1.8" height="1.8"/><rect x="402.4" y="650.0" width="1.8" height="1.8"/><rect x="402.4" y="658.7" width="1.8" height="1.8"/><rect x="408.5" y="439.6" width="1.8" height="1.8"/><rect x="408.5" y="473.1" width="1.8" height="1.8"/><rect x="408.5" y="545.0" width="1.8" height="1.8"/><rect x="408.5" y="613.4" width="1.8" height="1.8"/><rect x="408.5" y="634.9" width="1.8" height="1.8"/><rect x="408.5" y="650.2" width="1.8" height="1.8"/><rect x="408.5" y="658.8" width="1.8" height="1.8"/><rect x="414.6" y="434.3" width="1.8" height="1.8"/><rect x="414.6" y="439.6" width="1.8" height="1.8"/><rect x="414.6" y="451.6" width="1.8" height="1.8"/><rect x="414.6" y="505.9" width="1.8" height="1.8"/><rect x="414.6" y="545.1" width="1.8" height="1.8"/><rect x="414.6" y="582.9" width="1.8" height="1.8"/><rect x="414.6" y="613.5" width="1.8" height="1.8"/><rect x="414.6" y="635.1" width="1.8" height="1.8"/><rect x="414.6" y="650.3" width="1.8" height="1.8"/><rect x="414.6" y="658.9" width="1.8" height="1.8"/><rect x="420.7" y="434.3" width="1.8" height="1.8"/><rect x="420.7" y="439.6" width="1.8" height="1.8"/><rect x="420.7" y="451.6" width="1.8" height="1.8"/><rect x="420.7" y="473.2" width="1.8" height="1.8"/><rect x="420.7" y="506.0" width="1.8" height="1.8"/><rect x="420.7" y="545.2" width="1.8" height="1.8"/><rect x="420.7" y="583.0" width="1.8" height="1.8"/><rect x="420.7" y="613.6" width="1.8" height="1.8"/><rect x="420.7" y="635.2" width="1.8" height="1.8"/><rect x="420.7" y="650.4" width="1.8" height="1.8"/><rect x="420.7" y="659.0" width="1.8" height="1.8"/><rect x="426.8" y="434.3" width="1.8" height="1.8"/><rect x="426.8" y="439.7" width="1.8" height="1.8"/><rect x="426.8" y="451.7" width="1.8" height="1.8"/><rect x="426.8" y="545.3" width="1.8" height="1.8"/><rect x="426.8" y="583.2" width="1.8" height="1.8"/><rect x="426.8" y="613.7" width="1.8" height="1.8"/><rect x="426.8" y="635.3" width="1.8" height="1.8"/><rect x="426.8" y="650.5" width="1.8" height="1.8"/><rect x="426.8" y="659.2" width="1.8" height="1.8"/><rect x="432.9" y="434.4" width="1.8" height="1.8"/><rect x="432.9" y="439.7" width="1.8" height="1.8"/><rect x="432.9" y="473.3" width="1.8" height="1.8"/><rect x="432.9" y="506.2" width="1.8" height="1.8"/><rect x="432.9" y="613.9" width="1.8" height="1.8"/><rect x="432.9" y="635.4" width="1.8" height="1.8"/><rect x="439.0" y="434.4" width="1.8" height="1.8"/><rect x="439.0" y="439.8" width="1.8" height="1.8"/><rect x="439.0" y="451.8" width="1.8" height="1.8"/><rect x="439.0" y="473.4" width="1.8" height="1.8"/><rect x="439.0" y="506.3" width="1.8" height="1.8"/><rect x="439.0" y="583.4" width="1.8" height="1.8"/><rect x="439.0" y="614.0" width="1.8" height="1.8"/><rect x="439.0" y="635.6" width="1.8" height="1.8"/><rect x="439.0" y="650.8" width="1.8" height="1.8"/><rect x="439.0" y="659.4" width="1.8" height="1.8"/><rect x="445.1" y="434.5" width="1.8" height="1.8"/><rect x="445.1" y="473.5" width="1.8" height="1.8"/><rect x="445.1" y="506.4" width="1.8" height="1.8"/><rect x="445.1" y="545.7" width="1.8" height="1.8"/><rect x="445.1" y="583.6" width="1.8" height="1.8"/><rect x="445.1" y="614.1" width="1.8" height="1.8"/><rect x="445.1" y="650.9" width="1.8" height="1.8"/><rect x="445.1" y="659.5" width="1.8" height="1.8"/><rect x="451.2" y="434.6" width="1.8" height="1.8"/><rect x="451.2" y="439.9" width="1.8" height="1.8"/><rect x="451.2" y="473.6" width="1.8" height="1.8"/><rect x="451.2" y="506.5" width="1.8" height="1.8"/><rect x="451.2" y="545.7" width="1.8" height="1.8"/><rect x="451.2" y="583.5" width="1.8" height="1.8"/><rect x="451.2" y="614.1" width="1.8" height="1.8"/><rect x="451.2" y="635.6" width="1.8" height="1.8"/><rect x="451.2" y="650.7" width="1.8" height="1.8"/><rect x="451.2" y="659.3" width="1.8" height="1.8"/><rect x="457.3" y="434.7" width="1.8" height="1.8"/><rect x="457.3" y="440.0" width="1.8" height="1.8"/><rect x="457.3" y="452.0" width="1.8" height="1.8"/><rect x="457.3" y="473.6" width="1.8" height="1.8"/><rect x="457.3" y="506.3" width="1.8" height="1.8"/><rect x="457.3" y="545.4" width="1.8" height="1.8"/><rect x="457.3" y="613.5" width="1.8" height="1.8"/><rect x="457.3" y="650.0" width="1.8" height="1.8"/><rect x="457.3" y="658.6" width="1.8" height="1.8"/><rect x="463.4" y="440.1" width="1.8" height="1.8"/><rect x="463.4" y="452.1" width="1.8" height="1.8"/><rect x="463.4" y="473.6" width="1.8" height="1.8"/><rect x="463.4" y="506.2" width="1.8" height="1.8"/><rect x="463.4" y="545.2" width="1.8" height="1.8"/><rect x="463.4" y="582.7" width="1.8" height="1.8"/><rect x="463.4" y="613.0" width="1.8" height="1.8"/><rect x="463.4" y="634.3" width="1.8" height="1.8"/><rect x="463.4" y="649.4" width="1.8" height="1.8"/><rect x="463.4" y="657.9" width="1.8" height="1.8"/><rect x="469.5" y="434.9" width="1.8" height="1.8"/><rect x="469.5" y="440.2" width="1.8" height="1.8"/><rect x="469.5" y="452.1" width="1.8" height="1.8"/><rect x="469.5" y="473.6" width="1.8" height="1.8"/><rect x="469.5" y="506.1" width="1.8" height="1.8"/><rect x="469.5" y="582.3" width="1.8" height="1.8"/><rect x="469.5" y="612.5" width="1.8" height="1.8"/><rect x="469.5" y="633.7" width="1.8" height="1.8"/><rect x="469.5" y="648.7" width="1.8" height="1.8"/><rect x="475.6" y="435.0" width="1.8" height="1.8"/><rect x="475.6" y="440.3" width="1.8" height="1.8"/><rect x="475.6" y="452.2" width="1.8" height="1.8"/><rect x="475.6" y="544.6" width="1.8" height="1.8"/><rect x="475.6" y="632.8" width="1.8" height="1.8"/><rect x="475.6" y="647.7" width="1.8" height="1.8"/><rect x="481.7" y="440.4" width="1.8" height="1.8"/><rect x="481.7" y="452.2" width="1.8" height="1.8"/><rect x="481.7" y="473.4" width="1.8" height="1.8"/><rect x="481.7" y="505.5" width="1.8" height="1.8"/><rect x="481.7" y="543.8" width="1.8" height="1.8"/><rect x="481.7" y="580.6" width="1.8" height="1.8"/><rect x="481.7" y="610.3" width="1.8" height="1.8"/><rect x="481.7" y="631.2" width="1.8" height="1.8"/><rect x="481.7" y="645.9" width="1.8" height="1.8"/><rect x="481.7" y="654.3" width="1.8" height="1.8"/><rect x="487.8" y="435.3" width="1.8" height="1.8"/><rect x="487.8" y="440.5" width="1.8" height="1.8"/><rect x="487.8" y="505.0" width="1.8" height="1.8"/><rect x="487.8" y="579.6" width="1.8" height="1.8"/><rect x="487.8" y="629.6" width="1.8" height="1.8"/></g></svg></div>
<div class="tx" style="left:119.00px;top:415.34px;font-size:10px;line-height:13px;letter-spacing:0.000px;color:#000;font-weight:bold;transform:scaleX(0.9378);transform-origin:0 0;">Top</div>
<!-- Left viewport -->
<div class="abs" style="left:640px;top:59px;width:474px;height:1px;background:#8c8c8c"></div>
<div class="abs vp" style="left:645px;top:61px;width:454px;height:346px"><div class="ax" style="left:227px;top:0;width:1px;height:346px"></div><div class="ax" style="left:0;top:173px;width:454px;height:1px"></div><div class="cr" style="left:220px;top:173px;width:15px;height:1px"></div><div class="cr" style="left:227px;top:166px;width:1px;height:15px"></div><svg class="abs" style="left:-645px;top:-61px" width="1110" height="420" viewBox="0 0 1110 420"><path d="M792.7 151.7l0.4 -5.9M794.7 151.7l0.4 -6.3M789.2 151.7l-0.1 -6.3M792.4 229l0.5 4.4M800.8 151.0l-0.4 -5.1M801.4 151.0l-0.8 -4.2M799.7 151.0l0.7 -5.8M800.0 229l0.4 4.5M812.7 151.2l-0.6 -3.5M814.2 151.2l-0.5 -4.1M814.9 151.2l0.6 -4.4M813.4 229l0.0 6.4M831.2 151.5l0.7 -5.6M835.8 151.5l0.6 -4.4M832.2 151.5l-0.5 -3.9M831.7 229l-0.2 6.1M857.0 152.5l0.3 -4.5M858.9 152.5l0.5 -4.9M858.9 152.5l-0.0 -5.6M858.7 229l0.6 4.1M904.5 161.5l0.6 -3.6M904.7 161.5l-0.2 -5.2M900.1 161.5l-0.7 -4.0M904.4 229l-0.4 6.6M947.6 158.0l0.7 -4.5M944.1 158.0l0.0 -5.8M942.6 158.0l0.4 -5.9M946.1 229l-0.6 7.3M972.5 156.5l-0.3 -5.3M977.5 156.5l-0.3 -6.3M975.3 156.5l-0.3 -4.5M974.0 229l-0.5 4.5M982.1 156.6l0.8 -4.0M978.3 156.6l0.8 -5.1M980.4 156.6l-0.4 -5.3M982.0 229l-0.1 5.5M993.3 156.9l0.7 -3.6M996.0 156.9l0.5 -3.9M997.4 156.9l0.7 -5.4M996.9 229l-0.5 5.5M1004.9 157.1l0.6 -4.4M1006.7 157.1l0.8 -6.1M1009.9 157.1l-0.1 -5.0M1007.7 229l-0.0 5.0M1016.4 157.3l-0.6 -4.6M1019.9 157.3l0.7 -5.4M1017.0 157.3l-0.3 -3.8M1016.3 229l0.3 7.0M1026.2 157.4l0.5 -5.8M1028.2 157.4l0.3 -5.8M1026.2 157.4l0.3 -4.3M1027.0 229l0.3 6.4M790.0 174.9l-6.8 0.6M1029 199.4l3.5 -0.1M790.0 171.6l-6.0 0.2M1029 216.6l5.1 0.5M790.0 179.1l-5.9 0.8M1029 217.5l4.4 0.6M777.0 219.9l-6.1 1.4M1029 226.8l4.8 -0.2M790.0 165.0l-6.5 1.3M1029 191.8l5.2 0.3M777.0 209.0l-4.5 1.0M1029 199.4l5.2 -0.4M777.0 200.7l-6.3 0.6M1029 209.6l3.6 -1.1M777.0 186.4l-6.0 -0.5M1029 207.1l5.1 -1.4M777.0 188.8l-4.7 -0.9M1029 166.7l4.3 -1.0M790.0 167.1l-4.1 0.2M1029 184.8l5.0 -0.0M790.0 170.6l-6.7 -1.0M1029 186.6l4.2 -0.5M790.0 161.0l-6.5 -0.1M1029 159.6l5.0 -1.3M777.0 194.5l-5.0 0.5M1029 227.0l5.5 -0.5M777.0 215.4l-5.9 -0.1M1029 167.4l5.0 -0.1M777.0 226.7l-6.9 0.5M1029 182.6l5.7 -1.5M790.0 160.4l-5.7 0.5M1029 167.3l5.1 0.7M777.0 181.3l-5.3 -0.4M1029 178.3l5.9 -0.6M777.0 227.0l-6.7 0.5M1029 176.0l6.0 -0.3M777.0 184.4l-5.0 1.5M1029 192.9l4.2 -0.3M790.0 161.5l-5.9 0.1M1029 178.4l5.5 0.6M790.0 153.0l-5.6 -0.3M1029 225.3l5.5 -0.9M790.0 172.9l-4.5 1.5M1029 178.4l5.0 -0.3M777.0 202.3l-5.8 0.9M1029 165.6l5.4 -0.7M777.0 193.6l-5.0 -0.3M1029 195.7l4.7 -0.6M777.0 210.1l-5.8 -0.9M1029 175.4l4.6 0.8M777.0 221.3l-5.6 -1.0M1029 213.8l4.6 -0.1M777.0 207.2l-5.9 0.2M1029 223.6l4.5 -0.5M777.0 218.4l-4.6 -0.3M1029 217.6l3.7 0.6M777.0 206.2l-5.3 -0.3M1029 214.0l5.8 -1.1M777.0 189.3l-5.6 0.2M1029 181.1l3.9 -0.0M778 221.0l-4.3 0.1M778 221.3l-7.2 1.2M778 183.2l-6.9 1.9M778 229.9l-6.8 -0.4M778 222.4l-4.9 1.1M778 227.7l-6.8 -0.2M778 196.0l-7.7 -0.1M778 211.3l-5.7 -0.1M778 211.9l-4.2 -0.2M778 200.2l-4.3 -0.4M778 209.6l-7.0 1.7M778 188.4l-5.7 0.3M778 210.8l-6.0 1.8M778 200.0l-4.2 1.2M778 189.3l-6.5 0.8M778 225.7l-6.2 1.1M778 194.6l-6.2 0.1M778 218.0l-6.1 -0.2M778 193.3l-5.5 1.3M778 190.6l-6.9 1.1M778 186.1l-6.7 -0.3M778 188.0l-6.4 0.1M778 224.1l-5.9 0.3M778 220.2l-4.1 1.3M777.3 229l-0.8 5.9M792.3 229l-0.7 3.3M799.3 229l-0.0 5.5M779.4 229l-0.1 4.1M781.6 229l-0.5 4.8M784.4 229l-0.4 3.4M795.9 229l-0.0 5.4M786.4 229l0.3 4.6M790.2 229l-0.1 5.2M785.5 229l-0.9 3.1M780.9 229l-0.9 5.7M787.5 229l0.1 3.0M787.3 229l0.3 4.9M786.3 229l-0.3 3.3M779.7 229l-0.8 4.1M785.3 229l0.3 3.5M782.1 229l-0.6 3.5M782.9 229l-0.6 4.4M776.8 229l0.4 4.1M798.5 229l0.0 5.0M787.3 229l0.4 3.4M792.0 229l-0.6 5.0M793.5 229l-0.8 3.6M776.6 229l-0.7 3.2M785.6 229l0.5 4.1M783.5 229l-0.3 3.8M1022.0 229l0.3 3.4M1022.0 157l-0.3 -4.7M1028.2 229l0.2 4.1M1028.2 157l0.6 -3.0M1001.8 229l0.3 4.0M1001.8 157l-0.5 -4.4M1029.7 229l0.0 3.9M1029.7 157l-0.5 -3.2M1027.0 229l-0.0 5.3M1027.0 157l-0.5 -3.6M1001.5 229l-0.1 3.2M1001.5 157l-0.3 -4.0M1009.2 229l-0.5 3.1M1009.2 157l0.6 -3.4M1015.3 229l-0.1 4.3M1015.3 157l-0.5 -3.8M1003.2 229l0.1 5.3M1003.2 157l0.1 -5.1M1006.4 229l-0.6 4.3M1006.4 157l-0.0 -4.4" stroke="#1c1cff" stroke-width="1" fill="none"/><path d="M788.0 151.0 L792.0 150.7 L796.0 150.3 L800.0 150.0 L804.0 150.1 L808.0 150.1 L812.0 150.2 L816.0 150.2 L820.0 150.3 L824.0 150.3 L828.0 150.4 L832.0 150.5 L836.0 150.5 L840.0 150.7 L844.0 150.9 L848.0 151.0 L852.0 151.2 L856.0 151.3 L860.0 151.5 L864.0 152.4 L868.0 153.3 L872.0 154.2 L876.0 155.1 L880.0 156.0 L884.0 156.8 L888.0 157.6 L892.0 158.3 L896.0 159.1 L900.0 159.9 L904.0 160.4 L908.0 160.0 L912.0 159.7 L916.0 159.3 L920.0 159.0 L924.0 158.6 L928.0 158.3 L932.0 158.0 L936.0 157.7 L940.0 157.4 L944.0 157.1 L948.0 156.8 L952.0 156.7 L956.0 156.4 L960.0 156.2 L964.0 156.1 L968.0 155.8 L972.0 155.7 L976.0 155.5 L980.0 155.6 L984.0 155.7 L988.0 155.8 L992.0 155.8 L996.0 155.9 L1000.0 156.0 L1004.0 156.1 L1008.0 156.1 L1012.0 156.2 L1016.0 156.3 L1020.0 156.3 L1024.0 156.4 L1028.0 156.5 L1031.0 156.5 L1031.0 182.0 L788.0 182.0Z" fill="#f80008"/><path d="M778.0 180.0 L1031.0 180.0 L1031.5 229.0 L1000.0 231.0 L900.0 231.0 L800.0 231.0 L779.0 230.5 L776.0 226.0 L771.0 217.5 L775.0 208.0 L776.0 190.0Z" fill="#f80008"/><path d="M881.6 173.6l23.4 1.0M866.3 168.3l25.8 -0.7M823.7 163.3l8.1 0.7M979.9 167.0l9.1 -1.0M852.4 158.3l16.3 0.2M852.5 157.7l22.8 -1.1M842.4 163.0l15.0 -1.0M891.4 168.8l24.1 0.1M996.9 174.1l24.2 0.2M896.2 177.9l21.7 1.1M959.6 175.1l12.4 0.7M882.9 164.1l7.6 -0.8M856.3 173.0l12.9 -1.0M967.6 172.1l6.7 -1.1M826.9 164.5l26.6 1.1M933.9 167.0l16.3 -0.3M871.3 159.3l20.0 0.8M959.4 163.2l18.7 -0.8M955.5 170.2l28.5 0.7M824.2 163.5l28.0 -0.1M894.4 171.4l24.4 1.0M916.2 180.5l20.3 -1.0M978.8 169.1l7.3 1.1M805.3 170.0l17.6 0.9M885.2 166.1l12.6 -0.7M922.9 169.9l24.0 -0.6M876.1 165.3l29.6 0.8M986.7 173.3l15.6 -0.9M982.6 170.6l6.9 -0.8M819.9 173.7l27.6 -0.7M974.9 167.1l22.4 0.9M936.3 177.3l15.0 -1.2M911.6 174.3l10.4 -0.3M868.4 159.0l13.5 -0.3M903.7 176.4l15.6 1.2M979.0 179.4l22.6 0.4M917.2 177.6l14.7 0.2M948.8 171.8l12.8 -1.0M817.4 164.4l19.9 0.6M956.6 167.4l28.3 -0.5M957.0 162.8l24.1 0.4M1010.4 179.0l22.5 0.8M962.0 173.3l11.0 0.0M996.9 165.7l29.4 0.1M885.3 162.1l15.4 -0.8M943.0 179.1l27.8 0.3M883.8 163.8l22.5 0.1M956.8 168.7l27.3 -0.7M865.8 164.0l20.9 1.0M835.2 171.6l24.4 -0.7M811.9 169.8l25.9 0.9M959.6 169.5l16.2 0.1M998.9 167.0l12.7 0.3M1012.6 164.9l6.7 -0.9M922.9 174.1l10.4 -0.7M930.0 174.7l22.6 0.5M811.6 167.7l26.0 1.1M868.7 177.6l21.5 1.0M848.9 173.4l26.2 -0.1M820.4 160.3l9.8 -1.0M831.7 171.2l8.5 0.6M961.4 177.4l25.3 0.5M1003.1 180.1l21.0 1.1M820.9 157.9l7.5 -0.7M881.1 170.3l22.3 0.6M816.6 165.6l19.0 -0.3M824.1 170.7l15.0 0.4M908.0 180.4l28.7 -1.0M966.7 175.4l13.1 -0.9M904.3 170.9l23.7 1.0M882.8 167.2l18.0 0.5M973.2 172.3l13.1 -0.4M986.3 171.3l7.2 -0.2M850.8 172.7l7.8 -0.5M819.3 167.6l29.6 0.1M883.8 179.7l8.2 -0.3M978.0 160.7l24.4 -0.3M801.6 161.5l17.0 -0.3M912.7 165.5l11.2 1.1M896.3 172.1l8.0 -0.5M1010.0 174.8l18.2 -1.1M885.2 176.8l16.4 0.2M998.3 173.9l21.3 -1.1M803.3 175.0l15.9 0.9M981.3 179.3l15.1 1.2M965.9 178.8l9.6 0.7M891.7 180.5l29.9 -0.7M891.6 168.1l17.3 -0.5M946.0 164.3l10.1 -0.1M814.4 165.0l27.5 0.9M841.6 156.2l25.9 1.1M931.0 165.5l11.7 1.0M1006.1 161.7l10.4 -0.2M857.2 174.9l15.0 0.7M831.7 168.7l29.4 0.5M818.0 158.1l21.4 -0.3M879.9 170.5l20.0 1.1M851.5 170.3l12.3 0.1M960.4 163.9l17.5 0.5M799.8 175.1l16.1 0.0M933.5 177.2l7.3 0.0M806.5 165.1l14.3 -1.1M864.1 168.0l21.7 1.0M880.2 171.6l23.1 1.0M1008.8 180.8l13.2 -0.8M1004.9 162.6l16.8 0.6M915.4 170.8l28.2 -0.5M920.5 178.1l9.3 -0.4M907.7 174.1l11.0 -0.1M811.3 157.4l14.2 -0.9M1012.8 166.4l12.6 0.7M962.5 166.3l25.9 0.3M884.3 173.9l11.9 -0.6M992.6 169.7l27.5 -0.8M828.5 156.7l23.8 0.1M800.1 156.1l25.8 -0.0M991.4 161.6l20.1 -0.9M958.1 173.4l20.7 -0.7M1008.7 163.3l7.5 0.4M818.6 157.0l17.0 0.4M996.0 175.4l7.7 0.3M985.3 163.2l24.1 -0.6M864.3 157.5l24.2 0.0M998.2 170.3l9.7 -0.7M856.5 179.7l10.9 -1.0M876.3 161.8l16.2 0.3M942.4 165.5l9.3 -0.0M950.6 170.3l19.8 1.0M830.2 162.3l17.9 0.1M997.8 172.1l21.9 -0.2M972.1 177.7l13.0 -0.9M855.5 165.1l27.4 -0.6M937.7 174.4l28.9 -0.9M968.9 167.6l8.5 0.3M985.4 172.5l7.2 1.1M883.3 174.0l23.4 -0.6M888.7 168.7l8.3 -1.0M957.1 169.4l26.9 -1.0M864.9 161.8l28.6 0.7M997.0 171.1l8.5 -0.2M848.2 156.7l19.6 -0.5M821.9 168.5l28.4 1.1M901.5 166.8l24.4 -0.9M917.3 165.6l29.7 0.1M895.1 168.6l19.2 1.1M893.0 167.2l18.4 1.0M882.8 173.9l28.0 -0.4M978.0 171.4l9.3 -1.1M1006.5 170.4l16.6 1.0M925.4 172.2l12.8 0.6M854.9 167.9l24.2 0.3M827.8 160.6l22.7 0.5M820.8 180.9l9.2 -0.8M817.9 166.7l20.9 0.9M834.2 173.3l8.5 0.2M853.9 165.1l7.3 0.5M825.1 175.0l14.1 0.2M939.9 171.5l27.0 1.0M860.6 164.8l27.0 -0.9M891.3 170.6l29.4 -0.9M943.4 176.4l23.5 -1.2M1007.5 167.3l26.5 0.4M891.4 178.1l22.2 -0.4M960.5 171.2l23.1 0.3M974.7 163.8l17.9 -1.2M973.6 176.3l26.1 -1.1M916.8 172.3l8.9 -0.7M1014.3 178.1l11.7 0.8M942.5 169.4l21.5 -0.7M858.8 156.7l21.8 0.2" stroke="#fff" stroke-width="1.15" fill="none" opacity="0.85"/><path d="M956.0 205.2l9.2 0M855.5 214.9l8.5 0M922.3 215.8l9.3 0M942.8 186.6l7.1 0M978.3 190.2l4.7 0M788.3 216.2l5.3 0M890.4 202.4l13.6 0M894.6 205.9l4.3 0M967.9 216.2l11.5 0M977.0 209.8l12.6 0M980.7 209.9l4.2 0M988.4 225.6l6.4 0M800.2 198.3l5.2 0M870.0 187.7l6.6 0M785.8 202.0l7.6 0M952.6 200.3l6.0 0M1004.3 221.6l12.3 0M834.9 200.9l9.4 0M879.0 185.1l9.5 0M961.6 213.1l14.3 0M942.1 216.0l14.4 0M995.9 217.3l9.0 0M936.7 211.6l14.6 0M949.1 202.6l6.3 0M860.3 194.5l12.2 0M962.0 192.1l10.4 0M978.3 199.4l5.1 0M924.3 199.2l5.7 0M851.2 184.3l5.8 0M882.8 188.4l4.1 0M911.5 224.2l14.0 0M860.0 222.8l5.0 0M819.6 184.3l4.7 0M923.4 215.8l9.7 0M969.8 203.0l15.0 0M924.8 206.6l6.0 0M883.1 202.5l13.9 0M837.8 196.4l13.8 0M801.3 206.6l6.6 0M938.0 209.0l5.1 0" stroke="#ffd0d0" stroke-width="0.9" fill="none" opacity="0.75"/><g fill="#d40010" opacity="0.9"><rect x="790.8" y="150.7" width="2.6" height="78.3"/><rect x="799.8" y="150.0" width="2.6" height="79.0"/><rect x="810.8" y="150.2" width="2.6" height="78.8"/><rect x="831.8" y="150.5" width="2.6" height="78.5"/><rect x="858.8" y="151.5" width="2.6" height="77.5"/><rect x="901.8" y="160.5" width="2.6" height="68.5"/><rect x="943.8" y="157.0" width="2.6" height="72.0"/><rect x="973.8" y="155.5" width="2.6" height="73.5"/><rect x="979.8" y="155.6" width="2.6" height="73.4"/><rect x="994.8" y="155.9" width="2.6" height="73.1"/><rect x="1005.8" y="156.1" width="2.6" height="72.9"/><rect x="1015.8" y="156.3" width="2.6" height="72.7"/><rect x="1025.8" y="156.4" width="2.6" height="72.6"/></g><g fill="#2a0606"><rect x="792.7" y="158.3" width="1.9" height="1.7"/><rect x="792.0" y="164.4" width="1.9" height="1.7"/><rect x="789.9" y="167.9" width="1.9" height="1.7"/><rect x="791.4" y="179.0" width="1.9" height="1.7"/><rect x="790.1" y="183.9" width="1.9" height="1.7"/><rect x="789.9" y="188.0" width="1.9" height="1.7"/><rect x="790.6" y="193.7" width="1.9" height="1.7"/><rect x="793.0" y="197.1" width="1.9" height="1.7"/><rect x="790.8" y="201.2" width="1.9" height="1.7"/><rect x="790.8" y="208.0" width="1.9" height="1.7"/><rect x="792.7" y="216.7" width="1.9" height="1.7"/><rect x="799.6" y="153.0" width="1.9" height="1.7"/><rect x="800.4" y="162.1" width="1.9" height="1.7"/><rect x="800.1" y="178.7" width="1.9" height="1.7"/><rect x="801.8" y="182.3" width="1.9" height="1.7"/><rect x="800.8" y="186.5" width="1.9" height="1.7"/><rect x="800.2" y="191.8" width="1.9" height="1.7"/><rect x="799.0" y="197.8" width="1.9" height="1.7"/><rect x="800.9" y="207.1" width="1.9" height="1.7"/><rect x="799.2" y="214.3" width="1.9" height="1.7"/><rect x="811.3" y="159.6" width="1.9" height="1.7"/><rect x="812.3" y="190.1" width="1.9" height="1.7"/><rect x="810.6" y="196.0" width="1.9" height="1.7"/><rect x="813.0" y="199.7" width="1.9" height="1.7"/><rect x="811.8" y="204.3" width="1.9" height="1.7"/><rect x="809.7" y="213.9" width="1.9" height="1.7"/><rect x="811.7" y="224.1" width="1.9" height="1.7"/><rect x="831.8" y="159.6" width="1.9" height="1.7"/><rect x="834.0" y="165.0" width="1.9" height="1.7"/><rect x="831.6" y="168.2" width="1.9" height="1.7"/><rect x="831.4" y="173.3" width="1.9" height="1.7"/><rect x="830.7" y="184.2" width="1.9" height="1.7"/><rect x="834.1" y="187.6" width="1.9" height="1.7"/><rect x="830.8" y="191.9" width="1.9" height="1.7"/><rect x="831.6" y="211.7" width="1.9" height="1.7"/><rect x="833.2" y="214.9" width="1.9" height="1.7"/><rect x="831.7" y="219.9" width="1.9" height="1.7"/><rect x="858.5" y="169.8" width="1.9" height="1.7"/><rect x="857.9" y="174.6" width="1.9" height="1.7"/><rect x="861.0" y="178.6" width="1.9" height="1.7"/><rect x="858.7" y="193.8" width="1.9" height="1.7"/><rect x="858.1" y="205.5" width="1.9" height="1.7"/><rect x="858.7" y="212.5" width="1.9" height="1.7"/><rect x="860.0" y="216.4" width="1.9" height="1.7"/><rect x="860.2" y="221.7" width="1.9" height="1.7"/><rect x="902.3" y="183.1" width="1.9" height="1.7"/><rect x="903.3" y="188.3" width="1.9" height="1.7"/><rect x="902.5" y="192.7" width="1.9" height="1.7"/><rect x="902.6" y="199.0" width="1.9" height="1.7"/><rect x="902.3" y="208.7" width="1.9" height="1.7"/><rect x="902.6" y="217.6" width="1.9" height="1.7"/><rect x="903.9" y="221.4" width="1.9" height="1.7"/><rect x="901.7" y="224.5" width="1.9" height="1.7"/><rect x="901.2" y="227.6" width="1.9" height="1.7"/><rect x="945.1" y="163.3" width="1.9" height="1.7"/><rect x="943.4" y="168.8" width="1.9" height="1.7"/><rect x="944.3" y="177.7" width="1.9" height="1.7"/><rect x="945.0" y="182.7" width="1.9" height="1.7"/><rect x="944.5" y="188.5" width="1.9" height="1.7"/><rect x="944.4" y="200.1" width="1.9" height="1.7"/><rect x="945.1" y="205.7" width="1.9" height="1.7"/><rect x="975.3" y="167.9" width="1.9" height="1.7"/><rect x="974.5" y="171.8" width="1.9" height="1.7"/><rect x="975.2" y="194.3" width="1.9" height="1.7"/><rect x="975.4" y="201.1" width="1.9" height="1.7"/><rect x="975.4" y="206.7" width="1.9" height="1.7"/><rect x="974.4" y="213.2" width="1.9" height="1.7"/><rect x="980.1" y="158.6" width="1.9" height="1.7"/><rect x="981.4" y="171.3" width="1.9" height="1.7"/><rect x="981.0" y="192.8" width="1.9" height="1.7"/><rect x="982.1" y="198.1" width="1.9" height="1.7"/><rect x="978.8" y="202.3" width="1.9" height="1.7"/><rect x="981.5" y="210.2" width="1.9" height="1.7"/><rect x="979.5" y="224.3" width="1.9" height="1.7"/><rect x="994.0" y="158.9" width="1.9" height="1.7"/><rect x="996.4" y="162.5" width="1.9" height="1.7"/><rect x="994.5" y="169.3" width="1.9" height="1.7"/><rect x="995.5" y="178.4" width="1.9" height="1.7"/><rect x="996.4" y="182.4" width="1.9" height="1.7"/><rect x="996.4" y="185.9" width="1.9" height="1.7"/><rect x="994.5" y="203.2" width="1.9" height="1.7"/><rect x="995.3" y="219.1" width="1.9" height="1.7"/><rect x="1004.9" y="164.3" width="1.9" height="1.7"/><rect x="1006.2" y="169.0" width="1.9" height="1.7"/><rect x="1007.4" y="178.2" width="1.9" height="1.7"/><rect x="1005.0" y="182.2" width="1.9" height="1.7"/><rect x="1007.0" y="191.6" width="1.9" height="1.7"/><rect x="1005.9" y="197.3" width="1.9" height="1.7"/><rect x="1005.0" y="200.9" width="1.9" height="1.7"/><rect x="1007.0" y="205.5" width="1.9" height="1.7"/><rect x="1005.7" y="209.8" width="1.9" height="1.7"/><rect x="1007.7" y="214.8" width="1.9" height="1.7"/><rect x="1004.9" y="219.7" width="1.9" height="1.7"/><rect x="1017.6" y="172.4" width="1.9" height="1.7"/><rect x="1015.4" y="177.8" width="1.9" height="1.7"/><rect x="1015.3" y="181.0" width="1.9" height="1.7"/><rect x="1017.4" y="192.4" width="1.9" height="1.7"/><rect x="1017.8" y="202.4" width="1.9" height="1.7"/><rect x="1015.6" y="223.2" width="1.9" height="1.7"/><rect x="1025.9" y="165.2" width="1.9" height="1.7"/><rect x="1025.4" y="169.5" width="1.9" height="1.7"/><rect x="1025.6" y="174.6" width="1.9" height="1.7"/><rect x="1027.8" y="191.4" width="1.9" height="1.7"/><rect x="1027.3" y="194.8" width="1.9" height="1.7"/><rect x="1025.4" y="210.4" width="1.9" height="1.7"/><rect x="1028.0" y="213.8" width="1.9" height="1.7"/><rect x="1026.1" y="220.6" width="1.9" height="1.7"/></g><path d="M789.0 223.6l0.4 3.9M788.3 214.6l0.4 2.4M800.8 212.5l0.4 2.6M798.8 217.8l0.4 3.0M810.9 219.3l0.4 2.9M813.7 214.2l0.4 3.6M834.6 218.1l0.4 3.2M833.7 219.9l0.4 2.4M858.5 208.3l0.4 2.0M860.1 211.9l0.4 2.5M899.2 205.5l0.4 3.3M901.1 214.2l0.4 3.4M946.4 219.7l0.4 2.4M946.9 208.9l0.4 3.2M974.9 211.0l0.4 3.8M974.7 219.9l0.4 2.3M982.0 211.0l0.4 3.2M981.4 211.8l0.4 2.5M994.0 225.5l0.4 3.3M994.8 216.8l0.4 3.3M1004.6 206.6l0.4 2.2M1006.5 217.6l0.4 4.0M1016.7 222.9l0.4 4.0M1016.0 213.9l0.4 2.9M1025.2 221.0l0.4 3.2M1023.7 225.1l0.4 3.1" stroke="#1c1cff" stroke-width="1.1" fill="none"/></svg></div>
<svg class="abs" style="left:642px;top:59px" width="460" height="350" viewBox="642 59 460 350"><rect x="644.05" y="60.8" width="455.1" height="346.3" fill="none" stroke="#000" stroke-width="1.75"/></svg>
<div class="tx" style="left:645.60px;top:61.03px;font-size:10px;line-height:13px;letter-spacing:0.000px;color:#000;font-weight:bold;transform:scaleX(0.9486);transform-origin:0 0;">Left</div>

<!-- right panels -->
<div class="abs" style="left:1116px;top:38px;width:84px;height:1px;background:#cfcfcf"></div><div class="abs" style="left:1116px;top:39px;width:84px;height:19px;background:#fff"></div>
<div class="abs" style="left:1115px;top:58px;width:85px;height:1px;background:#d4d4d4"></div>
<div class="abs" style="left:1113px;top:60px;width:4px;height:349px;background:#f8f8f8"></div>
<div class="abs sunk3" style="left:1117px;top:63px;width:90px;height:157px"></div>
<div class="abs" style="left:1130px;top:65px;width:27px;height:11px;background:#ebebeb"></div><svg class="abs" style="left:1118px;top:64.5px" width="12" height="12" viewBox="0 0 12 12">
<path d="M0.7 7 L0.5 2.6 L5.6 0.5 L9.4 3.4" fill="none" stroke="#f4ec20" stroke-width="1.3" stroke-linejoin="round"/>
<path d="M1.5 2.4 L6 1.5 L10.7 5.3 L7.3 10.1 L2.5 9.3 Z" fill="#fff" stroke="#d41414" stroke-width="1.2" stroke-dasharray="2.4 0.5"/>
<path d="M4.6 3 L5.4 5.4 L4.9 6 L5.8 8.6" fill="none" stroke="#f6ee30" stroke-width="1.3"/>
<circle cx="10.5" cy="5.3" r="0.8" fill="#c81010"/><circle cx="2.5" cy="9.3" r="0.8" fill="#e81818"/><circle cx="6" cy="1.6" r="0.8" fill="#e01414"/>
</svg><div class="tx" style="left:1136.00px;top:63.77px;font-size:9.9px;line-height:13px;letter-spacing:-0.366px;color:#000;transform:scaleX(0.8600);transform-origin:0 0;">0.000</div><svg class="abs" style="left:1118px;top:76.5px" width="12" height="12" viewBox="0 0 12 12">
<path d="M0.7 7 L0.5 2.6 L5.6 0.5 L9.4 3.4" fill="none" stroke="#f4ec20" stroke-width="1.3" stroke-linejoin="round"/>
<path d="M1.5 2.4 L6 1.5 L10.7 5.3 L7.3 10.1 L2.5 9.3 Z" fill="#fff" stroke="#d41414" stroke-width="1.2" stroke-dasharray="2.4 0.5"/>
<path d="M4.6 3 L5.4 5.4 L4.9 6 L5.8 8.6" fill="none" stroke="#f6ee30" stroke-width="1.3"/>
<circle cx="10.5" cy="5.3" r="0.8" fill="#c81010"/><circle cx="2.5" cy="9.3" r="0.8" fill="#e81818"/><circle cx="6" cy="1.6" r="0.8" fill="#e01414"/>
</svg><div class="tx" style="left:1136.00px;top:76.27px;font-size:9.9px;line-height:13px;letter-spacing:-0.366px;color:#000;transform:scaleX(0.8600);transform-origin:0 0;">1.000</div><svg class="abs" style="left:1118px;top:89.5px" width="12" height="12" viewBox="0 0 12 12">
<path d="M0.7 7 L0.5 2.6 L5.6 0.5 L9.4 3.4" fill="none" stroke="#f4ec20" stroke-width="1.3" stroke-linejoin="round"/>
<path d="M1.5 2.4 L6 1.5 L10.7 5.3 L7.3 10.1 L2.5 9.3 Z" fill="#fff" stroke="#d41414" stroke-width="1.2" stroke-dasharray="2.4 0.5"/>
<path d="M4.6 3 L5.4 5.4 L4.9 6 L5.8 8.6" fill="none" stroke="#f6ee30" stroke-width="1.3"/>
<circle cx="10.5" cy="5.3" r="0.8" fill="#c81010"/><circle cx="2.5" cy="9.3" r="0.8" fill="#e81818"/><circle cx="6" cy="1.6" r="0.8" fill="#e01414"/>
</svg><div class="tx" style="left:1136.00px;top:88.77px;font-size:9.9px;line-height:13px;letter-spacing:-0.366px;color:#000;transform:scaleX(0.8600);transform-origin:0 0;">2.000</div><svg class="abs" style="left:1118px;top:102.5px" width="12" height="12" viewBox="0 0 12 12">
<path d="M0.7 7 L0.5 2.6 L5.6 0.5 L9.4 3.4" fill="none" stroke="#f4ec20" stroke-width="1.3" stroke-linejoin="round"/>
<path d="M1.5 2.4 L6 1.5 L10.7 5.3 L7.3 10.1 L2.5 9.3 Z" fill="#fff" stroke="#d41414" stroke-width="1.2" stroke-dasharray="2.4 0.5"/>
<path d="M4.6 3 L5.4 5.4 L4.9 6 L5.8 8.6" fill="none" stroke="#f6ee30" stroke-width="1.3"/>
<circle cx="10.5" cy="5.3" r="0.8" fill="#c81010"/><circle cx="2.5" cy="9.3" r="0.8" fill="#e81818"/><circle cx="6" cy="1.6" r="0.8" fill="#e01414"/>
</svg><div class="tx" style="left:1136.00px;top:101.27px;font-size:9.9px;line-height:13px;letter-spacing:-0.366px;color:#000;transform:scaleX(0.8600);transform-origin:0 0;">3.000</div><svg class="abs" style="left:1118px;top:114.5px" width="12" height="12" viewBox="0 0 12 12">
<path d="M0.7 7 L0.5 2.6 L5.6 0.5 L9.4 3.4" fill="none" stroke="#f4ec20" stroke-width="1.3" stroke-linejoin="round"/>
<path d="M1.5 2.4 L6 1.5 L10.7 5.3 L7.3 10.1 L2.5 9.3 Z" fill="#fff" stroke="#d41414" stroke-width="1.2" stroke-dasharray="2.4 0.5"/>
<path d="M4.6 3 L5.4 5.4 L4.9 6 L5.8 8.6" fill="none" stroke="#f6ee30" stroke-width="1.3"/>
<circle cx="10.5" cy="5.3" r="0.8" fill="#c81010"/><circle cx="2.5" cy="9.3" r="0.8" fill="#e81818"/><circle cx="6" cy="1.6" r="0.8" fill="#e01414"/>
</svg><div class="tx" style="left:1131.30px;top:113.67px;font-size:9.9px;line-height:13px;letter-spacing:-0.596px;color:#000;transform:scaleX(0.8600);transform-origin:0 0;">Geometry</div><svg class="abs" style="left:1118px;top:126.5px" width="12" height="12" viewBox="0 0 12 12">
<path d="M0.7 7 L0.5 2.6 L5.6 0.5 L9.4 3.4" fill="none" stroke="#f4ec20" stroke-width="1.3" stroke-linejoin="round"/>
<path d="M1.5 2.4 L6 1.5 L10.7 5.3 L7.3 10.1 L2.5 9.3 Z" fill="#fff" stroke="#d41414" stroke-width="1.2" stroke-dasharray="2.4 0.5"/>
<path d="M4.6 3 L5.4 5.4 L4.9 6 L5.8 8.6" fill="none" stroke="#f6ee30" stroke-width="1.3"/>
<circle cx="10.5" cy="5.3" r="0.8" fill="#c81010"/><circle cx="2.5" cy="9.3" r="0.8" fill="#e81818"/><circle cx="6" cy="1.6" r="0.8" fill="#e01414"/>
</svg><div class="tx" style="left:1131.30px;top:126.17px;font-size:9.9px;line-height:13px;letter-spacing:-0.809px;color:#000;transform:scaleX(0.8600);transform-origin:0 0;">Memory</div><svg class="abs" style="left:1118px;top:139.5px" width="12" height="12" viewBox="0 0 12 12">
<path d="M0.7 7 L0.5 2.6 L5.6 0.5 L9.4 3.4" fill="none" stroke="#f4ec20" stroke-width="1.3" stroke-linejoin="round"/>
<path d="M1.5 2.4 L6 1.5 L10.7 5.3 L7.3 10.1 L2.5 9.3 Z" fill="#fff" stroke="#d41414" stroke-width="1.2" stroke-dasharray="2.4 0.5"/>
<path d="M4.6 3 L5.4 5.4 L4.9 6 L5.8 8.6" fill="none" stroke="#f6ee30" stroke-width="1.3"/>
<circle cx="10.5" cy="5.3" r="0.8" fill="#c81010"/><circle cx="2.5" cy="9.3" r="0.8" fill="#e81818"/><circle cx="6" cy="1.6" r="0.8" fill="#e01414"/>
</svg><div class="tx" style="left:1131.30px;top:138.67px;font-size:9.9px;line-height:13px;letter-spacing:-0.504px;color:#000;transform:scaleX(0.8600);transform-origin:0 0;">View Geometry</div><svg class="abs" style="left:1118px;top:151.5px" width="12" height="12" viewBox="0 0 12 12">
<path d="M0.7 7 L0.5 2.6 L5.6 0.5 L9.4 3.4" fill="none" stroke="#f4ec20" stroke-width="1.3" stroke-linejoin="round"/>
<path d="M1.5 2.4 L6 1.5 L10.7 5.3 L7.3 10.1 L2.5 9.3 Z" fill="#fff" stroke="#d41414" stroke-width="1.2" stroke-dasharray="2.4 0.5"/>
<path d="M4.6 3 L5.4 5.4 L4.9 6 L5.8 8.6" fill="none" stroke="#f6ee30" stroke-width="1.3"/>
<circle cx="10.5" cy="5.3" r="0.8" fill="#c81010"/><circle cx="2.5" cy="9.3" r="0.8" fill="#e81818"/><circle cx="6" cy="1.6" r="0.8" fill="#e01414"/>
</svg><div class="tx" style="left:1131.30px;top:151.17px;font-size:9.9px;line-height:13px;letter-spacing:-0.589px;color:#000;transform:scaleX(0.8600);transform-origin:0 0;">Fire Geometry</div>
<div class="abs" style="left:1115px;top:221px;width:85px;height:1px;background:#fbfbfb"></div>
<div class="abs" style="left:1114px;top:223px;width:86px;height:1px;background:#a0a0a0"></div>
<div class="abs sunk3" style="left:1117px;top:227px;width:90px;height:185px;box-shadow:none"></div>
<svg class="abs" style="left:1119px;top:229px" width="11" height="12" viewBox="0 0 11 12"><path d="M4.8 1 L8.6 5 L5.2 10.4 L2.4 6Z" fill="#fff" stroke="#d81010" stroke-width="1"/><path d="M0.6 3.4H3.4V7.2H1.6Z M2 5.2h2.2" fill="none" stroke="#222" stroke-width="0.9"/></svg>
<div class="tx" style="left:1132.00px;top:227.90px;font-size:9.8px;line-height:13px;letter-spacing:-0.484px;color:#000;transform:scaleX(0.8600);transform-origin:0 0;">blueprint</div>

<!-- status bar -->
<div class="abs" style="left:1px;top:753px;width:117px;height:11px;background:#fff"></div><div class="abs" style="left:118px;top:754px;width:526px;height:10px;background:#fff"></div>
<div class="tx" style="left:2.60px;top:755.97px;font-size:9.6px;line-height:12px;letter-spacing:-0.013px;color:#000;transform:scaleX(0.8600);transform-origin:0 0;">Points:&nbsp;2140&nbsp;&nbsp;Faces:&nbsp;4409&nbsp;&nbsp;Sections:&nbsp;1&nbsp;&nbsp;Selected&nbsp;points:&nbsp;2140&nbsp;&nbsp;Selected&nbsp;faces:&nbsp;4409&nbsp;&nbsp;Size&nbsp;on&nbsp;disk:&nbsp;1489&nbsp;KB</div>


<div class="abs" style="left:643px;top:408px;width:557px;height:356px;background:#fff;box-shadow:0 0 5px rgba(0,0,0,0.22)"></div>
<div class="abs" style="left:643px;top:408px;width:1px;height:356px;background:#8c8c8c"></div>
<div class="abs" style="left:644px;top:408px;width:1px;height:356px;background:#d2d2d2"></div><div class="abs" style="left:645px;top:431px;width:555px;height:333px;background:#7db0f0;border-left:1px solid #a7c6ee;border-top:1px solid #6ea6ea"></div>
<svg class="abs" style="left:651px;top:413px" width="12" height="12" viewBox="0 0 12 12"><rect width="12" height="12" rx="1.8" fill="#161616"/><path d="M2 9.6H10" stroke="#6a6a6a" stroke-width="1.2"/><path d="M5.8 2L5 6L6.8 8.6M5 6L3.4 7.6M5.6 3.6L8 5.4" fill="none" stroke="#8a8a8a" stroke-width="1"/><path d="M3 2.6V5" stroke="#c040c0" stroke-width="0.8"/><path d="M8.6 3L9.6 2" stroke="#4090d0" stroke-width="0.8"/></svg>
<div class="tx" style="left:667.00px;top:412.70px;font-size:9.8px;line-height:13px;letter-spacing:0.000px;color:#a09c9a;transform:scaleX(0.8688);transform-origin:0 0;">Buldozer</div>

<svg class="abs" style="left:644px;top:431px" width="556" height="333" viewBox="644 431 556 333">
<defs>
<linearGradient id="gs" x1="0" y1="0" x2="0" y2="1"><stop offset="0" stop-color="#3486d0"/><stop offset="0.5" stop-color="#3a8cd3"/><stop offset="1" stop-color="#4a95d6"/></linearGradient>
<linearGradient id="gb" x1="0" y1="0" x2="1" y2="0"><stop offset="0" stop-color="#4a92d6"/><stop offset="0.45" stop-color="#8aaac8"/><stop offset="1" stop-color="#b4b8bc"/></linearGradient>
<linearGradient id="gr" gradientUnits="userSpaceOnUse" x1="1030" y1="640" x2="1080" y2="590"><stop offset="0" stop-color="#3e4a58"/><stop offset="0.3" stop-color="#345c88"/><stop offset="0.65" stop-color="#2d68aa"/><stop offset="1" stop-color="#3a80c6"/></linearGradient>
<linearGradient id="gu" gradientUnits="userSpaceOnUse" x1="980" y1="660" x2="1110" y2="720"><stop offset="0" stop-color="#4288cc"/><stop offset="0.5" stop-color="#377cc2"/><stop offset="1" stop-color="#2f6eb2"/></linearGradient>
<radialGradient id="go" gradientUnits="userSpaceOnUse" cx="1105" cy="690" r="46"><stop offset="0" stop-color="#2d6aae"/><stop offset="0.7" stop-color="#27609f"/><stop offset="1" stop-color="#1d4a84"/></radialGradient>
<filter id="nz" x="0" y="0" width="100%" height="100%"><feTurbulence type="fractalNoise" baseFrequency="0.35 0.5" numOctaves="3" seed="4"/><feColorMatrix type="matrix" values="0 0 0 0 1  0 0 0 0 1  0 0 0 0 1  1.5 0 0 0 -0.62"/></filter>
<filter id="nzd" x="0" y="0" width="100%" height="100%"><feTurbulence type="fractalNoise" baseFrequency="0.12 0.2" numOctaves="3" seed="9"/><feColorMatrix type="matrix" values="0 0 0 0 0.12  0 0 0 0 0.14  0 0 0 0 0.2  1.8 0 0 0 -0.7"/></filter>
<filter id="bl" x="-20%" y="-20%" width="140%" height="140%"><feGaussianBlur stdDeviation="2.2"/></filter>
<clipPath id="cs"><path d="M769.3 566.2 C775.8 567.2 795.9 570.5 808.0 572.0 C820.1 573.5 830.7 574.6 842.0 575.4 C853.3 576.2 866.3 576.9 876.0 577.0 C885.7 577.1 893.7 576.5 900.0 576.3 C906.3 576.1 908.2 575.6 914.0 575.6 C919.8 575.6 927.4 575.7 934.5 576.4 C941.6 577.1 949.8 578.2 956.6 579.8 C963.4 581.3 968.8 583.2 975.3 585.7 C981.8 588.2 990.3 592.4 995.7 595.0 C1001.1 597.6 1005.7 600.2 1007.7 601.2 L1019.6 614.7 L1029.8 626.6 L1040 638.5 L1058 656 L1075.8 673.6 L1060.0 668.0 C1056.7 666.9 1046.7 663.1 1040.0 661.5 C1033.3 659.9 1026.8 659.1 1020.0 658.4 C1013.2 657.6 1008.2 657.4 999.0 657.0 C989.8 656.6 973.5 656.3 965.0 656.3 C956.5 656.3 956.5 656.6 948.0 657.0 C939.5 657.4 925.3 658.2 914.0 658.8 C902.7 659.3 889.2 660.2 880.0 660.3 C870.8 660.4 868.2 659.9 859.0 659.2 C849.8 658.6 835.5 657.6 825.0 656.4 C814.5 655.2 802.4 652.7 796.0 652.0 C789.6 651.3 788.3 652.0 786.8 652.0 L777.4 621.5 L771.5 592.6Z"/></clipPath>
<clipPath id="cr"><path d="M1007.8 601.4 C1008.3 599.8 1008.7 594.8 1011.0 592.0 C1013.3 589.2 1017.2 586.4 1021.4 584.9 C1025.6 583.4 1030.8 582.7 1036.0 583.2 C1041.2 583.7 1047.6 585.6 1052.8 587.8 C1058.0 590.0 1063.2 593.1 1067.4 596.2 C1071.6 599.3 1074.5 603.0 1078.0 606.6 C1081.5 610.2 1084.2 614.8 1088.4 618.1 C1092.6 621.4 1097.8 623.7 1103.0 626.5 C1108.2 629.3 1114.6 631.4 1119.8 634.9 C1125.0 638.4 1130.4 643.2 1134.4 647.4 C1138.4 651.6 1141.9 655.5 1143.8 660.0 C1145.7 664.5 1146.2 669.8 1146.0 674.7 C1145.8 679.6 1144.7 684.4 1142.8 689.3 C1140.9 694.2 1137.5 699.7 1134.4 703.9 C1131.3 708.1 1127.8 711.6 1124.0 714.4 C1120.2 717.2 1115.6 719.5 1111.4 720.5 C1107.2 721.5 1103.3 721.5 1098.8 720.5 C1094.3 719.5 1089.1 717.2 1084.2 714.4 C1079.3 711.6 1074.7 707.7 1069.5 703.9 C1064.3 700.1 1059.1 695.2 1052.8 691.4 C1046.5 687.6 1038.9 683.7 1031.9 680.9 C1024.9 678.1 1017.9 676.6 1010.9 674.6 C1003.9 672.6 996.8 670.2 990.0 668.6 C983.2 667.0 975.8 665.7 970.0 664.8 C964.2 663.9 957.5 663.3 955.0 663.0 L965 656.5 L999 657.2 L1040 661.6 L1075.8 673.6 L1040 638.5 L1019.6 614.7Z"/></clipPath>
</defs>
<!-- lower/under sheet + roll body -->
<path d="M1007.8 601.4 C1008.3 599.8 1008.7 594.8 1011.0 592.0 C1013.3 589.2 1017.2 586.4 1021.4 584.9 C1025.6 583.4 1030.8 582.7 1036.0 583.2 C1041.2 583.7 1047.6 585.6 1052.8 587.8 C1058.0 590.0 1063.2 593.1 1067.4 596.2 C1071.6 599.3 1074.5 603.0 1078.0 606.6 C1081.5 610.2 1084.2 614.8 1088.4 618.1 C1092.6 621.4 1097.8 623.7 1103.0 626.5 C1108.2 629.3 1114.6 631.4 1119.8 634.9 C1125.0 638.4 1130.4 643.2 1134.4 647.4 C1138.4 651.6 1141.9 655.5 1143.8 660.0 C1145.7 664.5 1146.2 669.8 1146.0 674.7 C1145.8 679.6 1144.7 684.4 1142.8 689.3 C1140.9 694.2 1137.5 699.7 1134.4 703.9 C1131.3 708.1 1127.8 711.6 1124.0 714.4 C1120.2 717.2 1115.6 719.5 1111.4 720.5 C1107.2 721.5 1103.3 721.5 1098.8 720.5 C1094.3 719.5 1089.1 717.2 1084.2 714.4 C1079.3 711.6 1074.7 707.7 1069.5 703.9 C1064.3 700.1 1059.1 695.2 1052.8 691.4 C1046.5 687.6 1038.9 683.7 1031.9 680.9 C1024.9 678.1 1017.9 676.6 1010.9 674.6 C1003.9 672.6 996.8 670.2 990.0 668.6 C983.2 667.0 975.8 665.7 970.0 664.8 C964.2 663.9 957.5 663.3 955.0 663.0 L965 656.5 L999 657.2 L1040 661.6 L1075.8 673.6 L1040 638.5 L1019.6 614.7Z" fill="url(#gu)"/>
<!-- back layers -->
<path d="M756.2 565.7 L770.0 573.0 L773.0 600.0 L779.0 630.0 L787.0 652.0 L790.0 660.0 L767.2 655.8 L763.0 626.6 L758.7 592.6Z" fill="#4e92d4"/>
<path d="M763.0 572.0 L769.5 575.0 L772.5 600.0 L778.5 632.0 L786.0 652.0 L777.0 654.0 L769.5 630.0 L765.0 600.0Z" fill="#aeb6bf" opacity="0.85"/>
<path d="M757.5 575.0 L761.0 577.0 L766.0 640.0 L763.5 645.0Z" fill="#8fb4dc" opacity="0.6"/>
<path d="M767.0 652.6 L787.0 651.6 L796.0 652.0 L825.0 656.4 L859.0 659.2 L880.0 660.3 L914.0 658.8 L948.0 657.0 L965.0 656.3 L999.0 657.0 L1010.0 658.4 L985.0 660.2 L950.0 662.6 L900.0 664.6 L850.0 666.2 L808.0 666.0 L789.4 663.6 L767.2 656.4Z" fill="#76838f"/>
<path d="M771 655.4 L790 658.4 L830 661.4 L880 662.6 L940 660.6" fill="none" stroke="#4a5562" stroke-width="1.4"/><path d="M772 657.4 L790 661.6 L810 664 L850 664.6 L890 663.6" fill="none" stroke="#cfd6dc" stroke-width="1.3"/>
<path d="M767.2 656 L789.4 663.8 L808 666.2 L850 666.4 L900 664.8 L950 663 L985 660.6 L1010 659" fill="none" stroke="#34363a" stroke-width="1.2"/>
<path d="M783 661.4 h3 M790 663 h4" stroke="#1c1c1c" stroke-width="1.6"/>
<!-- roll top surface -->
<path d="M1007.8 601.4 L1011.0 592.0 L1021.4 584.9 L1036.0 583.2 L1052.8 587.8 L1067.4 596.2 L1078.0 606.6 L1088.4 618.1 L1103.0 626.5 L1119.8 634.9 L1134.4 647.4 L1140.0 654.0 L1126.0 646.6 L1111.4 648.6 L1098.8 653.9 L1088.4 663.4 L1077.0 673.8 L1058.0 656.0 L1040.0 638.5 L1019.6 614.7Z" fill="url(#gr)"/>
<!-- opening -->
<path d="M1088.4 663.4 C1091.4 659.7 1095.0 656.4 1098.8 653.9 C1102.6 651.4 1106.9 649.8 1111.4 648.6 C1115.9 647.4 1121.8 646.2 1126.0 646.6 C1130.2 647.0 1133.6 648.4 1136.5 651.0 C1139.4 653.6 1142.1 657.8 1143.6 662.0 C1145.1 666.2 1145.8 671.4 1145.6 676.0 C1145.4 680.6 1144.3 685.0 1142.4 689.6 C1140.5 694.2 1137.1 699.6 1134.0 703.6 C1130.9 707.6 1127.4 711.1 1123.6 713.8 C1119.8 716.5 1115.1 718.8 1111.0 719.8 C1106.9 720.8 1102.7 720.6 1099.0 719.6 C1095.3 718.6 1091.8 716.6 1089.0 714.0 C1086.2 711.4 1083.7 708.0 1082.0 704.0 C1080.3 700.0 1079.2 694.7 1079.0 690.0 C1078.8 685.3 1079.4 680.4 1081.0 676.0 C1082.6 671.6 1085.4 667.1 1088.4 663.4Z" fill="url(#go)"/>
<g clip-path="url(#cr)">
<rect x="950" y="580" width="200" height="145" filter="url(#nzd)" opacity="0.5"/>
<rect x="950" y="580" width="200" height="145" filter="url(#nz)" opacity="0.16"/>
<path d="M1010 603 L1022 617 L1042 640 L1060 657 L1076 672 L1084 664 L1066 648 L1048 628 L1030 606 L1018 596Z" fill="#66727e" opacity="0.55" filter="url(#bl)"/>
<path d="M1030 600 L1046 618 L1060 640 L1075 650 L1070 630 L1052 606Z" fill="#7f8c98" opacity="0.28" filter="url(#bl)"/>
<path d="M1033.4 607.7 L1044.5 599.2 L1056.3 599.2 L1070.7 613.6 L1047.0 622.0" fill="none" stroke="#c8dcf0" stroke-width="1.2" stroke-linejoin="round" stroke-linecap="round" opacity="0.5"/><path d="M1049.0 607.7 L1061.5 604.5" fill="none" stroke="#c8dcf0" stroke-width="1.2" stroke-linejoin="round" stroke-linecap="round" opacity="0.5"/><path d="M1052.4 600.5 L1057.6 615.6" fill="none" stroke="#c8dcf0" stroke-width="1.2" stroke-linejoin="round" stroke-linecap="round" opacity="0.5"/><path d="M1040.0 603.0 L1049.0 607.7 L1044.0 612.0" fill="none" stroke="#c8dcf0" stroke-width="1.2" stroke-linejoin="round" stroke-linecap="round" opacity="0.5"/><path d="M1078.5 618.8 L1094.2 623.4" fill="none" stroke="#c8dcf0" stroke-width="1.2" stroke-linejoin="round" stroke-linecap="round" opacity="0.5"/><path d="M1085.0 624.0 L1090.3 628.7 L1098.0 627.0" fill="none" stroke="#c8dcf0" stroke-width="1.2" stroke-linejoin="round" stroke-linecap="round" opacity="0.5"/><path d="M1056.3 630.0 L1064.0 626.7 L1073.3 636.5 L1064.0 645.7 L1057.6 640.4" fill="none" stroke="#c8dcf0" stroke-width="1.2" stroke-linejoin="round" stroke-linecap="round" opacity="0.5"/><path d="M1062.8 658.8 L1068.0 651.0 L1077.2 643.0 L1091.6 633.9 L1104.7 631.3 L1118.0 634.0" fill="none" stroke="#c8dcf0" stroke-width="1.2" stroke-linejoin="round" stroke-linecap="round" opacity="0.5"/><path d="M1066.0 634.0 L1060.0 640.0" fill="none" stroke="#c8dcf0" stroke-width="1.2" stroke-linejoin="round" stroke-linecap="round" opacity="0.5"/>
<path d="M1088.0 665.0 L1108.0 654.0 L1118.0 661.0 L1100.0 671.0 L1088.0 665.0" fill="none" stroke="#c0d4ea" stroke-width="1.2" stroke-linejoin="round" stroke-linecap="round" opacity="0.5"/><path d="M1110.0 676.0 L1119.0 683.0 L1129.0 664.0 L1127.0 653.0" fill="none" stroke="#c0d4ea" stroke-width="1.2" stroke-linejoin="round" stroke-linecap="round" opacity="0.5"/><path d="M1122.0 657.0 L1133.0 660.0" fill="none" stroke="#c0d4ea" stroke-width="1.2" stroke-linejoin="round" stroke-linecap="round" opacity="0.5"/><path d="M1071.0 692.0 L1083.0 685.0 L1096.0 683.0 L1104.0 690.0 L1098.0 699.0 L1082.0 700.0 L1071.0 692.0" fill="none" stroke="#c0d4ea" stroke-width="1.2" stroke-linejoin="round" stroke-linecap="round" opacity="0.5"/>
<path d="M1077.0 673.8 C1078.9 672.1 1084.8 666.7 1088.4 663.4 C1092.0 660.1 1095.0 656.4 1098.8 653.9 C1102.6 651.4 1106.9 649.8 1111.4 648.6 C1115.9 647.4 1121.8 646.2 1126.0 646.6 C1130.2 647.0 1133.6 648.4 1136.5 651.0 C1139.4 653.6 1142.1 657.8 1143.6 662.0 C1145.1 666.2 1145.3 673.7 1145.6 676.0" fill="none" stroke="#b4cbe4" stroke-width="1.6" opacity="0.95"/>
<path d="M1145.6 676.0 C1145.1 678.3 1144.3 685.0 1142.4 689.6 C1140.5 694.2 1137.1 699.6 1134.0 703.6 C1130.9 707.6 1127.4 711.1 1123.6 713.8 C1119.8 716.5 1113.1 718.8 1111.0 719.8" fill="none" stroke="#1c3f70" stroke-width="1.6" opacity="0.7"/>
<path d="M1007.8 601.4 L1019.6 614.7 L1040 638.5 L1058 656 L1075.8 673.6" fill="none" stroke="#3c4046" stroke-width="2.2" opacity="0.75"/>
<path d="M1011.0 592.0 C1012.7 590.8 1017.2 586.4 1021.4 584.9 C1025.6 583.4 1030.8 582.7 1036.0 583.2 C1041.2 583.7 1047.6 585.6 1052.8 587.8 C1058.0 590.0 1065.0 594.8 1067.4 596.2" fill="none" stroke="#a8c4e0" stroke-width="1.2" opacity="0.8"/>
</g>
<!-- main sheet -->
<path d="M769.3 566.2 C775.8 567.2 795.9 570.5 808.0 572.0 C820.1 573.5 830.7 574.6 842.0 575.4 C853.3 576.2 866.3 576.9 876.0 577.0 C885.7 577.1 893.7 576.5 900.0 576.3 C906.3 576.1 908.2 575.6 914.0 575.6 C919.8 575.6 927.4 575.7 934.5 576.4 C941.6 577.1 949.8 578.2 956.6 579.8 C963.4 581.3 968.8 583.2 975.3 585.7 C981.8 588.2 990.3 592.4 995.7 595.0 C1001.1 597.6 1005.7 600.2 1007.7 601.2 L1019.6 614.7 L1029.8 626.6 L1040 638.5 L1058 656 L1075.8 673.6 L1060.0 668.0 C1056.7 666.9 1046.7 663.1 1040.0 661.5 C1033.3 659.9 1026.8 659.1 1020.0 658.4 C1013.2 657.6 1008.2 657.4 999.0 657.0 C989.8 656.6 973.5 656.3 965.0 656.3 C956.5 656.3 956.5 656.6 948.0 657.0 C939.5 657.4 925.3 658.2 914.0 658.8 C902.7 659.3 889.2 660.2 880.0 660.3 C870.8 660.4 868.2 659.9 859.0 659.2 C849.8 658.6 835.5 657.6 825.0 656.4 C814.5 655.2 802.4 652.7 796.0 652.0 C789.6 651.3 788.3 652.0 786.8 652.0 L777.4 621.5 L771.5 592.6Z" fill="url(#gs)"/>
<g clip-path="url(#cs)">
<rect x="760" y="560" width="330" height="120" filter="url(#nz)" opacity="0.32"/>
<path d="M800 640 L1000 650 L1060 668 L790 662Z" fill="#cfe0f0" opacity="0.2" filter="url(#bl)"/>
<g stroke="#2f78be" stroke-width="0.7" opacity="0.55" fill="none">
<path d="M800 571L826 656M830 574.5L862 659M862 576.5L900 660M894 576.5L938 658M926 576L976 657M956 580L1014 659M984 590L1046 664"/>
<path d="M772 585L1000 597M776 606L1026 622M782 630L1046 646"/>
</g>
<path d="M788.6 591.9 L869.8 580.8 L895.0 585.0 L923.0 590.3" fill="none" stroke="#e8f2fc" stroke-width="1.4" stroke-linejoin="round" stroke-linecap="round" opacity="0.88"/><path d="M788.6 591.9 L833.2 608.0 L894.0 593.4 L913.8 590.3" fill="none" stroke="#e8f2fc" stroke-width="1.4" stroke-linejoin="round" stroke-linecap="round" opacity="0.88"/><path d="M817.5 593.4 L832.0 599.7 L842.6 595.5" fill="none" stroke="#e8f2fc" stroke-width="1.4" stroke-linejoin="round" stroke-linecap="round" opacity="0.88"/><path d="M849.0 587.0 L865.6 594.0 L878.2 590.3 L862.0 584.2" fill="none" stroke="#e8f2fc" stroke-width="1.4" stroke-linejoin="round" stroke-linecap="round" opacity="0.88"/><path d="M877.2 600.7 L890.8 606.0 L903.4 600.7" fill="none" stroke="#e8f2fc" stroke-width="1.4" stroke-linejoin="round" stroke-linecap="round" opacity="0.88"/><path d="M851.0 617.0 L868.8 621.7 L924.3 596.5 L956.8 607.0" fill="none" stroke="#e8f2fc" stroke-width="1.4" stroke-linejoin="round" stroke-linecap="round" opacity="0.88"/><path d="M867.8 614.3 L879.3 610.2" fill="none" stroke="#e8f2fc" stroke-width="1.4" stroke-linejoin="round" stroke-linecap="round" opacity="0.88"/><path d="M890.8 617.5 L928.5 623.8 L951.5 622.7" fill="none" stroke="#e8f2fc" stroke-width="1.4" stroke-linejoin="round" stroke-linecap="round" opacity="0.88"/><path d="M951.5 579.8 L965.0 597.6" fill="none" stroke="#e8f2fc" stroke-width="1.4" stroke-linejoin="round" stroke-linecap="round" opacity="0.88"/><path d="M947.3 597.6 L975.3 601.0 L989.0 609.6" fill="none" stroke="#e8f2fc" stroke-width="1.4" stroke-linejoin="round" stroke-linecap="round" opacity="0.88"/><path d="M975.3 601.0 L978.0 606.6 L986.0 609.2 L983.0 603.4 L975.3 601.0" fill="none" stroke="#e8f2fc" stroke-width="1.4" stroke-linejoin="round" stroke-linecap="round" opacity="0.88"/><path d="M957.8 611.2 L968.3 621.7 L977.0 617.2 L975.3 613.8 L1017.9 654.7" fill="none" stroke="#e8f2fc" stroke-width="1.4" stroke-linejoin="round" stroke-linecap="round" opacity="0.88"/><path d="M1002.0 632.0 L1010.0 629.0 L1016.0 636.0" fill="none" stroke="#e8f2fc" stroke-width="1.4" stroke-linejoin="round" stroke-linecap="round" opacity="0.88"/><path d="M1012.0 643.0 L1022.0 641.0 L1030.0 650.0 L1020.0 652.5 L1012.0 643.0" fill="none" stroke="#e8f2fc" stroke-width="1.4" stroke-linejoin="round" stroke-linecap="round" opacity="0.88"/>
<path d="M769.3 566.2 L778.3 567.2 L781.7 592.6 L788.5 623.2 L796.4 651.4 L786.8 652.0 L777.4 621.5 L771.5 592.6Z" fill="#c6d8e8"/>
<path d="M769.3 566.2 L778.3 567.2 L781.7 592.6 L788.5 623.2 L796.4 651.4 L786.8 652.0 L777.4 621.5 L771.5 592.6Z" fill="#ffffff" opacity="0.25" filter="url(#nz)"/>
</g>
<path d="M786.8 652.0 C788.3 652.0 789.6 651.3 796.0 652.0 C802.4 652.7 814.5 655.2 825.0 656.4 C835.5 657.6 849.8 658.6 859.0 659.2 C868.2 659.9 870.8 660.4 880.0 660.3 C889.2 660.2 902.7 659.3 914.0 658.8 C925.3 658.2 939.5 657.4 948.0 657.0 C956.5 656.6 956.5 656.3 965.0 656.3 C973.5 656.3 989.8 656.6 999.0 657.0 C1008.2 657.4 1013.2 657.6 1020.0 658.4 C1026.8 659.1 1033.3 659.9 1040.0 661.5 C1046.7 663.1 1056.7 666.9 1060.0 668.0 L1075.8 673.6" fill="none" stroke="#dfe8f1" stroke-width="1.5"/>
<path d="M769.3 566.2 C775.8 567.2 795.9 570.5 808.0 572.0 C820.1 573.5 830.7 574.6 842.0 575.4 C853.3 576.2 866.3 576.9 876.0 577.0 C885.7 577.1 893.7 576.5 900.0 576.3 C906.3 576.1 908.2 575.6 914.0 575.6 C919.8 575.6 927.4 575.7 934.5 576.4 C941.6 577.1 949.8 578.2 956.6 579.8 C963.4 581.3 968.8 583.2 975.3 585.7 C981.8 588.2 990.3 592.4 995.7 595.0 C1001.1 597.6 1005.7 600.2 1007.7 601.2" fill="none" stroke="#9cc0e4" stroke-width="0.9" opacity="0.8"/>
<circle cx="843.5" cy="610.3" r="1.3" fill="#3a4a5a"/>
<!-- fold white highlight under sheet near crease -->
<path d="M1000 658.5 L1040 663 L1074 674.5 L1040 666.5 L1005 661Z" fill="#d8dde2" opacity="0.9"/>
<path d="M960 660.6 L1000 661.4 L1040 667.6 L1072 676" fill="none" stroke="#2a3a4c" stroke-width="1" opacity="0.7"/>
</svg>
<div class="tx" style="left:1180.20px;top:697.59px;font-size:11px;line-height:14px;letter-spacing:0.000px;color:#a6b4cc;transform:scaleX(1.0000);transform-origin:0 0;">Act</div>
<div class="tx" style="left:1180.20px;top:715.59px;font-size:8.4px;line-height:11px;letter-spacing:0.000px;color:#a6b4cc;transform:scaleX(1.0000);transform-origin:0 0;">Go t</div>


</body></html>
